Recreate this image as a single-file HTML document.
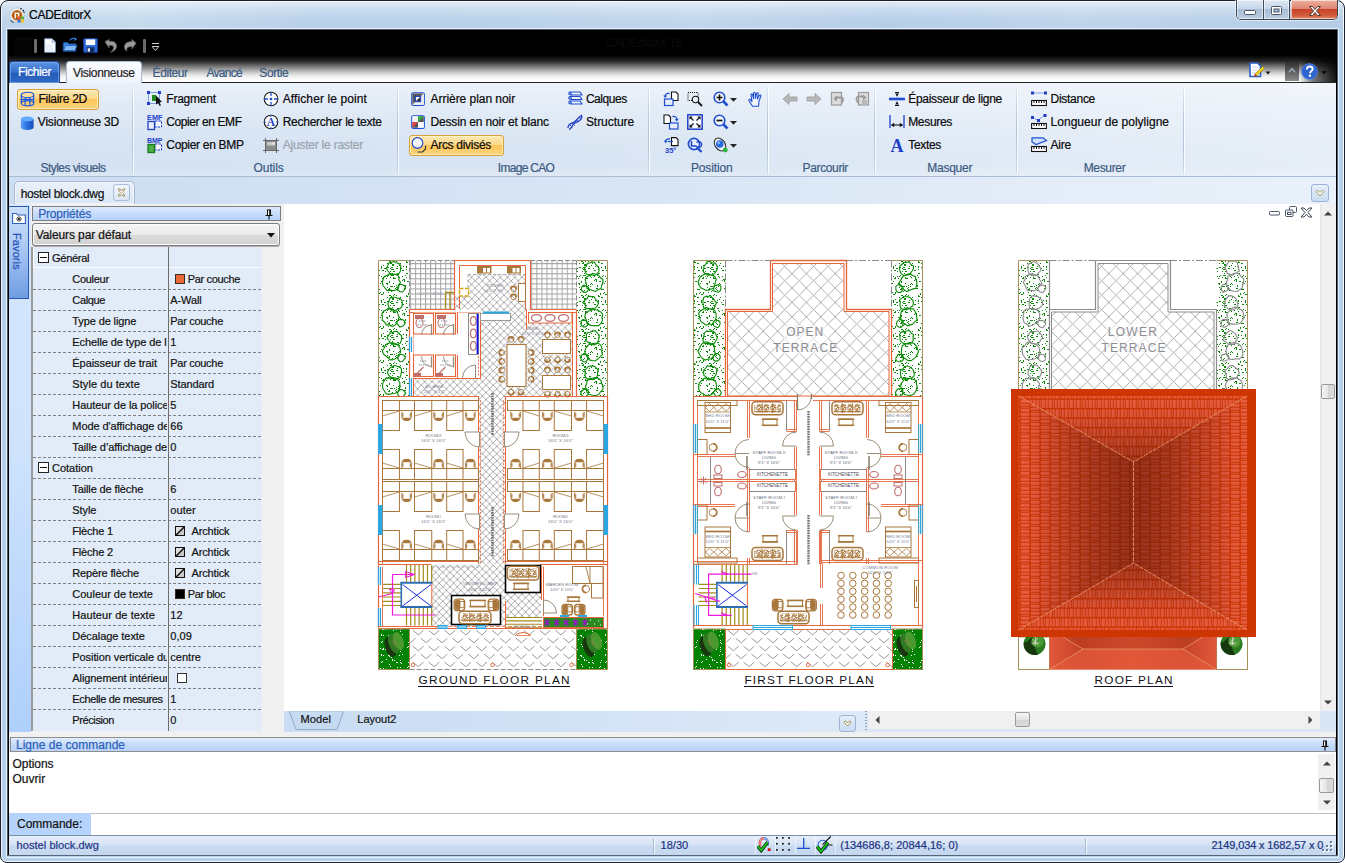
<!DOCTYPE html>
<html><head><meta charset="utf-8"><title>CADEditorX</title><style>
html,body{margin:0;padding:0;background:#fff;}
body{width:1345px;height:863px;overflow:hidden;position:relative;font-family:"Liberation Sans",sans-serif;}
.a{position:absolute;display:block;}
.t{position:absolute;white-space:nowrap;-webkit-text-stroke:.2px currentColor;font-family:"Liberation Sans",sans-serif;}
#frame{left:0;top:0;width:1345px;height:863px;box-sizing:border-box;border:1px solid #1a202c;border-radius:8px 8px 7px 7px;background:#b5d0ec;box-shadow:inset 0 0 0 1px #f4f9fe;}
#titlebg{left:2px;top:2px;width:1341px;height:27px;border-radius:6px 6px 0 0;background:linear-gradient(180deg,rgba(255,255,255,.55) 0,rgba(255,255,255,.22) 9px,rgba(255,255,255,0) 20px),linear-gradient(100deg,#bcd3ea 0%,#c6daee 10%,#b8d0e9 24%,#bad2ea 40%,#c1d6ec 52%,#b6cee8 66%,#bdd4eb 80%,#b5cde7 100%);}
#frame2{left:6px;top:28px;width:1333px;height:830px;box-sizing:border-box;border:1px solid rgba(236,244,252,.95);}
#frame3{left:7px;top:29px;width:1331px;height:827px;box-sizing:border-box;border:1px solid #4a5868;border-bottom-color:#56667a;background:#dbe6f5;box-shadow:inset 1px 0 #000,inset -1px 0 #000,inset 0 1px #000;}
#capbtns{left:1236px;top:0;width:102px;height:20px;border:1px solid #3d4856;border-top:none;border-radius:0 0 5px 5px;box-sizing:border-box;overflow:hidden;box-shadow:0 0 0 1px rgba(255,255,255,.55)}
.cb{position:absolute;top:0;height:19px;box-sizing:border-box;border-right:1px solid #3d4856;background:linear-gradient(#dde8f4,#c6d6e8 48%,#a9bed6 50%,#bccde2);box-shadow:inset 0 0 0 1px rgba(255,255,255,.55)}
.cx{border-right:none;background:linear-gradient(#efb09e,#dd8470 48%,#c9432b 50%,#d0593c 80%,#e08a62);}
#glass{left:9px;top:30px;width:1327px;height:53px;background:linear-gradient(#000 0,#000 25px,#262626 31px,#858585 37.5px,#d6d6d6 43.5px,#f3f3f3 47px,#fff 51px);}
#tabline{left:9px;top:82px;width:1327px;height:1px;background:#20242b;}
#fichier{left:9px;top:61px;width:51px;height:22px;box-sizing:border-box;border:1px solid #1d4a9e;border-bottom:none;border-radius:4px 4px 0 0;background:linear-gradient(#5d93e2,#3a73cf 45%,#245bb8 55%,#2f69c6);box-shadow:inset 0 0 0 1px rgba(140,180,240,.6)}
#vtab{left:66px;top:61px;width:76px;height:23px;box-sizing:border-box;border:1px solid #a9bcd6;border-bottom:none;border-radius:4px 4px 0 0;background:linear-gradient(#fbfcfe,#eef3fa);}
#ribbon{left:9px;top:83px;width:1327px;height:94px;box-sizing:border-box;border-bottom:1px solid #a9bcd6;background:linear-gradient(90deg,rgba(255,255,255,0) 0%,rgba(255,255,255,.12) 40%,rgba(255,255,255,.42) 100%),linear-gradient(#e9f0f9,#e0eaf6 22%,#d6e3f3 60%,#d3e1f2 88%,#dae6f4);}
#docbar{left:9px;top:177px;width:1327px;height:27px;background:linear-gradient(90deg,#cddef2 0%,#d2e1f3 25%,#dbe7f6 55%,#e4edf8 80%,#e9f1fa 100%);}
#doctab{left:14px;top:181px;width:121px;height:23px;box-sizing:border-box;border:1px solid #a3b7d6;border-bottom:none;border-radius:5px 5px 0 0;background:linear-gradient(#e9f0fa,#dbe6f5);box-shadow:inset 0 0 0 1px rgba(255,255,255,.6)}
</style></head><body>
<div class="a" id="frame"></div>
<div class="a" id="titlebg"></div>
<div class="a" id="frame2"></div>
<div class="a" id="frame3"></div>
<svg class="a" style="left:9px;top:7px;" width="16" height="17" viewBox="0 0 16 17">
      <circle cx="8" cy="8" r="7.3" fill="#e9eef5" stroke="#b9c3d0" stroke-width="0.8"/>
      <circle cx="8" cy="8.3" r="5.3" fill="#c8701c"/>
      <circle cx="8" cy="8.3" r="3.6" fill="none" stroke="#8a3e08" stroke-width="1"/>
      <path d="M6.2 11.5V6.2h3.6v5.3" fill="none" stroke="#fff" stroke-width="1.3"/>
      <rect x="8.5" y="9.5" width="3.2" height="3" fill="#e2572a"/><rect x="11.8" y="9.5" width="3.2" height="3" fill="#58b232"/>
      <rect x="8.5" y="12.6" width="3.2" height="3" fill="#3d6fd0"/><rect x="11.8" y="12.6" width="3.2" height="3" fill="#efc52c"/>
      <circle cx="12" cy="1.8" r=".8" fill="#111"/><circle cx="14.2" cy="3.6" r=".8" fill="#111"/><circle cx="15" cy="5.2" r=".7" fill="#111"/>
      <circle cx="2.2" cy="14" r=".7" fill="#111"/><circle cx="4" cy="15.3" r=".7" fill="#111"/></svg>
<span class="t" style="left:29px;top:7.0px;line-height:16px;font-size:12px;color:#000;letter-spacing:-0.269px;">CADEditorX</span>
<div class="a" id="capbtns"><div class="cb" style="width:27px"></div><div class="cb" style="width:26px;left:27px"></div><div class="cb cx" style="left:54px;width:47px"></div></div>
<svg class="a" style="left:1244px;top:10px;" width="12" height="6" viewBox="0 0 12 6"><rect x=".5" y=".5" width="11" height="4" rx="1" fill="#fff" stroke="#4a5568" stroke-width="1"/></svg>
<svg class="a" style="left:1271px;top:6px;" width="12" height="10" viewBox="0 0 12 10"><rect x=".5" y=".5" width="10" height="8" rx="1" fill="#fff" stroke="#4a5568"/><rect x="3" y="3" width="5" height="3" fill="#a9bdd4" stroke="#4a5568"/></svg>
<svg class="a" style="left:1308px;top:5px;" width="14" height="12" viewBox="0 0 14 12"><path d="M1.5 1.5h3l2.5 3 2.5-3h3l-4 4.5 4 4.5h-3l-2.5-3-2.5 3h-3l4-4.5z" fill="#fff" stroke="#54392f" stroke-width="1"/></svg>
<div class="a" id="glass"></div>
<div class="a" style="left:14px;top:37px;width:18px;height:18px;background:#050505"></div>
<div class="a" style="left:34px;top:39px;width:3px;height:14px;background:#6a6a6a;border-radius:1px"></div>
<svg class="a" style="left:44px;top:38px;" width="12" height="15" viewBox="0 0 13 16"><path d="M.7.7h8l3.6 3.6v11H.7z" fill="#fff" stroke="#8aa0c8" stroke-width="1"/><path d="M8.7.7v3.6h3.6" fill="#dfe8f6" stroke="#8aa0c8"/><path d="M2 6h8v8H2z" fill="#eaf0fb"/></svg>
<svg class="a" style="left:62px;top:37px;" width="16" height="15" viewBox="0 0 17 17"><path d="M1 6.5h5l1 1.5h8v8H1z" fill="#3f8ee6" stroke="#1d5cb6"/><path d="M1 15.5l2.5-6h13l-2.5 6z" fill="#7fbaf5" stroke="#1d5cb6"/><path d="M8 4c2-3 5-3 7-1.5" fill="none" stroke="#2f7de0" stroke-width="1.2"/><path d="M13.3.8l2.2 1.9-2.6 1" fill="none" stroke="#2f7de0" stroke-width="1.2"/></svg>
<svg class="a" style="left:83px;top:38px;" width="15" height="15" viewBox="0 0 16 16"><rect x=".6" y=".6" width="14.8" height="14.8" rx="1" fill="#2d67d8" stroke="#1b3f9c"/><rect x="3" y="1.5" width="10" height="6" fill="#fff"/><rect x="4" y="10" width="8" height="5.5" fill="#12295e"/><rect x="5" y="11" width="2.5" height="3.5" fill="#e8eefb"/></svg>
<svg class="a" style="left:103px;top:38px;" width="15" height="15" viewBox="0 0 16 16"><path d="M2 4l4.5-2.5v2.2c5-.8 8 1.5 8 5 0 3-2.5 5.5-6.5 6.5 2.5-2 3.5-3.5 3.2-5.3-.3-1.7-2-2.4-4.700-2v2.600z" fill="#9a9a9a" stroke="#5e5e5e" stroke-width=".8"/></svg>
<svg class="a" style="left:123px;top:38px;" width="15" height="15" viewBox="0 0 16 16"><path d="M14 5.500L9.500 1.500v2.500C4.500 3.500 1.500 6 1.500 9.500c0 2 1 3.500 2.500 4.500-.5-2.500.5-5 5.500-5v2.500z" fill="#9a9a9a" stroke="#5e5e5e" stroke-width=".8"/></svg>
<div class="a" style="left:143px;top:39px;width:3px;height:14px;background:#6a6a6a;border-radius:1px"></div>
<svg class="a" style="left:151px;top:43px;" width="9" height="9" viewBox="0 0 9 9"><path d="M1 .5h7" stroke="#cfcfcf" stroke-width="1"/><path d="M1.200 3.500h6.600L4.500 7.500z" fill="none" stroke="#cfcfcf" stroke-width="1"/></svg>
<span class="t" style="left:606px;top:35.0px;line-height:16px;font-size:12px;color:#0b0b0b;letter-spacing:-0.412px;">CADEditorX 15</span>
<div class="a" style="left:1299px;top:56px;width:37px;height:26px;background:linear-gradient(90deg,rgba(0,0,0,0),rgba(0,0,0,.5) 35%,rgba(0,0,0,.92))"></div>
<div class="a" style="left:1285px;top:61px;width:14px;height:20px;background:linear-gradient(#2a2a2a,#8c8c8c)"></div>
<svg class="a" style="left:1249px;top:62px;" width="22" height="18" viewBox="0 0 22 18"><path d="M1 1h7.500l3 3v10.500H1z" fill="#fff" stroke="#2b5fc4" stroke-width="1.600"/><path d="M3 5h6M3 8h5M3 11h4" stroke="#c9d6ee" stroke-width="1"/><path d="M5 14.500l1.500-3L13.500 4.500l2 2L8 13.500z" fill="#f3d21e" stroke="#7d6a12" stroke-width=".6"/><path d="M5 14.500l1.200-2.600 1.700 1.700z" fill="#c22a2a"/><path d="M16.500 9.500h5l-2.500 3z" fill="#111"/></svg>
<svg class="a" style="left:1287px;top:66px;" width="10" height="8" viewBox="0 0 10 8"><path d="M1 6l4-4.500 4 4.500-1.500 1L5 4 2.500 7z" fill="#b6bcc6" stroke="#5b6472" stroke-width=".8"/></svg>
<svg class="a" style="left:1301px;top:63px;" width="17" height="17" viewBox="0 0 17 17"><circle cx="8.500" cy="8.500" r="8" fill="#3c70d6" stroke="#5d8ae6" stroke-width=".8" stroke-dasharray="1.500 1"/><circle cx="8.500" cy="8.500" r="7" fill="#2f63cf"/><path d="M5.800 6.500c0-2 1.300-3 2.900-3 1.700 0 2.900 1 2.900 2.500 0 2.200-2.600 2.200-2.600 4.300" fill="none" stroke="#fff" stroke-width="1.900"/><circle cx="8.900" cy="12.800" r="1.200" fill="#fff"/></svg>
<svg class="a" style="left:1321px;top:71px;" width="7" height="4" viewBox="0 0 7 4"><path d="M0 0h6L3 3.500z" fill="#111"/></svg>
<div class="a" id="tabline"></div>
<div class="a" id="fichier"></div>
<span class="t" style="left:18px;top:64.0px;line-height:16px;font-size:12px;color:#fff;letter-spacing:-0.431px;">Fichier</span>
<div class="a" id="vtab"></div>
<span class="t" style="left:73px;top:65.0px;line-height:16px;font-size:12px;color:#1e1e1e;letter-spacing:-0.332px;">Visionneuse</span>
<span class="t" style="left:152.6px;top:65.0px;line-height:16px;font-size:12px;color:#3b5a82;letter-spacing:-0.431px;">Éditeur</span>
<span class="t" style="left:206.4px;top:65.0px;line-height:16px;font-size:12px;color:#3b5a82;letter-spacing:-0.716px;">Avancé</span>
<span class="t" style="left:259.3px;top:65.0px;line-height:16px;font-size:12px;color:#3b5a82;letter-spacing:-0.391px;">Sortie</span>
<div class="a" id="ribbon"></div>
<div class="a" style="left:132px;top:86px;width:1px;height:88px;background:linear-gradient(rgba(160,180,205,.15),#b4c5da 40%,#b4c5da 70%,rgba(160,180,205,.3))"></div>
<div class="a" style="left:133px;top:86px;width:1px;height:88px;background:rgba(255,255,255,.85)"></div>
<div class="a" style="left:397px;top:86px;width:1px;height:88px;background:linear-gradient(rgba(160,180,205,.15),#b4c5da 40%,#b4c5da 70%,rgba(160,180,205,.3))"></div>
<div class="a" style="left:398px;top:86px;width:1px;height:88px;background:rgba(255,255,255,.85)"></div>
<div class="a" style="left:648px;top:86px;width:1px;height:88px;background:linear-gradient(rgba(160,180,205,.15),#b4c5da 40%,#b4c5da 70%,rgba(160,180,205,.3))"></div>
<div class="a" style="left:649px;top:86px;width:1px;height:88px;background:rgba(255,255,255,.85)"></div>
<div class="a" style="left:767px;top:86px;width:1px;height:88px;background:linear-gradient(rgba(160,180,205,.15),#b4c5da 40%,#b4c5da 70%,rgba(160,180,205,.3))"></div>
<div class="a" style="left:768px;top:86px;width:1px;height:88px;background:rgba(255,255,255,.85)"></div>
<div class="a" style="left:874px;top:86px;width:1px;height:88px;background:linear-gradient(rgba(160,180,205,.15),#b4c5da 40%,#b4c5da 70%,rgba(160,180,205,.3))"></div>
<div class="a" style="left:875px;top:86px;width:1px;height:88px;background:rgba(255,255,255,.85)"></div>
<div class="a" style="left:1016px;top:86px;width:1px;height:88px;background:linear-gradient(rgba(160,180,205,.15),#b4c5da 40%,#b4c5da 70%,rgba(160,180,205,.3))"></div>
<div class="a" style="left:1017px;top:86px;width:1px;height:88px;background:rgba(255,255,255,.85)"></div>
<div class="a" style="left:1183px;top:86px;width:1px;height:88px;background:linear-gradient(rgba(160,180,205,.15),#b4c5da 40%,#b4c5da 70%,rgba(160,180,205,.3))"></div>
<div class="a" style="left:1184px;top:86px;width:1px;height:88px;background:rgba(255,255,255,.85)"></div>
<span class="t" style="left:40.5px;top:160.0px;line-height:16px;font-size:12px;color:#3b5a82;letter-spacing:-0.549px;">Styles visuels</span>
<span class="t" style="left:253.60000000000002px;top:160.0px;line-height:16px;font-size:12px;color:#3b5a82;letter-spacing:-0.112px;">Outils</span>
<span class="t" style="left:497.85px;top:160.0px;line-height:16px;font-size:12px;color:#3b5a82;letter-spacing:-0.708px;">Image CAO</span>
<span class="t" style="left:690.9499999999999px;top:160.0px;line-height:16px;font-size:12px;color:#3b5a82;letter-spacing:-0.123px;">Position</span>
<span class="t" style="left:802.5999999999999px;top:160.0px;line-height:16px;font-size:12px;color:#3b5a82;letter-spacing:-0.365px;">Parcourir</span>
<span class="t" style="left:927.2px;top:160.0px;line-height:16px;font-size:12px;color:#3b5a82;letter-spacing:-0.241px;">Masquer</span>
<span class="t" style="left:1083.7px;top:160.0px;line-height:16px;font-size:12px;color:#3b5a82;letter-spacing:-0.345px;">Mesurer</span>
<div class="a" style="left:17px;top:89px;width:80px;height:19px;border:1px solid #d9a13a;border-radius:3px;background:linear-gradient(#fde9b4,#fdd98a 45%,#fcc55a 50%,#fdd57e);box-shadow:inset 0 0 0 1px rgba(255,245,210,.7)"></div>
<div class="a" style="left:409px;top:135px;width:93px;height:19px;border:1px solid #d9a13a;border-radius:3px;background:linear-gradient(#fde9b4,#fdd98a 45%,#fcc55a 50%,#fdd57e);box-shadow:inset 0 0 0 1px rgba(255,245,210,.7)"></div>
<svg class="a" style="left:19.5px;top:90.5px;overflow:visible;" width="15" height="16" viewBox="0 0 16 16"><g fill="none" stroke="#1b57e6" stroke-width="1.300"><ellipse cx="8" cy="3.600" rx="6.600" ry="2.800"/><ellipse cx="8" cy="12.500" rx="6.600" ry="2.800"/><path d="M1.400 3.600v8.900M14.600 3.600v8.900M5.500 6.200v8.900M10.500 6.200v8.900M1.400 8.300h13.200"/></g></svg>
<span class="t" style="left:38.5px;top:91.0px;line-height:16px;font-size:12px;color:#0a0a0a;letter-spacing:-0.286px;">Filaire 2D</span>
<svg class="a" style="left:20px;top:114.5px;overflow:visible;" width="14.5" height="16" viewBox="0 0 16 16"><defs><linearGradient id="gc" x1="0" x2="1"><stop offset="0" stop-color="#5aa0f8"/><stop offset=".45" stop-color="#2d74e6"/><stop offset="1" stop-color="#1b4fb8"/></linearGradient></defs><path d="M1 3.500v9.500a7 2.700 0 0 0 14 0V3.500z" fill="url(#gc)"/><ellipse cx="8" cy="3.500" rx="7" ry="2.700" fill="#63a9fb"/></svg>
<span class="t" style="left:37.8px;top:114.0px;line-height:16px;font-size:12px;color:#0a0a0a;letter-spacing:-0.188px;">Visionneuse 3D</span>
<svg class="a" style="left:147px;top:91px;overflow:visible;" width="16" height="16" viewBox="0 0 16 16"><rect x="1.500" y="1.500" width="11" height="11" fill="none" stroke="#1f4fd0" stroke-dasharray="1 1"/><rect x="0" y="0" width="3" height="3" fill="#1f3fc8"/><rect x="11" y="0" width="3" height="3" fill="#1f3fc8"/><rect x="0" y="11" width="3" height="3" fill="#1f3fc8"/><rect x="5" y="4" width="4" height="6" fill="#1d8a22"/><path d="M9 4.500l6 6.500-2.600.2 1.600 3-1.300.7-1.600-3L9 13.500z" fill="#111"/></svg>
<span class="t" style="left:166.3px;top:91.0px;line-height:16px;font-size:12px;color:#0a0a0a;letter-spacing:-0.230px;">Fragment</span>
<svg class="a" style="left:147px;top:114px;overflow:visible;" width="16" height="16" viewBox="0 0 16 16"><text x="0" y="5.500" font-size="6.500" font-weight="bold" fill="#1f3fc8" font-family="Liberation Sans" textLength="15.500" lengthAdjust="spacingAndGlyphs">EMF</text><rect x="8" y="7" width="6.500" height="6" fill="#f4f7fd" stroke="#1f3fc8" stroke-dasharray="2.500 1"/><rect x="1" y="7.500" width="6.500" height="8" fill="#e9eefb" stroke="#1f3fc8" stroke-width="1.300"/></svg>
<span class="t" style="left:166.3px;top:114.0px;line-height:16px;font-size:12px;color:#0a0a0a;letter-spacing:-0.414px;">Copier en EMF</span>
<svg class="a" style="left:147px;top:137px;overflow:visible;" width="16" height="16" viewBox="0 0 16 16"><text x="0" y="5.500" font-size="6.500" font-weight="bold" fill="#1f3fc8" font-family="Liberation Sans" textLength="15.500" lengthAdjust="spacingAndGlyphs">BMP</text><rect x="8" y="7" width="6.500" height="6" fill="#f4f7fd" stroke="#1f3fc8" stroke-dasharray="2.500 1"/><rect x="1" y="7.500" width="6.500" height="8" fill="#4fb04a" stroke="#167a1a" stroke-width="1.300"/></svg>
<span class="t" style="left:166.3px;top:137.0px;line-height:16px;font-size:12px;color:#0a0a0a;letter-spacing:-0.312px;">Copier en BMP</span>
<svg class="a" style="left:263px;top:91px;overflow:visible;" width="16" height="16" viewBox="0 0 16 16"><circle cx="8" cy="8" r="6.800" fill="#fdfdfd" stroke="#1b1b1b" stroke-width="1.100"/><path d="M8 1.500v3.500M8 11v3.500M1.500 8H5M11 8h3.500" stroke="#1f4fd0" stroke-width="1.300"/><rect x="6.800" y="6.800" width="2.400" height="2.400" fill="#1f4fd0"/></svg>
<span class="t" style="left:282.7px;top:91.0px;line-height:16px;font-size:12px;color:#0a0a0a;letter-spacing:0.108px;">Afficher le point</span>
<svg class="a" style="left:263px;top:114px;overflow:visible;" width="16" height="16" viewBox="0 0 16 16"><circle cx="8" cy="8" r="6.800" fill="#fdfdfd" stroke="#1b1b1b" stroke-width="1.100"/><path d="M8 1v1.800M8 13.200V15M1 8h2M13 8h2" stroke="#1f4fd0" stroke-width="1.200"/><text x="8" y="12.300" text-anchor="middle" font-family="Liberation Serif" font-weight="bold" font-size="11.500" fill="#1f3fc8">A</text></svg>
<span class="t" style="left:282.7px;top:114.0px;line-height:16px;font-size:12px;color:#0a0a0a;letter-spacing:-0.265px;">Rechercher le texte</span>
<svg class="a" style="left:263px;top:137px;overflow:visible;" width="16" height="16" viewBox="0 0 16 16"><rect x="3" y="4" width="10" height="9" fill="#8c8c8c"/><rect x="4" y="5" width="8" height="3.500" fill="#c8c8c8"/><rect x="9.500" y="5.500" width="2" height="2" fill="#eee"/><path d="M2.500 1v15M13.500 1v15M0 3.500h16M0 13.500h16" stroke="#5a5a5a" stroke-width=".9" fill="none"/></svg>
<span class="t" style="left:282.7px;top:137.0px;line-height:16px;font-size:12px;color:#9aa3ad;letter-spacing:-0.219px;">Ajuster le raster</span>
<svg class="a" style="left:411px;top:91.5px;overflow:visible;" width="15" height="15" viewBox="0 0 16 16"><rect x=".8" y=".8" width="13.400" height="13.400" rx="1.500" fill="#fff" stroke="#1f4fd0" stroke-width="1.200"/><path d="M1.500 1.500h12L1.500 13.500z" fill="#555"/><path d="M13.500 1.500v12h-12z" fill="#f2f2f2"/><rect x="4.700" y="4.700" width="5.600" height="5.600" fill="#fff" stroke="#1f3fc8" stroke-width="1.200"/><path d="M5.300 9.700l4.400-4.400v4.400z" fill="#333"/></svg>
<span class="t" style="left:430.5px;top:91.0px;line-height:16px;font-size:12px;color:#0a0a0a;letter-spacing:-0.040px;">Arrière plan noir</span>
<svg class="a" style="left:411px;top:114.5px;overflow:visible;" width="15" height="15" viewBox="0 0 16 16"><rect x=".8" y=".8" width="13.400" height="13.400" rx="1.500" fill="#fff" stroke="#1f4fd0" stroke-width="1.200"/><rect x="1.500" y="1.500" width="6" height="6" fill="#f4f4f4"/><rect x="7.500" y="1.500" width="6" height="6" fill="#555"/><path d="M7.500 1.500h6v.1l-6 5.900z" fill="#2db53c"/><rect x="1.500" y="7.500" width="6" height="6" fill="#555"/><path d="M1.500 7.500h6l-6 6z" fill="#e8434a"/><rect x="7.500" y="7.500" width="6" height="6" fill="#fafafa"/></svg>
<span class="t" style="left:430.5px;top:114.0px;line-height:16px;font-size:12px;color:#0a0a0a;letter-spacing:-0.167px;">Dessin en noir et blanc</span>
<svg class="a" style="left:411px;top:137px;overflow:visible;" width="16" height="16" viewBox="0 0 16 16"><circle cx="6.500" cy="6" r="5.300" fill="#f4f7fd" stroke="#1f4fd0" stroke-width="1.200"/><path d="M14.500 8.500v3.500l-3 3H6.500" fill="none" stroke="#333" stroke-width="1.100"/></svg>
<span class="t" style="left:430.5px;top:137.0px;line-height:16px;font-size:12px;color:#0a0a0a;letter-spacing:-0.293px;">Arcs divisés</span>
<svg class="a" style="left:567px;top:91px;overflow:visible;" width="16" height="16" viewBox="0 0 16 16"><path d="M3 1h10l2 3H5z M3 5.500h10l2 3H5z M3 10h10l2 3H5z" fill="#f2f6fd" stroke="#1f4fd0" stroke-width="1.200" stroke-linejoin="round"/><path d="M3 1C1 2 1 4 5 4M3 5.500C1 6.500 1 8.500 5 8.500M3 10c-2 1-2 3 2 3" fill="none" stroke="#1f4fd0" stroke-width="1.200"/></svg>
<span class="t" style="left:585.9px;top:91.0px;line-height:16px;font-size:12px;color:#0a0a0a;letter-spacing:-0.447px;">Calques</span>
<svg class="a" style="left:567px;top:114px;overflow:visible;" width="16" height="16" viewBox="0 0 16 16"><path d="M1 14C1 8 6 10 8 7.500S12 3 15 1" fill="none" stroke="#1f3fc8" stroke-width="1.300"/><path d="M2 15.500C5 15 4 11 8 9s6-2 7-7" fill="none" stroke="#1f3fc8" stroke-width="1.300"/><path d="M2.500 10.500l3 3M5 9l3 2.800M9 5.500l3 2.600M11.500 3l2.600 2.600" stroke="#1f3fc8" stroke-width=".9"/></svg>
<span class="t" style="left:585.9px;top:114.0px;line-height:16px;font-size:12px;color:#0a0a0a;letter-spacing:-0.041px;">Structure</span>
<svg class="a" style="left:663px;top:91px;overflow:visible;" width="16" height="16" viewBox="0 0 16 16"><path d="M8.5 1h4.5l2 2v6.5h-6.5z" fill="#fff" stroke="#111" stroke-width="1.100"/><rect x="1.500" y="8" width="8.500" height="6.500" fill="#e6ecfa" stroke="#1f4fd0" stroke-width="1.200"/><path d="M6.500 2.500C3.500 2 2 3.500 2 6" fill="none" stroke="#1f4fd0" stroke-width="1.300"/><path d="M.3 4.300L2 7l2.200-2.300z" fill="#1f4fd0"/></svg>
<svg class="a" style="left:687px;top:91px;overflow:visible;" width="16" height="16" viewBox="0 0 16 16"><rect x="1" y="1.500" width="10" height="8" fill="none" stroke="#111" stroke-dasharray="1 1"/><circle cx="8.500" cy="8.500" r="3.200" fill="#eaf1fc" stroke="#111" stroke-width="1.100"/><path d="M11 11l4 4" stroke="#111" stroke-width="1.800"/></svg>
<svg class="a" style="left:713px;top:91px;overflow:visible;" width="16" height="16" viewBox="0 0 16 16"><circle cx="6.500" cy="6.500" r="5.300" fill="#f4f8fe" stroke="#1f4fd0" stroke-width="1.600"/><path d="M10.500 10.500l4 4" stroke="#1f4fd0" stroke-width="2.600"/><path d="M3.500 6.500h6M6.500 3.500v6" stroke="#111" stroke-width="1.700"/></svg>
<svg class="a" style="left:730px;top:98px;" width="7" height="4" viewBox="0 0 7 4"><path d="M0 0h7L3.500 3.700z" fill="#222"/></svg>
<svg class="a" style="left:747px;top:90.5px;overflow:visible;" width="16" height="16" viewBox="0 0 16 16"><path d="M5.500 15.200L2 9.700C1.300 8.500 2.700 7.700 3.500 8.700L5 10.600 4 4.200C3.800 3 5.300 2.700 5.600 3.900l.9 3.800V2.200c0-1.300 1.700-1.300 1.700 0l.2 5.300 1.200-5c.3-1.200 1.900-.8 1.600.4l-.9 5.100 2-3.500c.6-1 2-.3 1.500.8L12 10.200l-.5 5z" fill="#f4f8fe" stroke="#1f4fd0" stroke-width="1.100" stroke-linejoin="round"/></svg>
<svg class="a" style="left:663px;top:114px;overflow:visible;" width="16" height="16" viewBox="0 0 16 16"><path d="M1 1h4.5l2 2v6.5h-6.5z" fill="#fff" stroke="#111" stroke-width="1.100"/><rect x="6.500" y="9" width="8.500" height="6" fill="#e6ecfa" stroke="#1f4fd0" stroke-width="1.200"/><path d="M9.500 2.500c3-.5 4.500 1 4.500 3.500" fill="none" stroke="#1f4fd0" stroke-width="1.300"/><path d="M15.700 4.800L14 7.500l-2.200-2.300z" fill="#1f4fd0"/></svg>
<svg class="a" style="left:687px;top:114px;overflow:visible;" width="16" height="16" viewBox="0 0 16 16"><rect x=".8" y=".8" width="14.400" height="14.400" fill="#f6f9fe" stroke="#1f3fc8" stroke-width="1.500"/><path d="M3 3l3.500 3.500M13 3L9.500 6.500M3 13l3.500-3.500M13 13l-3.500-3.500" stroke="#111" stroke-width="1.200"/><path d="M2.500 2.500h3.200L2.500 5.700zM13.500 2.500v3.200L10.300 2.500zM2.500 13.500v-3.200l3.200 3.200zM13.500 13.500h-3.200l3.200-3.200z" fill="#111"/></svg>
<svg class="a" style="left:713px;top:114px;overflow:visible;" width="16" height="16" viewBox="0 0 16 16"><circle cx="6.500" cy="6.500" r="5.300" fill="#f4f8fe" stroke="#1f4fd0" stroke-width="1.600"/><path d="M10.500 10.500l4 4" stroke="#1f4fd0" stroke-width="2.600"/><path d="M3.500 6.500h6" stroke="#111" stroke-width="1.700"/></svg>
<svg class="a" style="left:730px;top:121px;" width="7" height="4" viewBox="0 0 7 4"><path d="M0 0h7L3.500 3.700z" fill="#222"/></svg>
<svg class="a" style="left:663px;top:137px;overflow:visible;" width="16" height="16" viewBox="0 0 16 16"><path d="M8.5 0.6h4.5l2 2v6h-6.5z" fill="#fff" stroke="#111" stroke-width="1.100"/><path d="M7 2C4 1.500 2.500 3 2.500 5" fill="none" stroke="#1f4fd0" stroke-width="1.300"/><path d="M.8 3.600L2.500 6.300l2.200-2.300z" fill="#1f4fd0"/><path d="M5 4.500h5" stroke="#1f4fd0" stroke-width="1.200"/><text x="2" y="15.500" font-family="Liberation Sans" font-weight="bold" font-size="7.500" fill="#1f3fc8">35°</text></svg>
<svg class="a" style="left:687px;top:137px;overflow:visible;" width="16" height="16" viewBox="0 0 16 16"><circle cx="7" cy="7" r="5.600" fill="#e8f0fd" stroke="#1f4fd0" stroke-width="1.700"/><path d="M10.500 11l4 4" stroke="#1f4fd0" stroke-width="2.400"/><path d="M4.500 4v5h5" fill="none" stroke="#1f3fc8" stroke-width="1.500"/><path d="M9.500 5.500a3 3 0 1 1-.5 3.500" fill="none" stroke="#1f3fc8" stroke-width="1.300"/></svg>
<svg class="a" style="left:713px;top:137px;overflow:visible;" width="16" height="16" viewBox="0 0 16 16"><ellipse cx="7" cy="7.500" rx="5" ry="7" transform="rotate(-35 7 7.500)" fill="#eef1f6" stroke="#333" stroke-width="1.100"/><circle cx="6.800" cy="7" r="3.800" fill="#2a6be0"/><circle cx="5.800" cy="5.800" r="1.400" fill="#8ab6f6"/><circle cx="12.300" cy="13" r="2.400" fill="#2bb53a"/></svg>
<svg class="a" style="left:730px;top:144px;" width="7" height="4" viewBox="0 0 7 4"><path d="M0 0h7L3.500 3.700z" fill="#222"/></svg>
<svg class="a" style="left:782px;top:91px;overflow:visible;" width="16" height="16" viewBox="0 0 16 16"><path d="M1 8l6-5.500V6h8v4H7v3.500z" fill="#b8b8b8" stroke="#9a9a9a" stroke-width=".8"/></svg>
<svg class="a" style="left:806px;top:91px;overflow:visible;" width="16" height="16" viewBox="0 0 16 16"><path d="M15 8L9 2.500V6H1v4h8v3.500z" fill="#b8b8b8" stroke="#9a9a9a" stroke-width=".8"/></svg>
<svg class="a" style="left:830px;top:91px;overflow:visible;" width="16" height="16" viewBox="0 0 16 16"><rect x="1.500" y="1.500" width="10" height="12.500" fill="#dcdcdc" stroke="#9a9a9a" stroke-width="1.200"/><path d="M6 9.500V6.500h4.500C13.500 6 14 9.500 11.500 12" fill="none" stroke="#9a9a9a" stroke-width="1.800"/><path d="M3.500 7.500L7 4.500v6z" fill="#9a9a9a"/></svg>
<svg class="a" style="left:854px;top:91px;overflow:visible;" width="16" height="16" viewBox="0 0 16 16"><rect x="4.500" y="1.500" width="10" height="12.500" fill="#dcdcdc" stroke="#9a9a9a" stroke-width="1.200"/><path d="M5 12C1.500 10 1.500 5 6 5.500h4" fill="none" stroke="#9a9a9a" stroke-width="1.800"/><path d="M12.500 6.500L9 3.500v6z" fill="#9a9a9a"/><rect x="8" y="9" width="5" height="4" fill="#b8b8b8"/></svg>
<svg class="a" style="left:889px;top:91px;overflow:visible;" width="16" height="16" viewBox="0 0 16 16"><rect x="0" y="6.700" width="16" height="2.600" fill="#1f4fd0"/><path d="M8 5.800L6.200 2.500h3.600zM8 10.200l-1.800 3.300h3.600z" fill="#111"/><path d="M6 1.500h4M6 14.500h4" stroke="#111" stroke-width="1"/></svg>
<span class="t" style="left:908.2px;top:91.0px;line-height:16px;font-size:12px;color:#0a0a0a;letter-spacing:-0.273px;">Épaisseur de ligne</span>
<svg class="a" style="left:889px;top:114px;overflow:visible;" width="16" height="16" viewBox="0 0 16 16"><path d="M1 1v13M15 1v13" stroke="#1f3fc8" stroke-width="1.300"/><path d="M2.500 11h11" stroke="#111" stroke-width="1.100"/><path d="M2 11l3.200-2.300v4.600zM14 11l-3.200-2.300v4.600z" fill="#111"/></svg>
<span class="t" style="left:908.2px;top:114.0px;line-height:16px;font-size:12px;color:#0a0a0a;letter-spacing:-0.317px;">Mesures</span>
<svg class="a" style="left:889px;top:137px;overflow:visible;" width="16" height="16" viewBox="0 0 16 16"><text x="8" y="15" text-anchor="middle" font-family="Liberation Serif" font-weight="bold" font-size="18" fill="#1f3fc8">A</text></svg>
<span class="t" style="left:908.2px;top:137.0px;line-height:16px;font-size:12px;color:#0a0a0a;letter-spacing:-0.312px;">Textes</span>
<svg class="a" style="left:1031px;top:91px;overflow:visible;" width="16" height="16" viewBox="0 0 16 16"><rect x=".600" y="9.500" width="14.800" height="5" fill="#fff" stroke="#111" stroke-width="1.100"/><path d="M3 9.500v2.500M5.500 9.500v2.500M8 9.500v2.500M10.500 9.500v2.500M13 9.500v2.500" stroke="#111" stroke-width="1"/><rect x="0" y=".5" width="3" height="3" fill="#1f3fc8"/><rect x="13" y=".5" width="3" height="3" fill="#1f3fc8"/><path d="M3.500 2h9" stroke="#1f3fc8" stroke-dasharray="1 1"/></svg>
<span class="t" style="left:1050.6px;top:91.0px;line-height:16px;font-size:12px;color:#0a0a0a;letter-spacing:-0.286px;">Distance</span>
<svg class="a" style="left:1031px;top:114px;overflow:visible;" width="16" height="16" viewBox="0 0 16 16"><rect x=".600" y="9.500" width="14.800" height="5" fill="#fff" stroke="#111" stroke-width="1.100"/><path d="M3 9.500v2.500M5.500 9.500v2.500M8 9.500v2.500M10.500 9.500v2.500M13 9.500v2.500" stroke="#111" stroke-width="1"/><rect x="0" y="2" width="3" height="3" fill="#1f3fc8"/><rect x="6" y="5" width="3" height="3" fill="#1f3fc8"/><rect x="12.500" y="0" width="3" height="3" fill="#1f3fc8"/><path d="M2 3.500l5 3 6-5" stroke="#1f3fc8" stroke-dasharray="1 1" fill="none"/></svg>
<span class="t" style="left:1050.6px;top:114.0px;line-height:16px;font-size:12px;color:#0a0a0a;letter-spacing:0.015px;">Longueur de polyligne</span>
<svg class="a" style="left:1031px;top:137px;overflow:visible;" width="16" height="16" viewBox="0 0 16 16"><rect x=".600" y="9.500" width="14.800" height="5" fill="#fff" stroke="#111" stroke-width="1.100"/><path d="M3 9.500v2.500M5.500 9.500v2.500M8 9.500v2.500M10.500 9.500v2.500M13 9.500v2.500" stroke="#111" stroke-width="1"/><path d="M1 .8h11l3.500 2.700L5 7.500 1 5z" fill="#cfe0fa" stroke="#1f4fd0" stroke-width="1.200"/></svg>
<span class="t" style="left:1050.6px;top:137.0px;line-height:16px;font-size:12px;color:#0a0a0a;letter-spacing:-0.286px;">Aire</span>
<div class="a" id="docbar"></div>
<div class="a" id="doctab"></div>
<span class="t" style="left:20.7px;top:186.0px;line-height:16px;font-size:12px;color:#111;letter-spacing:-0.338px;">hostel block.dwg</span>
<div class="a" style="left:113px;top:184px;width:17px;height:17px;border:1px solid #a9bcd8;border-radius:3px;background:linear-gradient(#f0f5fc,#dbe6f5);box-sizing:border-box"></div>
<svg class="a" style="left:117px;top:188px;" width="9" height="9" viewBox="0 0 9 9"><path d="M1 1h2l1.500 2L6 1h2L5.500 4.500 8 8H6L4.500 6 3 8H1l2.500-3.500z" fill="#fff" stroke="#9a8a4a" stroke-width=".9"/></svg>
<div class="a" style="left:1311px;top:184px;width:18px;height:18px;border:1px solid #9fb4d2;border-radius:3px;background:linear-gradient(#e6eef9,#c9dbf2);box-sizing:border-box"></div>
<svg class="a" style="left:1315px;top:189px;" width="10" height="8" viewBox="0 0 10 8"><path d="M1 2.500l1.500-1.500L5 3.500 7.500 1 9 2.500 5 7z" fill="#fff" stroke="#9a8a4a" stroke-width=".9"/></svg>
<div class="a" style="left:9px;top:204px;width:22px;height:528px;background:linear-gradient(#d6e7fe,#cfe3fd 45%,#afd0fb)"></div>
<div class="a" style="left:9px;top:732px;width:1327px;height:6px;background:#f0f0f0"></div>
<div class="a" style="left:9px;top:206px;width:20px;height:93px;border:1px solid #2a56b4;border-left:none;background:linear-gradient(#cbdffb,#b4cff6 35%,#8fb4ec 70%,#6f9de2);box-sizing:border-box"></div>
<svg class="a" style="left:12px;top:211px;" width="14" height="13" viewBox="0 0 14 13"><path d="M.600 2.500h4l1 1.500h7.800v8.500H.600z" fill="#fff" stroke="#2e62b8" stroke-width="1.100"/><path d="M7 5v6M4 8h6M5 6l4 4M9 6l-4 4" stroke="#222" stroke-width=".8"/></svg>
<span class="t" style="left:8.5px;top:233px;writing-mode:vertical-rl;font-size:11px;color:#2450b4;line-height:15px;letter-spacing:.1px">Favoris</span>
<div class="a" style="left:31px;top:204px;width:253px;height:528px;background:#f0f0f0"></div>
<div class="a" style="left:32px;top:206px;width:249px;height:15px;border:1px solid #7d7d7d;box-sizing:border-box;background:linear-gradient(#deeafd,#c8dcfb 50%,#b5d3fb)"></div>
<span class="t" style="left:38.2px;top:206.0px;line-height:16px;font-size:12px;color:#2b5fb8;letter-spacing:-0.189px;">Propriétés</span>
<svg class="a" style="left:265px;top:209px;" width="8" height="11" viewBox="0 0 8 11"><path d="M2 .5h4v5.500h1.500v1H.5V6H2z" fill="#111"/><rect x="3" y="1.500" width="1.200" height="4.500" fill="#fff"/><path d="M4 7v3.500" stroke="#111" stroke-width="1.200"/></svg>
<div class="a" style="left:32px;top:223px;width:248px;height:23px;border:1px solid #7d7d7d;border-radius:3px;box-sizing:border-box;background:linear-gradient(#f6f6f6,#e9e9e9 50%,#dadada 52%,#d2d2d2);box-shadow:inset 0 0 0 1px #fcfcfc, 0 1px 0 #b0b0b0"></div>
<span class="t" style="left:35.8px;top:227.0px;line-height:16px;font-size:12px;color:#111;letter-spacing:-0.108px;">Valeurs par défaut</span>
<svg class="a" style="left:267px;top:233px;" width="8" height="5" viewBox="0 0 8 5"><path d="M0 0h8L4 4.500z" fill="#111"/></svg>
<div class="a" style="left:262px;top:247px;width:19px;height:484px;background:#f1f1f1"></div>
<div class="a" style="left:31px;top:247px;width:231px;height:484px;background:#e2ecf8;border-left:2px solid #9a9a9a;box-sizing:border-box"></div>
<div class="a" style="left:33px;top:267px;width:229px;height:1px;background:#fbfdff"></div>
<div class="a" style="left:33px;top:247px;width:1px;height:21px;background:#fbfdff"></div>
<div class="a" style="left:38px;top:252px;width:11px;height:11px;border:1px solid #222;background:#fff;box-sizing:border-box"></div>
<div class="a" style="left:40px;top:257px;width:7px;height:1px;background:#111"></div>
<span class="t" style="left:52px;top:250.5px;line-height:15px;font-size:11px;color:#111;letter-spacing:-0.265px;">Général</span>
<span class="t" style="left:72.300px;top:271.5px;width:94.500px;overflow:hidden;font-size:11px;line-height:15px;color:#111;letter-spacing:-0.290px">Couleur</span>
<div class="a" style="left:174.5px;top:274px;width:10px;height:10px;background:#e8683a;border:1px solid #3a2a20;box-sizing:border-box"></div>
<span class="t" style="left:187.7px;top:271.5px;line-height:15px;font-size:11px;color:#111;letter-spacing:-0.319px;">Par couche</span>
<span class="t" style="left:72.300px;top:292.5px;width:94.500px;overflow:hidden;font-size:11px;line-height:15px;color:#111;letter-spacing:-0.362px">Calque</span>
<span class="t" style="left:170.3px;top:292.5px;line-height:15px;font-size:11px;color:#111;letter-spacing:-0.111px;">A-Wall</span>
<div class="a" style="left:33px;top:289px;width:229px;height:1px;background:repeating-linear-gradient(90deg,#808080 0 3px,transparent 3px 5px)"></div>
<span class="t" style="left:72.300px;top:313.5px;width:94.500px;overflow:hidden;font-size:11px;line-height:15px;color:#111;letter-spacing:-0.114px">Type de ligne</span>
<span class="t" style="left:170.3px;top:313.5px;line-height:15px;font-size:11px;color:#111;letter-spacing:-0.299px;">Par couche</span>
<div class="a" style="left:33px;top:310px;width:229px;height:1px;background:repeating-linear-gradient(90deg,#808080 0 3px,transparent 3px 5px)"></div>
<span class="t" style="left:72.300px;top:334.5px;width:94.500px;overflow:hidden;font-size:11px;line-height:15px;color:#111;letter-spacing:-.08px">Echelle de type de ligne</span>
<span class="t" style="left:170.3px;top:334.5px;line-height:15px;font-size:11px;color:#111;">1</span>
<div class="a" style="left:33px;top:331px;width:229px;height:1px;background:repeating-linear-gradient(90deg,#808080 0 3px,transparent 3px 5px)"></div>
<span class="t" style="left:72.300px;top:355.5px;width:94.500px;overflow:hidden;font-size:11px;line-height:15px;color:#111;letter-spacing:-0.053px">Épaisseur de trait</span>
<span class="t" style="left:170.3px;top:355.5px;line-height:15px;font-size:11px;color:#111;letter-spacing:-0.299px;">Par couche</span>
<div class="a" style="left:33px;top:352px;width:229px;height:1px;background:repeating-linear-gradient(90deg,#808080 0 3px,transparent 3px 5px)"></div>
<span class="t" style="left:72.300px;top:376.5px;width:94.500px;overflow:hidden;font-size:11px;line-height:15px;color:#111;letter-spacing:0.070px">Style du texte</span>
<span class="t" style="left:170.3px;top:376.5px;line-height:15px;font-size:11px;color:#111;letter-spacing:-0.123px;">Standard</span>
<div class="a" style="left:33px;top:373px;width:229px;height:1px;background:repeating-linear-gradient(90deg,#808080 0 3px,transparent 3px 5px)"></div>
<span class="t" style="left:72.300px;top:397.5px;width:94.500px;overflow:hidden;font-size:11px;line-height:15px;color:#111;letter-spacing:-.08px">Hauteur de la police</span>
<span class="t" style="left:170.3px;top:397.5px;line-height:15px;font-size:11px;color:#111;">5</span>
<div class="a" style="left:33px;top:394px;width:229px;height:1px;background:repeating-linear-gradient(90deg,#808080 0 3px,transparent 3px 5px)"></div>
<span class="t" style="left:72.300px;top:418.5px;width:94.500px;overflow:hidden;font-size:11px;line-height:15px;color:#111;letter-spacing:-.08px">Mode d'affichage des</span>
<span class="t" style="left:170.3px;top:418.5px;line-height:15px;font-size:11px;color:#111;">66</span>
<div class="a" style="left:33px;top:415px;width:229px;height:1px;background:repeating-linear-gradient(90deg,#808080 0 3px,transparent 3px 5px)"></div>
<span class="t" style="left:72.300px;top:439.5px;width:94.500px;overflow:hidden;font-size:11px;line-height:15px;color:#111;letter-spacing:-.08px">Taille d’affichage des</span>
<span class="t" style="left:170.3px;top:439.5px;line-height:15px;font-size:11px;color:#111;">0</span>
<div class="a" style="left:33px;top:436px;width:229px;height:1px;background:repeating-linear-gradient(90deg,#808080 0 3px,transparent 3px 5px)"></div>
<div class="a" style="left:33px;top:457px;width:229px;height:1px;background:repeating-linear-gradient(90deg,#808080 0 3px,transparent 3px 5px)"></div>
<div class="a" style="left:38px;top:462px;width:11px;height:11px;border:1px solid #222;background:#fff;box-sizing:border-box"></div>
<div class="a" style="left:40px;top:467px;width:7px;height:1px;background:#111"></div>
<span class="t" style="left:52px;top:460.5px;line-height:15px;font-size:11px;color:#111;">Cotation</span>
<span class="t" style="left:72.300px;top:481.5px;width:94.500px;overflow:hidden;font-size:11px;line-height:15px;color:#111;letter-spacing:-0.120px">Taille de flèche</span>
<span class="t" style="left:170.3px;top:481.5px;line-height:15px;font-size:11px;color:#111;">6</span>
<div class="a" style="left:33px;top:478px;width:229px;height:1px;background:repeating-linear-gradient(90deg,#808080 0 3px,transparent 3px 5px)"></div>
<span class="t" style="left:72.300px;top:502.5px;width:94.500px;overflow:hidden;font-size:11px;line-height:15px;color:#111;letter-spacing:-0.094px">Style</span>
<span class="t" style="left:170.3px;top:502.5px;line-height:15px;font-size:11px;color:#111;letter-spacing:0.061px;">outer</span>
<div class="a" style="left:33px;top:499px;width:229px;height:1px;background:repeating-linear-gradient(90deg,#808080 0 3px,transparent 3px 5px)"></div>
<span class="t" style="left:72.300px;top:523.5px;width:94.500px;overflow:hidden;font-size:11px;line-height:15px;color:#111;letter-spacing:-0.190px">Flèche 1</span>
<svg class="a" style="left:174.5px;top:526px;" width="10" height="10" viewBox="0 0 10 10"><rect x=".5" y=".5" width="9" height="9" fill="#c9c9c9" stroke="#111"/><path d="M.5 9.500l9-9" stroke="#111" stroke-width="1.300"/><path d="M.5 9.500V.5h9z" fill="#dedede"/><path d="M.5 9.500l9-9" stroke="#111" stroke-width="1.300"/><rect x=".5" y=".5" width="9" height="9" fill="none" stroke="#111"/></svg>
<span class="t" style="left:191.5px;top:523.5px;line-height:15px;font-size:11px;color:#111;letter-spacing:-0.153px;">Archtick</span>
<div class="a" style="left:33px;top:520px;width:229px;height:1px;background:repeating-linear-gradient(90deg,#808080 0 3px,transparent 3px 5px)"></div>
<span class="t" style="left:72.300px;top:544.5px;width:94.500px;overflow:hidden;font-size:11px;line-height:15px;color:#111;letter-spacing:-0.190px">Flèche 2</span>
<svg class="a" style="left:174.5px;top:547px;" width="10" height="10" viewBox="0 0 10 10"><rect x=".5" y=".5" width="9" height="9" fill="#c9c9c9" stroke="#111"/><path d="M.5 9.500l9-9" stroke="#111" stroke-width="1.300"/><path d="M.5 9.500V.5h9z" fill="#dedede"/><path d="M.5 9.500l9-9" stroke="#111" stroke-width="1.300"/><rect x=".5" y=".5" width="9" height="9" fill="none" stroke="#111"/></svg>
<span class="t" style="left:191.5px;top:544.5px;line-height:15px;font-size:11px;color:#111;letter-spacing:-0.153px;">Archtick</span>
<div class="a" style="left:33px;top:541px;width:229px;height:1px;background:repeating-linear-gradient(90deg,#808080 0 3px,transparent 3px 5px)"></div>
<span class="t" style="left:72.300px;top:565.5px;width:94.500px;overflow:hidden;font-size:11px;line-height:15px;color:#111;letter-spacing:-0.141px">Repère flèche</span>
<svg class="a" style="left:174.5px;top:568px;" width="10" height="10" viewBox="0 0 10 10"><rect x=".5" y=".5" width="9" height="9" fill="#c9c9c9" stroke="#111"/><path d="M.5 9.500l9-9" stroke="#111" stroke-width="1.300"/><path d="M.5 9.500V.5h9z" fill="#dedede"/><path d="M.5 9.500l9-9" stroke="#111" stroke-width="1.300"/><rect x=".5" y=".5" width="9" height="9" fill="none" stroke="#111"/></svg>
<span class="t" style="left:191.5px;top:565.5px;line-height:15px;font-size:11px;color:#111;letter-spacing:-0.153px;">Archtick</span>
<div class="a" style="left:33px;top:562px;width:229px;height:1px;background:repeating-linear-gradient(90deg,#808080 0 3px,transparent 3px 5px)"></div>
<span class="t" style="left:72.300px;top:586.5px;width:94.500px;overflow:hidden;font-size:11px;line-height:15px;color:#111;letter-spacing:-0.005px">Couleur de texte</span>
<div class="a" style="left:174.5px;top:589px;width:10px;height:10px;background:#000;border:1px solid #3a2a20;box-sizing:border-box"></div>
<span class="t" style="left:187.7px;top:586.5px;line-height:15px;font-size:11px;color:#111;letter-spacing:-0.359px;">Par bloc</span>
<div class="a" style="left:33px;top:583px;width:229px;height:1px;background:repeating-linear-gradient(90deg,#808080 0 3px,transparent 3px 5px)"></div>
<span class="t" style="left:72.300px;top:607.5px;width:94.500px;overflow:hidden;font-size:11px;line-height:15px;color:#111;letter-spacing:0.081px">Hauteur de texte</span>
<span class="t" style="left:170.3px;top:607.5px;line-height:15px;font-size:11px;color:#111;">12</span>
<div class="a" style="left:33px;top:604px;width:229px;height:1px;background:repeating-linear-gradient(90deg,#808080 0 3px,transparent 3px 5px)"></div>
<span class="t" style="left:72.300px;top:628.5px;width:94.500px;overflow:hidden;font-size:11px;line-height:15px;color:#111;letter-spacing:-0.053px">Décalage texte</span>
<span class="t" style="left:170.3px;top:628.5px;line-height:15px;font-size:11px;color:#111;letter-spacing:0.066px;">0,09</span>
<div class="a" style="left:33px;top:625px;width:229px;height:1px;background:repeating-linear-gradient(90deg,#808080 0 3px,transparent 3px 5px)"></div>
<span class="t" style="left:72.300px;top:649.5px;width:94.500px;overflow:hidden;font-size:11px;line-height:15px;color:#111;letter-spacing:-.08px">Position verticale du texte</span>
<span class="t" style="left:170.3px;top:649.5px;line-height:15px;font-size:11px;color:#111;letter-spacing:0.018px;">centre</span>
<div class="a" style="left:33px;top:646px;width:229px;height:1px;background:repeating-linear-gradient(90deg,#808080 0 3px,transparent 3px 5px)"></div>
<span class="t" style="left:72.300px;top:670.5px;width:94.500px;overflow:hidden;font-size:11px;line-height:15px;color:#111;letter-spacing:-.08px">Alignement intérieur</span>
<div class="a" style="left:176.5px;top:673px;width:10px;height:10px;background:#fff;border:1px solid #333;box-sizing:border-box"></div>
<div class="a" style="left:33px;top:667px;width:229px;height:1px;background:repeating-linear-gradient(90deg,#808080 0 3px,transparent 3px 5px)"></div>
<span class="t" style="left:72.300px;top:691.5px;width:94.500px;overflow:hidden;font-size:11px;line-height:15px;color:#111;letter-spacing:-0.348px">Echelle de mesures</span>
<span class="t" style="left:170.3px;top:691.5px;line-height:15px;font-size:11px;color:#111;">1</span>
<div class="a" style="left:33px;top:688px;width:229px;height:1px;background:repeating-linear-gradient(90deg,#808080 0 3px,transparent 3px 5px)"></div>
<span class="t" style="left:72.300px;top:712.5px;width:94.500px;overflow:hidden;font-size:11px;line-height:15px;color:#111;letter-spacing:-0.394px">Précision</span>
<span class="t" style="left:170.3px;top:712.5px;line-height:15px;font-size:11px;color:#111;">0</span>
<div class="a" style="left:33px;top:709px;width:229px;height:1px;background:repeating-linear-gradient(90deg,#808080 0 3px,transparent 3px 5px)"></div>
<div class="a" style="left:168px;top:247px;width:1px;height:484px;background:#6e6e6e"></div>
<div class="a" style="left:284px;top:204px;width:1036px;height:507px;background:#fff"></div>
<svg class="a" style="left:1269px;top:211px;" width="12" height="5" viewBox="0 0 12 5"><rect x=".5" y=".5" width="10" height="3.500" rx="1" fill="#fff" stroke="#4a5568" stroke-width="1"/></svg>
<svg class="a" style="left:1285px;top:206px;" width="13" height="12" viewBox="0 0 13 12"><rect x="4.500" y=".5" width="7" height="6" rx="1" fill="#fff" stroke="#4a5568"/><rect x=".5" y="4" width="7.500" height="6.500" rx="1" fill="#fff" stroke="#4a5568"/><rect x="2.500" y="6.300" width="3.500" height="2.200" fill="#fff" stroke="#4a5568"/></svg>
<svg class="a" style="left:1300px;top:207px;" width="13" height="11" viewBox="0 0 13 11"><path d="M1 1h3l2.500 2.700L9 1h3L8 5.500 12 10H9L6.500 7.200 4 10H1l4-4.500z" fill="#fff" stroke="#3c4656" stroke-width="1"/></svg>
<div class="a" style="left:1320px;top:204px;width:16px;height:507px;background:linear-gradient(90deg,#e4e4e4,#f0f0f0 2px)"></div>
<svg class="a" style="left:1324px;top:211px;" width="8" height="5" viewBox="0 0 8 5"><path d="M0 4.500L4 .5l4 4z" fill="#444"/></svg>
<svg class="a" style="left:1324px;top:700px;" width="8" height="5" viewBox="0 0 8 5"><path d="M0 .5L4 4.500 8 .5z" fill="#444"/></svg>
<div class="a" style="left:1321px;top:384px;width:14px;height:15px;border:1px solid #9a9a9a;border-radius:2px;box-sizing:border-box;background:linear-gradient(90deg,#f6f6f6,#e4e4e4 50%,#d4d4d4 52%,#dcdcdc)"></div>
<div class="a" style="left:284px;top:711px;width:581px;height:21px;background:linear-gradient(90deg,#c9dcf3,#d2e2f5 50%,#dfeaf8)"></div>
<svg class="a" style="left:288px;top:711px;" width="58" height="20" viewBox="0 0 58 20"><path d="M1.300 0L8 18.500H49L55.600 0z" fill="#c6daf1" stroke="#92a8c6" stroke-width="1"/><path d="M1 0h55" stroke="#cbddf3" stroke-width="1.200"/></svg>
<span class="t" style="left:300.5px;top:712.0px;line-height:15px;font-size:11px;color:#111;letter-spacing:0.106px;">Model</span>
<span class="t" style="left:357.3px;top:712.0px;line-height:15px;font-size:11px;color:#111;letter-spacing:-0.012px;">Layout2</span>
<div class="a" style="left:839px;top:715px;width:17px;height:17px;border:1px solid #9fb4d2;border-radius:3px;background:linear-gradient(#e6eef9,#c9dbf2);box-sizing:border-box"></div>
<svg class="a" style="left:843px;top:720px;" width="9" height="7" viewBox="0 0 9 7"><path d="M1 2l1.300-1.200L4.500 3 6.700.8 8 2 4.500 6z" fill="#fff" stroke="#9a8a4a" stroke-width=".9"/></svg>
<div class="a" style="left:865px;top:711px;width:2px;height:20px;background:repeating-linear-gradient(#8ea3c0 0 1px,transparent 1px 3px)"></div>
<div class="a" style="left:868px;top:711px;width:452px;height:18px;background:#f0f0f0"></div>
<svg class="a" style="left:875px;top:716px;" width="5" height="8" viewBox="0 0 5 8"><path d="M4.500 0L.5 4l4 4z" fill="#444"/></svg>
<svg class="a" style="left:1308px;top:716px;" width="5" height="8" viewBox="0 0 5 8"><path d="M.5 0l4 4-4 4z" fill="#444"/></svg>
<div class="a" style="left:1015px;top:712px;width:15px;height:15px;border:1px solid #9a9a9a;border-radius:2px;box-sizing:border-box;background:linear-gradient(#f6f6f6,#e4e4e4 50%,#d4d4d4 52%,#dcdcdc)"></div>
<div class="a" style="left:868px;top:729px;width:468px;height:3px;background:#dbe6f5"></div>
<div class="a" style="left:10px;top:737px;width:1326px;height:15px;border:1px solid #8e8e8e;box-sizing:border-box;background:linear-gradient(#e2edfd,#c6dbf9 50%,#b6d1f8)"></div>
<span class="t" style="left:16px;top:737.0px;line-height:16px;font-size:12px;color:#2b5fb8;letter-spacing:0.017px;">Ligne de commande</span>
<svg class="a" style="left:1321px;top:740px;" width="8" height="11" viewBox="0 0 8 11"><path d="M2 .5h4v5.500h1.500v1H.5V6H2z" fill="#111"/><rect x="3" y="1.500" width="1.200" height="4.500" fill="#fff"/><path d="M4 7v3.500" stroke="#111" stroke-width="1.200"/></svg>
<div class="a" style="left:9px;top:752px;width:1327px;height:61px;background:#fff"></div>
<span class="t" style="left:12.5px;top:756.0px;line-height:16px;font-size:12px;color:#111;letter-spacing:-0.049px;">Options</span>
<span class="t" style="left:12.5px;top:771.0px;line-height:16px;font-size:12px;color:#111;letter-spacing:0.021px;">Ouvrir</span>
<div class="a" style="left:1318px;top:754px;width:17px;height:56px;background:#f0f0f0"></div>
<svg class="a" style="left:1323px;top:761px;" width="8" height="5" viewBox="0 0 8 5"><path d="M0 4.500L4 .5l4 4z" fill="#444"/></svg>
<svg class="a" style="left:1323px;top:800px;" width="8" height="5" viewBox="0 0 8 5"><path d="M0 .5L4 4.500 8 .5z" fill="#444"/></svg>
<div class="a" style="left:1319px;top:778px;width:15px;height:15px;border:1px solid #9a9a9a;border-radius:2px;box-sizing:border-box;background:linear-gradient(90deg,#f6f6f6,#e4e4e4 50%,#d4d4d4 52%,#dcdcdc)"></div>
<div class="a" style="left:9px;top:813px;width:82px;height:22px;background:#b5d3fb"></div>
<div class="a" style="left:91px;top:813px;width:1245px;height:22px;background:#fff;border-top:1px solid #b9c0c8;box-sizing:border-box"></div>
<span class="t" style="left:17px;top:816.0px;line-height:16px;font-size:12px;color:#111;letter-spacing:-0.018px;">Commande:</span>
<div class="a" style="left:9px;top:835px;width:1327px;height:20px;background:linear-gradient(#e6eef9,#d6e3f5 45%,#c9daf0 55%,#c6d8ef);border-top:1px solid #7a8ea8;box-sizing:border-box"></div>
<div class="a" style="left:653px;top:838px;width:1px;height:16px;background:#a9bbd4"></div>
<div class="a" style="left:654px;top:838px;width:1px;height:16px;background:#f6f9fd"></div>
<div class="a" style="left:1085px;top:838px;width:1px;height:16px;background:#a9bbd4"></div>
<div class="a" style="left:1086px;top:838px;width:1px;height:16px;background:#f6f9fd"></div>
<span class="t" style="left:16.5px;top:837.5px;line-height:15px;font-size:11px;color:#1c3484;letter-spacing:0.070px;">hostel block.dwg</span>
<span class="t" style="left:660.6px;top:837.5px;line-height:15px;font-size:11px;color:#1c3484;letter-spacing:0.008px;">18/30</span>
<span class="t" style="left:840.2px;top:837.5px;line-height:15px;font-size:11px;color:#1c3484;letter-spacing:0.028px;">(134686,8; 20844,16; 0)</span>
<span class="t" style="left:1211.4px;top:837.5px;line-height:15px;font-size:11px;color:#1c3484;letter-spacing:-0.142px;">2149,034 x 1682,57 x 0</span>
<div class="a" style="left:755px;top:837px;width:1px;height:17px;background:rgba(255,255,255,.55)"></div>
<div class="a" style="left:775px;top:837px;width:1px;height:17px;background:rgba(255,255,255,.55)"></div>
<div class="a" style="left:795px;top:837px;width:1px;height:17px;background:rgba(255,255,255,.55)"></div>
<div class="a" style="left:815px;top:837px;width:1px;height:17px;background:rgba(255,255,255,.55)"></div>
<div class="a" style="left:835px;top:837px;width:1px;height:17px;background:rgba(255,255,255,.55)"></div>
<svg class="a" style="left:756.5px;top:836px;" width="15" height="17" viewBox="0 0 15 17"><path d="M3 10.500V6a3.800 3.800 0 0 1 3.800-3.800" fill="none" stroke="#d84848" stroke-width="2.500"/><path d="M6.800 2.200a3.800 3.800 0 0 1 3.800 3.800v3.500" fill="none" stroke="#3f7be2" stroke-width="2.500"/><path d="M3 10V6a3.800 3.800 0 0 1 7.600 0v3" fill="none" stroke="#f3d6d6" stroke-width=".7"/><rect x="10.800" y="12.300" width="2.700" height="2.700" fill="#d40000"/><path d="M.8 10.300l3.400 4.200 6.400-8.300" fill="none" stroke="#0b2a0b" stroke-width="3.300"/><path d="M.8 10.300l3.400 4.200 6.400-8.300" fill="none" stroke="#14d214" stroke-width="1.700"/></svg>
<svg class="a" style="left:776.3px;top:837.3px;" width="15" height="15" viewBox="0 0 15 15"><rect x="0" y="0" width="1.700" height="1.700" fill="#111"/><rect x="0" y="5.9" width="1.700" height="1.700" fill="#111"/><rect x="0" y="12" width="1.700" height="1.700" fill="#111"/><rect x="6" y="0" width="1.700" height="1.700" fill="#111"/><rect x="6" y="5.9" width="1.700" height="1.700" fill="#111"/><rect x="6" y="12" width="1.700" height="1.700" fill="#111"/><rect x="12.2" y="0" width="1.700" height="1.700" fill="#111"/><rect x="12.2" y="5.9" width="1.700" height="1.700" fill="#111"/><rect x="12.2" y="12" width="1.700" height="1.700" fill="#111"/></svg>
<svg class="a" style="left:796px;top:837px;" width="16" height="14" viewBox="0 0 16 14"><path d="M7.700 1v10.500M1 11.400h13" stroke="#1f4fd0" stroke-width="1.300" fill="none"/></svg>
<svg class="a" style="left:815.5px;top:835.5px;" width="18" height="18" viewBox="0 0 18 18"><circle cx="6.800" cy="9.100" r="4.800" fill="none" stroke="#2a62e0" stroke-width="1.100"/><path d="M6.500 8.700l8.300-8.200M11.500 9h5" stroke="#111" stroke-width="1.100"/><path d="M1 10.500l4 5 7-9" fill="none" stroke="#0b2a0b" stroke-width="3.300"/><path d="M1 10.500l4 5 7-9" fill="none" stroke="#14d214" stroke-width="1.700"/></svg>
<svg class="a" style="left:1322px;top:841px;" width="12" height="12" viewBox="0 0 12 12"><rect x="9" y="1" width="2" height="2" fill="#fff"/><rect x="8" y="0" width="2" height="2" fill="#6a7d96"/><rect x="5" y="5" width="2" height="2" fill="#fff"/><rect x="4" y="4" width="2" height="2" fill="#6a7d96"/><rect x="9" y="5" width="2" height="2" fill="#fff"/><rect x="8" y="4" width="2" height="2" fill="#6a7d96"/><rect x="1" y="9" width="2" height="2" fill="#fff"/><rect x="0" y="8" width="2" height="2" fill="#6a7d96"/><rect x="5" y="9" width="2" height="2" fill="#fff"/><rect x="4" y="8" width="2" height="2" fill="#6a7d96"/><rect x="9" y="9" width="2" height="2" fill="#fff"/><rect x="8" y="8" width="2" height="2" fill="#6a7d96"/></svg>
<svg class="a" style="left:283px;top:206px" width="1037" height="505" viewBox="283 206 1037 505"><defs><pattern id="stip" width="32" height="34" patternUnits="userSpaceOnUse"><path d="M20 9h1M3 4h1M6 23h1M13 2h1M26 4h1M27 3h1M7 14h1M3 25h1M14 2h1M8 18h1M7 19h1M11 6h1M12 23h1M4 3h1M31 27h1M29 29h1M15 11h1M15 5h1M31 21h1M18 4h1M26 10h1M9 31h1M4 20h1M22 31h1M29 4h1M17 30h1M4 3h1M19 28h1M24 22h1M29 22h1M7 31h1M18 8h1M25 25h2M31 5h1M25 17h2M27 17h1M22 24h2M9 5h1M14 14h1M11 16h1M9 26h1M20 8h1M3 29h2M25 25h1M6 30h1M3 12h1M13 28h1M21 3h1M9 6h2M1 4h1M24 9h1M22 23h1M7 31h2M29 30h1M5 9h1M21 16h1M10 33h1M23 9h1M1 33h1M5 16h1M10 22h1M21 14h1M12 15h1M14 12h1M22 1h2M17 30h1M22 28h1M22 23h1M6 14h1M21 13h1M0 30h2M22 5h1M7 24h1M12 30h2M27 21h1M25 29h1M5 10h1M8 1h1M29 9h1M30 22h1M8 1h1M6 33h1M8 27h2M12 13h1M13 18h1M20 16h1M8 3h2M22 29h1M26 32h1M9 33h1M28 11h1M9 11h1M7 3h1M30 6h2M3 15h1M2 6h1M1 4h1M12 17h1M30 32h2M16 12h1M8 26h1M28 20h1M15 27h1M19 7h2M9 23h1M8 29h1M6 25h2M10 14h1M27 32h1M26 12h1M5 23h1M29 28h1M24 21h1M18 32h2M7 14h2M6 5h1M2 11h1M8 27h1M16 25h1M31 20h1M3 11h1M4 17h2M5 16h1M14 4h1M7 29h1" transform="translate(0 .5)" stroke="#0a8a06" stroke-width="1" fill="none" shape-rendering="crispEdges"/></pattern><pattern id="stip2" width="32" height="34" patternUnits="userSpaceOnUse"><path d="M26 17h1M8 2h1M15 7h1M10 16h1M3 11h1M12 19h1M19 33h1M13 18h1M28 32h1M11 17h1M22 1h1M16 2h1M0 1h1M12 32h1M30 15h1M28 6h1M27 31h1M25 32h1M19 13h1M14 21h1M12 8h1M25 22h1M3 8h1M0 4h1M16 27h1M10 3h1M5 24h1M18 15h1M18 2h1M29 11h1M10 17h1M28 0h1M16 23h1M21 20h1M15 2h1M19 13h1M22 11h1M0 21h1M24 5h1M30 17h1M12 15h1M0 5h1M16 5h1M9 25h1M2 25h1M1 19h1M19 14h1M5 33h1M9 24h1M20 31h1M9 18h1M9 2h1M27 32h1M8 33h1M1 14h1M5 1h1M2 8h1M23 6h1M24 28h1M3 1h1" stroke="#0a8a06" stroke-width="1" fill="none" shape-rendering="crispEdges"/></pattern><pattern id="yard" width="32" height="20" patternUnits="userSpaceOnUse"><rect width="32" height="20" fill="#048204"/><path d="M15 15h1M16 0h1M29 2h1M5 16h1M4 15h1M16 2h1M16 7h1M13 7h1M29 15h1M24 2h1M30 9h1M2 19h1M12 2h1M9 10h1M16 9h1M8 0h1M30 1h1M31 8h1M6 6h1M31 9h1M18 14h1M29 14h1M7 17h1M12 9h1M5 15h1M1 9h1M29 2h1M28 8h1M24 6h1M13 2h1M5 4h1M16 11h1M8 19h1M17 3h1M23 7h1M31 15h1M25 0h1M10 0h1" stroke="#fff" stroke-width="1" fill="none" shape-rendering="crispEdges"/></pattern><pattern id="tile" width="5.060" height="5.060" patternUnits="userSpaceOnUse"><path d="M.5 0V5.060M0 .5H5.060" stroke="#a4a4a4" stroke-width="1" fill="none"/></pattern><pattern id="hs" width="7.200" height="7.200" patternUnits="userSpaceOnUse"><path d="M0 0L7.200 7.200M7.200 0L0 7.200" stroke="#9c9c9c" stroke-width=".8" fill="none"/></pattern><pattern id="hl" width="14.400" height="14.400" patternUnits="userSpaceOnUse"><path d="M0 0L14.400 14.400M14.400 0L0 14.400" stroke="#a6a6a6" stroke-width=".9" fill="none"/></pattern><pattern id="chev" width="10.800" height="15.800" patternUnits="userSpaceOnUse"><path d="M.3 1.500l4 4.600 5.200-4.600M5.700 9.400l4 4.600 5.200-4.600M-5.100 9.400l4 4.600 5.200-4.600" stroke="#a2a2a2" stroke-width=".9" fill="none"/></pattern><pattern id="sofa" width="7" height="6" patternUnits="userSpaceOnUse"><rect width="7" height="6" fill="#fff"/><path d="M0 1h2l1 1h2M1 3.500l1.500-1 1.500 2 2-1.500M0 5h1.500l1-1M4 5.500h2.500M5 .5l1.500 1M3.500 0v1" stroke="#a9773c" stroke-width="1.150" fill="none"/></pattern><pattern id="rt" width="20" height="26" patternUnits="userSpaceOnUse"><rect width="20" height="26" fill="#cc3605"/><rect x="0.8" y="0.7" width="8.600" height="2.1" rx=".6" fill="#e85d40"/><rect x="0.8" y="3.7" width="8.600" height="3.1" rx=".6" fill="#e85d40"/><rect x="0.8" y="7.7" width="8.600" height="1.1" rx=".6" fill="#e85d40"/><rect x="0.8" y="9.7" width="8.600" height="3.1" rx=".6" fill="#e85d40"/><rect x="0.8" y="13.7" width="8.600" height="2.1" rx=".6" fill="#e85d40"/><rect x="0.8" y="16.7" width="8.600" height="1.1" rx=".6" fill="#e85d40"/><rect x="0.8" y="18.7" width="8.600" height="3.1" rx=".6" fill="#e85d40"/><rect x="0.8" y="22.7" width="8.600" height="3.1" rx=".6" fill="#e85d40"/><rect x="10.8" y="0.7" width="8.600" height="3.1" rx=".6" fill="#e85d40"/><rect x="10.8" y="4.7" width="8.600" height="1.1" rx=".6" fill="#e85d40"/><rect x="10.8" y="6.7" width="8.600" height="3.1" rx=".6" fill="#e85d40"/><rect x="10.8" y="10.7" width="8.600" height="2.1" rx=".6" fill="#e85d40"/><rect x="10.8" y="13.7" width="8.600" height="3.1" rx=".6" fill="#e85d40"/><rect x="10.8" y="17.7" width="8.600" height="2.1" rx=".6" fill="#e85d40"/><rect x="10.8" y="20.7" width="8.600" height="1.1" rx=".6" fill="#e85d40"/><rect x="10.8" y="22.7" width="8.600" height="3.1" rx=".6" fill="#e85d40"/></pattern><pattern id="rtv" width="28" height="19" patternUnits="userSpaceOnUse"><rect width="28" height="19" fill="#cc3605"/><rect x="0.7" y="0.8" width="2.1" height="8.100" rx=".6" fill="#e85d40"/><rect x="3.7" y="0.8" width="1.1" height="8.100" rx=".6" fill="#e85d40"/><rect x="5.7" y="0.8" width="3.1" height="8.100" rx=".6" fill="#e85d40"/><rect x="9.7" y="0.8" width="2.1" height="8.100" rx=".6" fill="#e85d40"/><rect x="12.7" y="0.8" width="3.1" height="8.100" rx=".6" fill="#e85d40"/><rect x="16.7" y="0.8" width="1.1" height="8.100" rx=".6" fill="#e85d40"/><rect x="18.7" y="0.8" width="2.1" height="8.100" rx=".6" fill="#e85d40"/><rect x="21.7" y="0.8" width="2.1" height="8.100" rx=".6" fill="#e85d40"/><rect x="24.7" y="0.8" width="3.1" height="8.100" rx=".6" fill="#e85d40"/><rect x="0.7" y="10.3" width="3.1" height="8.100" rx=".6" fill="#e85d40"/><rect x="4.7" y="10.3" width="2.1" height="8.100" rx=".6" fill="#e85d40"/><rect x="7.7" y="10.3" width="1.1" height="8.100" rx=".6" fill="#e85d40"/><rect x="9.7" y="10.3" width="3.1" height="8.100" rx=".6" fill="#e85d40"/><rect x="13.7" y="10.3" width="2.1" height="8.100" rx=".6" fill="#e85d40"/><rect x="16.7" y="10.3" width="2.1" height="8.100" rx=".6" fill="#e85d40"/><rect x="19.7" y="10.3" width="3.1" height="8.100" rx=".6" fill="#e85d40"/><rect x="23.7" y="10.3" width="1.1" height="8.100" rx=".6" fill="#e85d40"/><rect x="25.7" y="10.3" width="2.1" height="8.100" rx=".6" fill="#e85d40"/></pattern><linearGradient id="rsh" x1="0" x2="1"><stop offset="0" stop-color="#000" stop-opacity="0"/><stop offset=".2" stop-color="#4a0c00" stop-opacity=".06"/><stop offset=".5" stop-color="#4a0c00" stop-opacity=".38"/><stop offset=".8" stop-color="#4a0c00" stop-opacity=".06"/><stop offset="1" stop-color="#000" stop-opacity="0"/></linearGradient><linearGradient id="rsv" x1="0" x2="0" y1="0" y2="1"><stop offset="0" stop-color="#4a0c00" stop-opacity="0"/><stop offset="1" stop-color="#4a0c00" stop-opacity=".36"/></linearGradient><linearGradient id="rsv2" x1="0" x2="0" y1="1" y2="0"><stop offset="0" stop-color="#4a0c00" stop-opacity="0"/><stop offset="1" stop-color="#4a0c00" stop-opacity=".36"/></linearGradient><linearGradient id="lr" x1="0" x2="1"><stop offset="0" stop-color="#e2583a"/><stop offset=".18" stop-color="#c8442a"/><stop offset=".5" stop-color="#e05636"/><stop offset=".82" stop-color="#c8442a"/><stop offset="1" stop-color="#e2583a"/></linearGradient></defs><rect x="378.50" y="260.50" width="31.00" height="136.00" stroke="none" stroke-width="0" fill="#fff" /><rect x="378.50" y="260.50" width="31.00" height="136.00" stroke="none" stroke-width="0" fill="url(#stip)" /><clipPath id="c3"><rect x="378.5" y="260.5" width="31" height="136"/></clipPath><g clip-path="url(#c3)"><path d="M400.5 268.5 L400.4 271.2 L398.9 273.5 L396.3 274.1 L394 274.5 L391.1 275.4 L389.5 273 L388.1 271 L386.3 268.5 L387.7 266 L388.7 263.3 L391.4 262.3 L394 261.5 L396.3 262.8 L399 263.6 L400.9 265.7ZM400.5 282.5 L398.9 285.1 L398.5 288.3 L395.9 290.1 L393 290.6 L390.2 290.1 L386.9 290.5 L385 288 L383.1 285.5 L382.3 282.5 L383.1 279.4 L384.4 276.4 L387.3 275.2 L390 273.5 L393 274.1 L396.2 274.3 L398.7 276.5 L398.9 279.8ZM405.5 288.2 L404.1 290.4 L402.4 292 L400 291.6 L398.1 290.5 L397.5 288.2 L398.2 286.1 L399.9 284.5 L402.3 284.5 L404.6 285.7ZM402.3 303.6 L402 306.6 L399.9 308.7 L397.2 309.4 L394.9 311.1 L391.9 310.7 L389.5 309 L388.5 306.3 L387.7 303.6 L389.1 301.2 L389.6 298.4 L392.2 297.2 L394.9 297.2 L397.2 298.1 L400.1 298.4 L402 300.7ZM399.1 317.2 L398.2 320 L397 322.5 L395.2 325.1 L392.3 326.4 L389.3 324.9 L386.3 324.9 L384.7 322.2 L382.2 320.3 L382.4 317.2 L382 314.1 L383.4 311.2 L386.4 309.8 L389 307.9 L392.1 309.1 L394.6 310.5 L397.4 311.6 L398 314.6ZM405.1 323.1 L403.9 325.1 L402.2 326.2 L399.9 327.1 L398.3 325.2 L396.8 323.1 L397.7 320.6 L400.1 319.6 L402.4 319.5 L404.3 320.9ZM401.7 338 L401.3 340.7 L400.2 343.4 L397.4 344.3 L394.8 344.7 L392 344.6 L390.3 342.5 L388.8 340.5 L387.1 338 L388.5 335.4 L389.9 333.1 L392.5 332.5 L394.8 331.3 L397.4 331.6 L399 333.8 L401.3 335.3ZM400.6 351 L399.8 353.9 L398.6 356.7 L395.9 358.2 L393.3 359.8 L390.2 359.9 L387.9 357.7 L385.8 356 L383.4 354 L382.3 351 L384.1 348.2 L385.2 345.5 L387.4 343.4 L390.3 342.8 L393.2 342.7 L395.9 343.8 L398.2 345.6 L400 348ZM405.4 357.8 L403.9 359.7 L402.5 361.5 L400 361.7 L398.4 359.9 L397.8 357.8 L397.9 355.3 L400.2 354.5 L402.4 354.5 L404.3 355.6ZM401.4 372.2 L400.9 374.7 L400.1 377.4 L397.5 378.4 L394.9 379.6 L392.5 377.9 L390.3 376.8 L388.4 374.9 L387.4 372.2 L388.7 369.6 L390.4 367.7 L392.6 366.5 L394.9 365.3 L397.3 366.4 L400.1 367 L401.7 369.4ZM400 386 L399.2 389 L397.9 391.8 L395 393.2 L392.2 393.8 L389.4 394.1 L386.3 393.9 L384.6 391.2 L383 388.8 L382.4 386 L382.9 383.1 L384.4 380.5 L386.2 377.9 L389.5 378.1 L392.2 378.4 L395.6 377.8 L398 380 L399.8 382.7ZM405.7 393.1 L404.2 395.1 L402.7 396.9 L400.1 397 L398.2 395.4 L397.6 393.1 L398.6 391 L400.3 389.6 L402.5 389.7 L404.1 391.1Z" stroke="#0a8a06" stroke-width="1.1" fill="none" /></g><rect x="576.50" y="260.50" width="31.00" height="136.00" stroke="none" stroke-width="0" fill="#fff" /><rect x="576.50" y="260.50" width="31.00" height="136.00" stroke="none" stroke-width="0" fill="url(#stip)" /><clipPath id="c5"><rect x="576.5" y="260.5" width="31" height="136"/></clipPath><g clip-path="url(#c5)"><path d="M599.1 268.7 L598.8 271.6 L596.9 273.9 L594.6 275.7 L591.7 274.7 L589.2 275 L586.4 274.1 L585.2 271.4 L584.2 268.7 L586.1 266.4 L587 264 L589.3 262.9 L591.7 261.9 L594.4 262.3 L595.9 264.6 L597.6 266.3ZM603.1 282.7 L601.6 285.4 L601.1 288.6 L598 289.6 L595.6 291.4 L592.7 290.5 L590.2 289.4 L587 288.6 L586.5 285.5 L586 282.7 L585.2 279.5 L587 276.7 L589.9 275.6 L592.4 273.4 L595.6 274.2 L598.5 275 L600.2 277.5 L602.9 279.5ZM589 289 L587.6 291.1 L585.8 292.4 L583.6 292.2 L582 291 L581.4 289 L581.8 286.9 L583.5 285.2 L585.7 285.9 L587.9 286.6ZM598.5 303 L597.4 305.6 L595.7 307.6 L593.8 309.3 L591.2 310.2 L588.9 308.6 L585.8 308.4 L585.7 305.3 L583.9 303 L584.3 300.2 L587 298.8 L588.4 296.2 L591.2 296.5 L593.8 296.6 L595.4 298.8 L596.7 300.7ZM601.9 317.4 L602.4 320.5 L601 323.5 L598.6 325.6 L595.3 325.6 L592.4 325.7 L589.5 324.9 L586.9 323.3 L586.4 320.1 L584.8 317.4 L585.3 314.3 L586.8 311.5 L590 310.7 L592.2 308.2 L595.2 309.7 L598 310.2 L600.6 311.8 L602.7 314.2ZM588.2 323.6 L587.2 325.7 L585.4 327 L583.3 326.9 L581.7 325.6 L581 323.6 L581.1 321.3 L583 319.4 L585.4 320.4 L587 321.7ZM599.1 337.9 L598.3 340.4 L597.4 342.9 L595.3 344.8 L592.5 344.7 L589.9 344.1 L588.2 342.2 L585.5 340.8 L586.5 337.9 L586.2 335.3 L587.2 332.7 L590.1 332.3 L592.5 330.7 L595.4 330.9 L597.4 333 L599.2 335.1ZM601.7 351.5 L602.4 354.6 L600 356.8 L598 358.8 L595.4 360.8 L592.1 360.6 L589 359.7 L587.2 356.9 L585.7 354.4 L584.7 351.5 L585.7 348.5 L587.4 346.2 L589.5 344.2 L592.3 343.6 L595.2 343.2 L598.5 343.3 L600.9 345.4 L602 348.4ZM587.8 357.7 L587.4 359.8 L585.8 361.7 L583.2 361.8 L581.6 359.9 L580.4 357.7 L581.2 355.3 L583.3 353.9 L585.7 353.9 L587.8 355.3ZM597.6 372.8 L597.5 375.4 L596.4 378 L594 379.4 L591.2 379.2 L588.3 379.8 L586.2 377.8 L584.8 375.5 L585.3 372.8 L584.9 370.2 L586.7 368.3 L588.5 366.2 L591.2 366.1 L594 366 L596.2 367.8 L598 370ZM603.2 386.4 L602.8 389.6 L600.6 391.8 L598.8 394.4 L595.8 395.6 L592.6 395.2 L589.5 394.6 L587 392.5 L586.1 389.4 L585.5 386.4 L586.7 383.7 L587.1 380.5 L589.5 378.3 L592.7 378 L595.7 377.6 L598.7 378.6 L601.1 380.6 L601.7 383.7ZM588.8 392.7 L587.8 394.9 L586 396.4 L583.5 396.6 L581.6 395 L580.7 392.7 L582.2 390.8 L583.7 389.5 L585.9 389.1 L588 390.3Z" stroke="#0a8a06" stroke-width="1.1" fill="none" /></g><rect x="409.50" y="260.50" width="45.00" height="49.00" stroke="none" stroke-width="0" fill="url(#tile)" /><rect x="530.50" y="260.50" width="46.00" height="49.00" stroke="none" stroke-width="0" fill="url(#tile)" /><path d="M409.5 260.5h45M530 260.5h46" stroke="#8a8a8a" stroke-width="1" fill="none" stroke-dasharray="5 2"/><path d="M409.5 260.5v49M576.5 260.5v49" stroke="#8a8a8a" stroke-width="1" fill="none" stroke-dasharray="5 2"/><path d="M468 274L526 274L526 323L572 323L572 396.5L505 396.5L505 564.5L479 564.5L479 396.5L413.5 396.5L413.5 378.5L480.5 378.5L480.5 309.5L455 309.5L455 297L468 297z" fill="url(#hs)"/><path d="M468 274.5h58M468 274.5v22.500h-13M526.5 323v7" stroke="#9c9c9c" stroke-width="0.8" fill="none" stroke-dasharray="3 2"/><path d="M409.5 260.5H378.5V396.5M576.5 260.5H607.5V396.5" stroke="#a8905a" stroke-width="1" fill="none" /><path d="M409.5 309.5H454.5V260.5H530.5V309.5H576" stroke="#e4683c" stroke-width="1.2" fill="none" /><path d="M459.5 309V265.5H525.5V309" stroke="#e4683c" stroke-width="1" fill="none" /><path d="M526.5 309V330" stroke="#e4683c" stroke-width="1" fill="none" /><rect x="477.50" y="266.50" width="13.50" height="6.50" stroke="#a9773c" stroke-width="1" fill="#a9773c" /><rect x="483.00" y="268.00" width="3.00" height="4.50" stroke="none" stroke-width="0" fill="#fff" /><rect x="487.00" y="268.00" width="3.00" height="4.50" stroke="none" stroke-width="0" fill="#fff" /><rect x="507.50" y="266.50" width="13.00" height="6.50" stroke="#a9773c" stroke-width="1" fill="#a9773c" /><rect x="512.50" y="268.00" width="3.00" height="4.50" stroke="none" stroke-width="0" fill="#fff" /><rect x="516.50" y="268.00" width="3.00" height="4.50" stroke="none" stroke-width="0" fill="#fff" /><rect x="518.50" y="283.50" width="7.00" height="18.00" stroke="#a9773c" stroke-width="1" fill="#fff" /><circle cx="513.5" cy="289.0" r="2.6" stroke="#a9773c" stroke-width=".9" fill="none"/><path d="M510.9 289.0a2.6 2.6 0 0 1 5.2 0" stroke="#a9773c" stroke-width="1.700" fill="none" transform="rotate(0 513.5 289.0)"/><circle cx="513.5" cy="297.0" r="2.6" stroke="#a9773c" stroke-width=".9" fill="none"/><path d="M510.9 297.0a2.6 2.6 0 0 1 5.2 0" stroke="#a9773c" stroke-width="1.700" fill="none" transform="rotate(0 513.5 297.0)"/><rect x="459.50" y="288.50" width="9.00" height="7.50" stroke="#d9a514" stroke-width="1.4" fill="#fff" stroke-dasharray="4 1.500"/><path d="M445.5 309V292.5h9M450 309V292.5" stroke="#a58a1c" stroke-width="1.3" fill="none" /><text x="417.0" y="294.5" font-family="Liberation Sans" font-size="4.4" textLength="26.0" lengthAdjust="spacing" fill="#9aa0b0" opacity="0.85">UTILITY AREA</text><text x="486.5" y="286.5" font-family="Liberation Sans" font-size="4.4" textLength="17.0" lengthAdjust="spacing" fill="#7d8494" opacity="0.85">KITCHEN</text><text x="483.5" y="291.5" font-family="Liberation Sans" font-size="4.4" textLength="21.0" lengthAdjust="spacing" fill="#7d8494" opacity="0.85">14'0" X 9'0"</text><path d="M409.5 309.5V396.5M576.5 309.5V396" stroke="#e4683c" stroke-width="1.2" fill="none" /><path d="M413.5 312.5V396M572.5 312.5V396" stroke="#e4683c" stroke-width="1" fill="none" /><path d="M409.5 312.5H480M530.5 312.5H576" stroke="#e4683c" stroke-width="1" fill="none" /><rect x="413.50" y="312.50" width="67.00" height="66.00" stroke="none" stroke-width="0" fill="#fff" /><path d="M413.5 378.5H480.5V312.5" stroke="#e4683c" stroke-width="1.1" fill="none" /><path d="M478.5 314V377" stroke="#e4683c" stroke-width="0.9" fill="none" stroke-dasharray="2 1.500"/><rect x="413.50" y="313.50" width="20.00" height="20.50" stroke="#e4683c" stroke-width="1.1" fill="none" /><rect x="413.50" y="355.00" width="20.00" height="21.50" stroke="#e4683c" stroke-width="1.1" fill="none" /><rect x="415.50" y="315.50" width="8.00" height="3.00" stroke="#bf6f6f" stroke-width="1" fill="#bf6f6f" /><ellipse cx="419.5" cy="323" rx="3.500" ry="4.500" stroke="#bf6f6f" fill="none"/><path d="M421.5 335a10 10 0 0 1 10-10" stroke="#998b7b" stroke-width="1" fill="none" /><path d="M431.5 324v11" stroke="#998b7b" stroke-width="1.3" fill="none" /><path d="M419.0 321h7.0" stroke="#9aa0aa" stroke-width="1.600" stroke-dasharray="1.400 .8" opacity=".8"/><path d="M417.5 325h10.0" stroke="#9aa0aa" stroke-width="1.600" stroke-dasharray="1.400 .8" opacity=".8"/><path d="M414.5 376l9-9" stroke="#bf6f6f" stroke-width="1.2" fill="none" /><rect x="414.50" y="373.50" width="6.00" height="2.50" stroke="#bf6f6f" stroke-width="1" fill="#bf6f6f" /><path d="M421.5 356.5a10 10 0 0 0 10 10" stroke="#998b7b" stroke-width="1" fill="none" /><path d="M431.5 356.5v11" stroke="#998b7b" stroke-width="1.3" fill="none" /><path d="M420.0 361h7.0" stroke="#9aa0aa" stroke-width="1.600" stroke-dasharray="1.400 .8" opacity=".8"/><path d="M418.5 365h10.0" stroke="#9aa0aa" stroke-width="1.600" stroke-dasharray="1.400 .8" opacity=".8"/><rect x="435.50" y="313.50" width="20.00" height="20.50" stroke="#e4683c" stroke-width="1.1" fill="none" /><rect x="435.50" y="355.00" width="20.00" height="21.50" stroke="#e4683c" stroke-width="1.1" fill="none" /><rect x="437.50" y="315.50" width="8.00" height="3.00" stroke="#bf6f6f" stroke-width="1" fill="#bf6f6f" /><ellipse cx="441.5" cy="323" rx="3.500" ry="4.500" stroke="#bf6f6f" fill="none"/><path d="M443.5 335a10 10 0 0 1 10-10" stroke="#998b7b" stroke-width="1" fill="none" /><path d="M453.5 324v11" stroke="#998b7b" stroke-width="1.3" fill="none" /><path d="M441.0 321h7.0" stroke="#9aa0aa" stroke-width="1.600" stroke-dasharray="1.400 .8" opacity=".8"/><path d="M439.5 325h10.0" stroke="#9aa0aa" stroke-width="1.600" stroke-dasharray="1.400 .8" opacity=".8"/><path d="M436.5 376l9-9" stroke="#bf6f6f" stroke-width="1.2" fill="none" /><rect x="436.50" y="373.50" width="6.00" height="2.50" stroke="#bf6f6f" stroke-width="1" fill="#bf6f6f" /><path d="M443.5 356.5a10 10 0 0 0 10 10" stroke="#998b7b" stroke-width="1" fill="none" /><path d="M453.5 356.5v11" stroke="#998b7b" stroke-width="1.3" fill="none" /><path d="M442.0 361h7.0" stroke="#9aa0aa" stroke-width="1.600" stroke-dasharray="1.400 .8" opacity=".8"/><path d="M440.5 365h10.0" stroke="#9aa0aa" stroke-width="1.600" stroke-dasharray="1.400 .8" opacity=".8"/><path d="M457.5 313V334M457.5 355V378" stroke="#e4683c" stroke-width="1.1" fill="none" /><rect x="468.50" y="313.50" width="10.00" height="41.00" stroke="#8a8a8a" stroke-width="1" fill="#fff" /><ellipse cx="473.3" cy="321.0" rx="2.800" ry="4.300" stroke="#bf6f6f" stroke-width="1.200" fill="none"/><ellipse cx="473.3" cy="333.5" rx="2.800" ry="4.300" stroke="#bf6f6f" stroke-width="1.200" fill="none"/><ellipse cx="473.3" cy="346.0" rx="2.800" ry="4.300" stroke="#bf6f6f" stroke-width="1.200" fill="none"/><path d="M477.5 314v40" stroke="#1010f0" stroke-width="1.8" fill="none" /><path d="M462.5 378a13 13 0 0 1 13-13v13" stroke="#998b7b" stroke-width="1" fill="none" /><text x="425.0" y="388.0" font-family="Liberation Sans" font-size="4.4" textLength="18.0" lengthAdjust="spacing" fill="#7d8494" opacity="0.85">A.C. AREA</text><text x="423.0" y="393.0" font-family="Liberation Sans" font-size="4.4" textLength="22.0" lengthAdjust="spacing" fill="#7d8494" opacity="0.85">18'0" X 4'0"</text><path d="M409.5 337v15M411.5 337v15M409.5 378v18M411.5 378v18" stroke="#2aa7e2" stroke-width="1.2" fill="none" /><rect x="480.50" y="313.50" width="30.00" height="7.00" stroke="#999" stroke-width="1" fill="#fff" /><path d="M483 312.5h26" stroke="#2aa7e2" stroke-width="2" fill="none" /><rect x="528.50" y="312.50" width="43.50" height="10.50" stroke="#e4683c" stroke-width="1" fill="#fff" /><ellipse cx="536.5" cy="318" rx="5" ry="3.300" stroke="#bf6f6f" stroke-width="1.300" fill="none"/><ellipse cx="550.0" cy="318" rx="5" ry="3.300" stroke="#bf6f6f" stroke-width="1.300" fill="none"/><ellipse cx="563.5" cy="318" rx="5" ry="3.300" stroke="#bf6f6f" stroke-width="1.300" fill="none"/><text x="526.5" y="329.5" font-family="Liberation Sans" font-size="4.4" textLength="13.0" lengthAdjust="spacing" fill="#7d8494" opacity="0.85">DINING</text><text x="521.5" y="334.5" font-family="Liberation Sans" font-size="4.4" textLength="23.0" lengthAdjust="spacing" fill="#7d8494" opacity="0.85">16'0" X 16'0"</text><rect x="507.00" y="344.50" width="19.00" height="42.00" stroke="#a9773c" stroke-width="1.1" fill="#fff" /><circle cx="502.0" cy="352.5" r="2.7" stroke="#a9773c" stroke-width=".9" fill="none"/><path d="M499.3 352.5a2.7 2.7 0 0 1 5.4 0" stroke="#a9773c" stroke-width="1.700" fill="none" transform="rotate(-90 502.0 352.5)"/><circle cx="531.0" cy="352.5" r="2.7" stroke="#a9773c" stroke-width=".9" fill="none"/><path d="M528.3 352.5a2.7 2.7 0 0 1 5.4 0" stroke="#a9773c" stroke-width="1.700" fill="none" transform="rotate(90 531.0 352.5)"/><circle cx="502.0" cy="361.4" r="2.7" stroke="#a9773c" stroke-width=".9" fill="none"/><path d="M499.3 361.4a2.7 2.7 0 0 1 5.4 0" stroke="#a9773c" stroke-width="1.700" fill="none" transform="rotate(-90 502.0 361.4)"/><circle cx="531.0" cy="361.4" r="2.7" stroke="#a9773c" stroke-width=".9" fill="none"/><path d="M528.3 361.4a2.7 2.7 0 0 1 5.4 0" stroke="#a9773c" stroke-width="1.700" fill="none" transform="rotate(90 531.0 361.4)"/><circle cx="502.0" cy="370.3" r="2.7" stroke="#a9773c" stroke-width=".9" fill="none"/><path d="M499.3 370.3a2.7 2.7 0 0 1 5.4 0" stroke="#a9773c" stroke-width="1.700" fill="none" transform="rotate(-90 502.0 370.3)"/><circle cx="531.0" cy="370.3" r="2.7" stroke="#a9773c" stroke-width=".9" fill="none"/><path d="M528.3 370.3a2.7 2.7 0 0 1 5.4 0" stroke="#a9773c" stroke-width="1.700" fill="none" transform="rotate(90 531.0 370.3)"/><circle cx="502.0" cy="379.2" r="2.7" stroke="#a9773c" stroke-width=".9" fill="none"/><path d="M499.3 379.2a2.7 2.7 0 0 1 5.4 0" stroke="#a9773c" stroke-width="1.700" fill="none" transform="rotate(-90 502.0 379.2)"/><circle cx="531.0" cy="379.2" r="2.7" stroke="#a9773c" stroke-width=".9" fill="none"/><path d="M528.3 379.2a2.7 2.7 0 0 1 5.4 0" stroke="#a9773c" stroke-width="1.700" fill="none" transform="rotate(90 531.0 379.2)"/><circle cx="511.0" cy="339.5" r="2.7" stroke="#a9773c" stroke-width=".9" fill="none"/><path d="M508.3 339.5a2.7 2.7 0 0 1 5.4 0" stroke="#a9773c" stroke-width="1.700" fill="none" transform="rotate(0 511.0 339.5)"/><circle cx="521.0" cy="339.5" r="2.7" stroke="#a9773c" stroke-width=".9" fill="none"/><path d="M518.3 339.5a2.7 2.7 0 0 1 5.4 0" stroke="#a9773c" stroke-width="1.700" fill="none" transform="rotate(0 521.0 339.5)"/><circle cx="511.0" cy="392.0" r="2.7" stroke="#a9773c" stroke-width=".9" fill="none"/><path d="M508.3 392.0a2.7 2.7 0 0 1 5.4 0" stroke="#a9773c" stroke-width="1.700" fill="none" transform="rotate(180 511.0 392.0)"/><circle cx="521.0" cy="392.0" r="2.7" stroke="#a9773c" stroke-width=".9" fill="none"/><path d="M518.3 392.0a2.7 2.7 0 0 1 5.4 0" stroke="#a9773c" stroke-width="1.700" fill="none" transform="rotate(180 521.0 392.0)"/><rect x="542.50" y="339.50" width="28.00" height="14.00" stroke="#a9773c" stroke-width="1" fill="#fff" /><rect x="542.50" y="375.50" width="28.00" height="14.00" stroke="#a9773c" stroke-width="1" fill="#fff" /><circle cx="547.5" cy="335.0" r="2.6" stroke="#a9773c" stroke-width=".9" fill="none"/><path d="M544.9 335.0a2.6 2.6 0 0 1 5.2 0" stroke="#a9773c" stroke-width="1.700" fill="none" transform="rotate(0 547.5 335.0)"/><circle cx="547.5" cy="359.5" r="2.6" stroke="#a9773c" stroke-width=".9" fill="none"/><path d="M544.9 359.5a2.6 2.6 0 0 1 5.2 0" stroke="#a9773c" stroke-width="1.700" fill="none" transform="rotate(180 547.5 359.5)"/><circle cx="547.5" cy="370.0" r="2.6" stroke="#a9773c" stroke-width=".9" fill="none"/><path d="M544.9 370.0a2.6 2.6 0 0 1 5.2 0" stroke="#a9773c" stroke-width="1.700" fill="none" transform="rotate(0 547.5 370.0)"/><circle cx="547.5" cy="394.0" r="2.6" stroke="#a9773c" stroke-width=".9" fill="none"/><path d="M544.9 394.0a2.6 2.6 0 0 1 5.2 0" stroke="#a9773c" stroke-width="1.700" fill="none" transform="rotate(180 547.5 394.0)"/><circle cx="557.5" cy="335.0" r="2.6" stroke="#a9773c" stroke-width=".9" fill="none"/><path d="M554.9 335.0a2.6 2.6 0 0 1 5.2 0" stroke="#a9773c" stroke-width="1.700" fill="none" transform="rotate(0 557.5 335.0)"/><circle cx="557.5" cy="359.5" r="2.6" stroke="#a9773c" stroke-width=".9" fill="none"/><path d="M554.9 359.5a2.6 2.6 0 0 1 5.2 0" stroke="#a9773c" stroke-width="1.700" fill="none" transform="rotate(180 557.5 359.5)"/><circle cx="557.5" cy="370.0" r="2.6" stroke="#a9773c" stroke-width=".9" fill="none"/><path d="M554.9 370.0a2.6 2.6 0 0 1 5.2 0" stroke="#a9773c" stroke-width="1.700" fill="none" transform="rotate(0 557.5 370.0)"/><circle cx="557.5" cy="394.0" r="2.6" stroke="#a9773c" stroke-width=".9" fill="none"/><path d="M554.9 394.0a2.6 2.6 0 0 1 5.2 0" stroke="#a9773c" stroke-width="1.700" fill="none" transform="rotate(180 557.5 394.0)"/><circle cx="567.5" cy="335.0" r="2.6" stroke="#a9773c" stroke-width=".9" fill="none"/><path d="M564.9 335.0a2.6 2.6 0 0 1 5.2 0" stroke="#a9773c" stroke-width="1.700" fill="none" transform="rotate(0 567.5 335.0)"/><circle cx="567.5" cy="359.5" r="2.6" stroke="#a9773c" stroke-width=".9" fill="none"/><path d="M564.9 359.5a2.6 2.6 0 0 1 5.2 0" stroke="#a9773c" stroke-width="1.700" fill="none" transform="rotate(180 567.5 359.5)"/><circle cx="567.5" cy="370.0" r="2.6" stroke="#a9773c" stroke-width=".9" fill="none"/><path d="M564.9 370.0a2.6 2.6 0 0 1 5.2 0" stroke="#a9773c" stroke-width="1.700" fill="none" transform="rotate(0 567.5 370.0)"/><circle cx="567.5" cy="394.0" r="2.6" stroke="#a9773c" stroke-width=".9" fill="none"/><path d="M564.9 394.0a2.6 2.6 0 0 1 5.2 0" stroke="#a9773c" stroke-width="1.700" fill="none" transform="rotate(180 567.5 394.0)"/><path d="M378.5 396.5V628.5M607.5 396.5V628.5" stroke="#e4683c" stroke-width="1.2" fill="none" /><path d="M378.5 396.5H479M505 396.5H607.5" stroke="#e4683c" stroke-width="1.2" fill="none" /><path d="M382.5 400V564M603.5 400V564" stroke="#e4683c" stroke-width="0.9" fill="none" /><path d="M478.5 396.5V564M505.5 396.5V564" stroke="#e4683c" stroke-width="1.1" fill="none" /><path d="M480.5 400V564M503.5 400V564" stroke="#e4683c" stroke-width="0.8" fill="none" stroke-dasharray="2 1.500"/><rect x="382.50" y="400.50" width="96.00" height="10.00" stroke="#a9773c" stroke-width="1" fill="none" /><rect x="382.50" y="400.50" width="16.95" height="30.00" stroke="#a9773c" stroke-width="1" fill="none" /><path d="M382.5 416.0L399.4 411.0" stroke="#a9773c" stroke-width="0.8" fill="none" /><rect x="414.50" y="400.50" width="17.25" height="30.00" stroke="#a9773c" stroke-width="1" fill="none" /><path d="M414.5 416.0L431.7 411.0" stroke="#a9773c" stroke-width="0.8" fill="none" /><rect x="446.70" y="400.50" width="16.35" height="30.00" stroke="#a9773c" stroke-width="1" fill="none" /><path d="M446.7 416.0L463.0 411.0" stroke="#a9773c" stroke-width="0.8" fill="none" /><g transform="translate(406.6 416.2)"><path d="M-4.7 -4.5v4.500q.2 4.300 4.700 4.300q4.500 0 4.700-4.300v-4.500" stroke="#a9773c" stroke-width="1.100" fill="none"/><path d="M-3.600 1.500h7.200l-.8 2.600h-5.600z" fill="#a9773c"/><path d="M-3.700 -3v3.500M3.700 -3v3.500" stroke="#a9773c" stroke-width="1.100"/></g><g transform="translate(438.6 416.2)"><path d="M-4.7 -4.5v4.500q.2 4.300 4.700 4.300q4.500 0 4.700-4.300v-4.500" stroke="#a9773c" stroke-width="1.100" fill="none"/><path d="M-3.600 1.500h7.200l-.8 2.600h-5.600z" fill="#a9773c"/><path d="M-3.700 -3v3.500M3.700 -3v3.500" stroke="#a9773c" stroke-width="1.100"/></g><g transform="translate(470.4 416.2)"><path d="M-4.7 -4.5v4.500q.2 4.300 4.700 4.300q4.500 0 4.700-4.300v-4.500" stroke="#a9773c" stroke-width="1.100" fill="none"/><path d="M-3.600 1.500h7.200l-.8 2.600h-5.600z" fill="#a9773c"/><path d="M-3.700 -3v3.500M3.700 -3v3.500" stroke="#a9773c" stroke-width="1.100"/></g><rect x="382.50" y="468.50" width="96.00" height="11.00" stroke="#a9773c" stroke-width="1" fill="none" /><rect x="382.50" y="449.50" width="16.95" height="30.00" stroke="#a9773c" stroke-width="1" fill="none" /><path d="M382.5 463.0L399.4 468.0" stroke="#a9773c" stroke-width="0.8" fill="none" /><rect x="414.50" y="449.50" width="17.25" height="30.00" stroke="#a9773c" stroke-width="1" fill="none" /><path d="M414.5 463.0L431.7 468.0" stroke="#a9773c" stroke-width="0.8" fill="none" /><rect x="446.70" y="449.50" width="16.35" height="30.00" stroke="#a9773c" stroke-width="1" fill="none" /><path d="M446.7 463.0L463.0 468.0" stroke="#a9773c" stroke-width="0.8" fill="none" /><g transform="translate(406.6 463.7) scale(1 -1)"><path d="M-4.7 -4.5v4.500q.2 4.300 4.700 4.300q4.500 0 4.700-4.300v-4.500" stroke="#a9773c" stroke-width="1.100" fill="none"/><path d="M-3.600 1.500h7.200l-.8 2.600h-5.600z" fill="#a9773c"/><path d="M-3.700 -3v3.500M3.700 -3v3.500" stroke="#a9773c" stroke-width="1.100"/></g><g transform="translate(438.6 463.7) scale(1 -1)"><path d="M-4.7 -4.5v4.500q.2 4.300 4.700 4.300q4.500 0 4.700-4.300v-4.500" stroke="#a9773c" stroke-width="1.100" fill="none"/><path d="M-3.600 1.500h7.200l-.8 2.600h-5.600z" fill="#a9773c"/><path d="M-3.700 -3v3.500M3.700 -3v3.500" stroke="#a9773c" stroke-width="1.100"/></g><g transform="translate(470.4 463.7) scale(1 -1)"><path d="M-4.7 -4.5v4.500q.2 4.300 4.700 4.300q4.500 0 4.700-4.300v-4.500" stroke="#a9773c" stroke-width="1.100" fill="none"/><path d="M-3.600 1.500h7.200l-.8 2.600h-5.600z" fill="#a9773c"/><path d="M-3.700 -3v3.500M3.700 -3v3.500" stroke="#a9773c" stroke-width="1.100"/></g><text x="425.5" y="437.0" font-family="Liberation Sans" font-size="4.4" textLength="16.0" lengthAdjust="spacing" fill="#5d6474" opacity="0.85">ROOM-II</text><text x="421.0" y="442.0" font-family="Liberation Sans" font-size="4.4" textLength="25.0" lengthAdjust="spacing" fill="#5d6474" opacity="0.85">16'0" X 16'0"</text><rect x="382.50" y="481.50" width="96.00" height="10.00" stroke="#a9773c" stroke-width="1" fill="none" /><rect x="382.50" y="481.50" width="16.95" height="30.00" stroke="#a9773c" stroke-width="1" fill="none" /><path d="M382.5 497.0L399.4 492.0" stroke="#a9773c" stroke-width="0.8" fill="none" /><rect x="414.50" y="481.50" width="17.25" height="30.00" stroke="#a9773c" stroke-width="1" fill="none" /><path d="M414.5 497.0L431.7 492.0" stroke="#a9773c" stroke-width="0.8" fill="none" /><rect x="446.70" y="481.50" width="16.35" height="30.00" stroke="#a9773c" stroke-width="1" fill="none" /><path d="M446.7 497.0L463.0 492.0" stroke="#a9773c" stroke-width="0.8" fill="none" /><g transform="translate(406.6 497.2)"><path d="M-4.7 -4.5v4.500q.2 4.300 4.700 4.300q4.500 0 4.700-4.300v-4.500" stroke="#a9773c" stroke-width="1.100" fill="none"/><path d="M-3.600 1.500h7.200l-.8 2.600h-5.600z" fill="#a9773c"/><path d="M-3.700 -3v3.500M3.700 -3v3.500" stroke="#a9773c" stroke-width="1.100"/></g><g transform="translate(438.6 497.2)"><path d="M-4.7 -4.5v4.500q.2 4.300 4.700 4.300q4.500 0 4.700-4.300v-4.500" stroke="#a9773c" stroke-width="1.100" fill="none"/><path d="M-3.600 1.500h7.200l-.8 2.600h-5.600z" fill="#a9773c"/><path d="M-3.700 -3v3.500M3.700 -3v3.500" stroke="#a9773c" stroke-width="1.100"/></g><g transform="translate(470.4 497.2)"><path d="M-4.7 -4.5v4.500q.2 4.300 4.700 4.300q4.500 0 4.700-4.300v-4.500" stroke="#a9773c" stroke-width="1.100" fill="none"/><path d="M-3.600 1.500h7.200l-.8 2.600h-5.600z" fill="#a9773c"/><path d="M-3.700 -3v3.500M3.700 -3v3.500" stroke="#a9773c" stroke-width="1.100"/></g><rect x="382.50" y="549.50" width="96.00" height="11.00" stroke="#a9773c" stroke-width="1" fill="none" /><rect x="382.50" y="530.50" width="16.95" height="30.00" stroke="#a9773c" stroke-width="1" fill="none" /><path d="M382.5 544.0L399.4 549.0" stroke="#a9773c" stroke-width="0.8" fill="none" /><rect x="414.50" y="530.50" width="17.25" height="30.00" stroke="#a9773c" stroke-width="1" fill="none" /><path d="M414.5 544.0L431.7 549.0" stroke="#a9773c" stroke-width="0.8" fill="none" /><rect x="446.70" y="530.50" width="16.35" height="30.00" stroke="#a9773c" stroke-width="1" fill="none" /><path d="M446.7 544.0L463.0 549.0" stroke="#a9773c" stroke-width="0.8" fill="none" /><g transform="translate(406.6 544.7) scale(1 -1)"><path d="M-4.7 -4.5v4.500q.2 4.300 4.700 4.300q4.500 0 4.700-4.300v-4.500" stroke="#a9773c" stroke-width="1.100" fill="none"/><path d="M-3.600 1.500h7.200l-.8 2.600h-5.600z" fill="#a9773c"/><path d="M-3.700 -3v3.500M3.700 -3v3.500" stroke="#a9773c" stroke-width="1.100"/></g><g transform="translate(438.6 544.7) scale(1 -1)"><path d="M-4.7 -4.5v4.500q.2 4.300 4.700 4.300q4.500 0 4.700-4.300v-4.500" stroke="#a9773c" stroke-width="1.100" fill="none"/><path d="M-3.600 1.500h7.200l-.8 2.600h-5.600z" fill="#a9773c"/><path d="M-3.700 -3v3.500M3.700 -3v3.500" stroke="#a9773c" stroke-width="1.100"/></g><g transform="translate(470.4 544.7) scale(1 -1)"><path d="M-4.7 -4.5v4.500q.2 4.300 4.700 4.300q4.500 0 4.700-4.300v-4.500" stroke="#a9773c" stroke-width="1.100" fill="none"/><path d="M-3.600 1.500h7.200l-.8 2.600h-5.600z" fill="#a9773c"/><path d="M-3.700 -3v3.500M3.700 -3v3.500" stroke="#a9773c" stroke-width="1.100"/></g><text x="426.0" y="518.0" font-family="Liberation Sans" font-size="4.4" textLength="15.0" lengthAdjust="spacing" fill="#5d6474" opacity="0.85">ROOM-I</text><text x="421.0" y="523.0" font-family="Liberation Sans" font-size="4.4" textLength="25.0" lengthAdjust="spacing" fill="#5d6474" opacity="0.85">16'0" X 16'0"</text><rect x="507.50" y="400.50" width="96.00" height="10.00" stroke="#a9773c" stroke-width="1" fill="none" /><rect x="586.55" y="400.50" width="16.95" height="30.00" stroke="#a9773c" stroke-width="1" fill="none" /><path d="M586.6 411.0L603.5 416.0" stroke="#a9773c" stroke-width="0.8" fill="none" /><rect x="554.25" y="400.50" width="17.25" height="30.00" stroke="#a9773c" stroke-width="1" fill="none" /><path d="M554.3 411.0L571.5 416.0" stroke="#a9773c" stroke-width="0.8" fill="none" /><rect x="522.95" y="400.50" width="16.35" height="30.00" stroke="#a9773c" stroke-width="1" fill="none" /><path d="M523.0 411.0L539.3 416.0" stroke="#a9773c" stroke-width="0.8" fill="none" /><g transform="translate(579.4 416.2)"><path d="M-4.7 -4.5v4.500q.2 4.300 4.700 4.300q4.500 0 4.700-4.300v-4.500" stroke="#a9773c" stroke-width="1.100" fill="none"/><path d="M-3.600 1.500h7.200l-.8 2.600h-5.600z" fill="#a9773c"/><path d="M-3.700 -3v3.500M3.700 -3v3.500" stroke="#a9773c" stroke-width="1.100"/></g><g transform="translate(547.4 416.2)"><path d="M-4.7 -4.5v4.500q.2 4.300 4.700 4.300q4.500 0 4.700-4.300v-4.500" stroke="#a9773c" stroke-width="1.100" fill="none"/><path d="M-3.600 1.500h7.200l-.8 2.600h-5.600z" fill="#a9773c"/><path d="M-3.700 -3v3.500M3.700 -3v3.500" stroke="#a9773c" stroke-width="1.100"/></g><g transform="translate(515.6 416.2)"><path d="M-4.7 -4.5v4.500q.2 4.300 4.700 4.300q4.500 0 4.700-4.300v-4.500" stroke="#a9773c" stroke-width="1.100" fill="none"/><path d="M-3.600 1.500h7.200l-.8 2.600h-5.600z" fill="#a9773c"/><path d="M-3.700 -3v3.500M3.700 -3v3.500" stroke="#a9773c" stroke-width="1.100"/></g><rect x="507.50" y="468.50" width="96.00" height="11.00" stroke="#a9773c" stroke-width="1" fill="none" /><rect x="586.55" y="449.50" width="16.95" height="30.00" stroke="#a9773c" stroke-width="1" fill="none" /><path d="M586.6 468.0L603.5 463.0" stroke="#a9773c" stroke-width="0.8" fill="none" /><rect x="554.25" y="449.50" width="17.25" height="30.00" stroke="#a9773c" stroke-width="1" fill="none" /><path d="M554.3 468.0L571.5 463.0" stroke="#a9773c" stroke-width="0.8" fill="none" /><rect x="522.95" y="449.50" width="16.35" height="30.00" stroke="#a9773c" stroke-width="1" fill="none" /><path d="M523.0 468.0L539.3 463.0" stroke="#a9773c" stroke-width="0.8" fill="none" /><g transform="translate(579.4 463.7) scale(1 -1)"><path d="M-4.7 -4.5v4.500q.2 4.300 4.700 4.300q4.500 0 4.700-4.300v-4.500" stroke="#a9773c" stroke-width="1.100" fill="none"/><path d="M-3.600 1.500h7.200l-.8 2.600h-5.600z" fill="#a9773c"/><path d="M-3.700 -3v3.500M3.700 -3v3.500" stroke="#a9773c" stroke-width="1.100"/></g><g transform="translate(547.4 463.7) scale(1 -1)"><path d="M-4.7 -4.5v4.500q.2 4.300 4.700 4.300q4.500 0 4.700-4.300v-4.500" stroke="#a9773c" stroke-width="1.100" fill="none"/><path d="M-3.600 1.500h7.200l-.8 2.600h-5.600z" fill="#a9773c"/><path d="M-3.700 -3v3.500M3.700 -3v3.500" stroke="#a9773c" stroke-width="1.100"/></g><g transform="translate(515.6 463.7) scale(1 -1)"><path d="M-4.7 -4.5v4.500q.2 4.300 4.700 4.300q4.500 0 4.700-4.300v-4.500" stroke="#a9773c" stroke-width="1.100" fill="none"/><path d="M-3.600 1.500h7.200l-.8 2.600h-5.600z" fill="#a9773c"/><path d="M-3.700 -3v3.500M3.700 -3v3.500" stroke="#a9773c" stroke-width="1.100"/></g><text x="552.5" y="437.0" font-family="Liberation Sans" font-size="4.4" textLength="16.0" lengthAdjust="spacing" fill="#5d6474" opacity="0.85">ROOM-II</text><text x="548.0" y="442.0" font-family="Liberation Sans" font-size="4.4" textLength="25.0" lengthAdjust="spacing" fill="#5d6474" opacity="0.85">16'0" X 16'0"</text><rect x="507.50" y="481.50" width="96.00" height="10.00" stroke="#a9773c" stroke-width="1" fill="none" /><rect x="586.55" y="481.50" width="16.95" height="30.00" stroke="#a9773c" stroke-width="1" fill="none" /><path d="M586.6 492.0L603.5 497.0" stroke="#a9773c" stroke-width="0.8" fill="none" /><rect x="554.25" y="481.50" width="17.25" height="30.00" stroke="#a9773c" stroke-width="1" fill="none" /><path d="M554.3 492.0L571.5 497.0" stroke="#a9773c" stroke-width="0.8" fill="none" /><rect x="522.95" y="481.50" width="16.35" height="30.00" stroke="#a9773c" stroke-width="1" fill="none" /><path d="M523.0 492.0L539.3 497.0" stroke="#a9773c" stroke-width="0.8" fill="none" /><g transform="translate(579.4 497.2)"><path d="M-4.7 -4.5v4.500q.2 4.300 4.700 4.300q4.500 0 4.700-4.300v-4.500" stroke="#a9773c" stroke-width="1.100" fill="none"/><path d="M-3.600 1.500h7.200l-.8 2.600h-5.600z" fill="#a9773c"/><path d="M-3.700 -3v3.500M3.700 -3v3.500" stroke="#a9773c" stroke-width="1.100"/></g><g transform="translate(547.4 497.2)"><path d="M-4.7 -4.5v4.500q.2 4.300 4.700 4.300q4.500 0 4.700-4.300v-4.500" stroke="#a9773c" stroke-width="1.100" fill="none"/><path d="M-3.600 1.500h7.200l-.8 2.600h-5.600z" fill="#a9773c"/><path d="M-3.700 -3v3.500M3.700 -3v3.500" stroke="#a9773c" stroke-width="1.100"/></g><g transform="translate(515.6 497.2)"><path d="M-4.7 -4.5v4.500q.2 4.300 4.700 4.300q4.500 0 4.700-4.300v-4.500" stroke="#a9773c" stroke-width="1.100" fill="none"/><path d="M-3.600 1.500h7.200l-.8 2.600h-5.600z" fill="#a9773c"/><path d="M-3.700 -3v3.500M3.700 -3v3.500" stroke="#a9773c" stroke-width="1.100"/></g><rect x="507.50" y="549.50" width="96.00" height="11.00" stroke="#a9773c" stroke-width="1" fill="none" /><rect x="586.55" y="530.50" width="16.95" height="30.00" stroke="#a9773c" stroke-width="1" fill="none" /><path d="M586.6 549.0L603.5 544.0" stroke="#a9773c" stroke-width="0.8" fill="none" /><rect x="554.25" y="530.50" width="17.25" height="30.00" stroke="#a9773c" stroke-width="1" fill="none" /><path d="M554.3 549.0L571.5 544.0" stroke="#a9773c" stroke-width="0.8" fill="none" /><rect x="522.95" y="530.50" width="16.35" height="30.00" stroke="#a9773c" stroke-width="1" fill="none" /><path d="M523.0 549.0L539.3 544.0" stroke="#a9773c" stroke-width="0.8" fill="none" /><g transform="translate(579.4 544.7) scale(1 -1)"><path d="M-4.7 -4.5v4.500q.2 4.300 4.700 4.300q4.500 0 4.700-4.300v-4.500" stroke="#a9773c" stroke-width="1.100" fill="none"/><path d="M-3.600 1.500h7.200l-.8 2.600h-5.600z" fill="#a9773c"/><path d="M-3.700 -3v3.500M3.700 -3v3.500" stroke="#a9773c" stroke-width="1.100"/></g><g transform="translate(547.4 544.7) scale(1 -1)"><path d="M-4.7 -4.5v4.500q.2 4.300 4.700 4.300q4.500 0 4.700-4.300v-4.500" stroke="#a9773c" stroke-width="1.100" fill="none"/><path d="M-3.600 1.500h7.200l-.8 2.600h-5.600z" fill="#a9773c"/><path d="M-3.700 -3v3.500M3.700 -3v3.500" stroke="#a9773c" stroke-width="1.100"/></g><g transform="translate(515.6 544.7) scale(1 -1)"><path d="M-4.7 -4.5v4.500q.2 4.300 4.700 4.300q4.500 0 4.700-4.300v-4.500" stroke="#a9773c" stroke-width="1.100" fill="none"/><path d="M-3.600 1.500h7.200l-.8 2.600h-5.600z" fill="#a9773c"/><path d="M-3.700 -3v3.500M3.700 -3v3.500" stroke="#a9773c" stroke-width="1.100"/></g><text x="553.0" y="518.0" font-family="Liberation Sans" font-size="4.4" textLength="15.0" lengthAdjust="spacing" fill="#5d6474" opacity="0.85">ROOM-I</text><text x="548.0" y="523.0" font-family="Liberation Sans" font-size="4.4" textLength="25.0" lengthAdjust="spacing" fill="#5d6474" opacity="0.85">16'0" X 16'0"</text><path d="M465 432a14.500 15 0 0 0 14.500 15v-15zM519 432a14.500 15 0 0 1 -14.500 15v-15z" fill="#fff" stroke="#9a8d78" stroke-width="1"/><path d="M465 514a14.500 15 0 0 0 14.500 15v-15zM519 514a14.500 15 0 0 1 -14.500 15v-15z" fill="#fff" stroke="#9a8d78" stroke-width="1"/><path d="M492.5 393v42M492.5 507v50" stroke="#505050" stroke-width="2.4" fill="none" stroke-dasharray="1.800 .7" opacity=".8"/><rect x="378.50" y="424.50" width="3.50" height="29.00" stroke="#2aa7e2" stroke-width="1" fill="#2aa7e2" /><rect x="604.00" y="424.50" width="3.50" height="29.00" stroke="#2aa7e2" stroke-width="1" fill="#2aa7e2" /><rect x="378.50" y="505.50" width="3.50" height="29.00" stroke="#2aa7e2" stroke-width="1" fill="#2aa7e2" /><rect x="604.00" y="505.50" width="3.50" height="29.00" stroke="#2aa7e2" stroke-width="1" fill="#2aa7e2" /><path d="M378.5 561.5H479M505 561.5H607.5" stroke="#e4683c" stroke-width="1" fill="none" /><path d="M378.5 564.5H431M540 564.5H607.5" stroke="#e4683c" stroke-width="1" fill="none" /><path d="M431.5 565H505v28h36v24h-36v9H431.5z" fill="url(#hs)"/><path d="M431.5 567H479M431.5 567V626" stroke="#9c9c9c" stroke-width="0.8" fill="none" stroke-dasharray="3 2"/><path d="M406.5 565v18M406.5 607v18.500M410.7 565v18M410.7 607v18.500M414.9 565v18M414.9 607v18.500M419.1 565v18M419.1 607v18.500M423.3 565v18M423.3 607v18.500M427.5 565v18M427.5 607v18.500M431.7 565v18M431.7 607v18.500" stroke="#a58a1c" stroke-width="1.2" fill="none" /><path d="M383 584.3h18M383 588.5h18M383 592.8h18M383 597.0h18M383 601.3h18M383 605.5h18" stroke="#a58a1c" stroke-width="1.2" fill="none" /><rect x="401.50" y="583.00" width="30.50" height="24.00" stroke="none" stroke-width="0" fill="#fff" /><path d="M431.8 582.5v25" stroke="#e4683c" stroke-width="1" fill="none" /><path d="M400.5 582.8h31.800M400.5 607h31.800" stroke="#2d6db5" stroke-width="2" fill="none" /><path d="M401.3 582v26" stroke="#2d6db5" stroke-width="1.6" fill="none" /><path d="M402.5 584.5l28.500 21.500M431 584.5l-28.500 21.500" stroke="#1f2fe0" stroke-width="1" fill="none" /><path d="M392.5 574.5h22M392.5 574.5v40.500h42M378.5 597l14-3.500" stroke="#f019e0" stroke-width="1.2" fill="none" /><path d="M414.5 574.5l-9-3v6zM392.5 594l-3-5 5 1z" stroke="#f019e0" stroke-width="1" fill="none" /><path d="M434.5 615h5.0" stroke="#c9a0c9" stroke-width="1.600" stroke-dasharray="1.400 .8" opacity=".8"/><path d="M378.5 567v18M380.5 567v18M378.5 608v18M380.5 608v18" stroke="#2aa7e2" stroke-width="1.2" fill="none" /><path d="M382.5 567V626" stroke="#e4683c" stroke-width="0.9" fill="none" /><rect x="451.50" y="595.50" width="49.00" height="29.00" stroke="#000" stroke-width="1.6" fill="#fff" /><rect x="454.2" y="599.2" width="10.5" height="11.5" rx="3" stroke="#a9773c" stroke-width="1.300" fill="#fff"/><path d="M460.0 599.8H457.2a2.500 2.500 0 0 0 -2.400 2.500v5.3a2.500 2.500 0 0 0 2.400 2.500H460.0z" fill="#a9773c"/><rect x="460.0" y="601.5" width="4.0" height="6.2" fill="#fff" stroke="#a9773c" stroke-width=".9"/><rect x="488.2" y="599.2" width="10.5" height="11.5" rx="3" stroke="#a9773c" stroke-width="1.300" fill="#fff"/><path d="M492.9 599.8H495.7a2.500 2.500 0 0 1 2.400 2.500v5.3a2.500 2.500 0 0 1 -2.400 2.500H492.9z" fill="#a9773c"/><rect x="488.9" y="601.5" width="4.0" height="6.2" fill="#fff" stroke="#a9773c" stroke-width=".9"/><rect x="470.50" y="600.30" width="14.50" height="6.50" stroke="#a9773c" stroke-width="1" fill="#fff" /><path d="M469.3 600.6h16.9M469.3 606.5h16.9" stroke="#a9773c" stroke-width="1.5" fill="none" /><rect x="459.0" y="611.2" width="32" height="12.5" rx="3.500" stroke="#a9773c" stroke-width="1.500" fill="#fff"/><rect x="461.2" y="613.4" width="27.6" height="8.1" rx="1.500" stroke="none" fill="url(#sofa)"/><path d="M469.7 612.7v9.5M480.3 612.7v9.5" stroke="#a9773c" stroke-width="0.9" fill="none" /><path d="M460.5 620.5h29" stroke="#a9773c" stroke-width="0.9" fill="none" /><rect x="505.50" y="565.50" width="35.00" height="27.00" stroke="#000" stroke-width="1.6" fill="#fff" /><rect x="507.3" y="566.2" width="31.6" height="13.8" rx="3.500" stroke="#a9773c" stroke-width="1.500" fill="#fff"/><rect x="509.5" y="568.4" width="27.2" height="9.4" rx="1.500" stroke="none" fill="url(#sofa)"/><path d="M517.8 567.7v10.8M528.4 567.7v10.8" stroke="#a9773c" stroke-width="0.9" fill="none" /><path d="M508.8 576.8h28.6" stroke="#a9773c" stroke-width="0.9" fill="none" /><rect x="514.20" y="583.20" width="13.80" height="6.30" stroke="#a9773c" stroke-width="1" fill="#fff" /><path d="M513.0 583.5h16.2M513.0 589.2h16.2" stroke="#a9773c" stroke-width="1.5" fill="none" /><text x="463.0" y="585.0" font-family="Liberation Sans" font-size="4.4" textLength="34.0" lengthAdjust="spacing" fill="#6a7284" opacity="0.95">VISITOR'S LOBBY</text><text x="468.0" y="590.5" font-family="Liberation Sans" font-size="4.4" textLength="24.0" lengthAdjust="spacing" fill="#6a7284" opacity="0.95">16'0" X 12'0"</text><path d="M543.5 566.5V616M541.5 566.5V600" stroke="#e4683c" stroke-width="1" fill="none" /><path d="M603.5 566.5V616" stroke="#e4683c" stroke-width="0.9" fill="none" /><rect x="572.50" y="566.50" width="30.50" height="17.00" stroke="#a9773c" stroke-width="1" fill="none" /><rect x="591.50" y="583.50" width="11.50" height="14.50" stroke="#a9773c" stroke-width="1" fill="none" /><path d="M586 567l4 16v-16" stroke="#a9773c" stroke-width="0.9" fill="none" /><circle cx="586.0" cy="589.0" r="3.6" stroke="#a9773c" stroke-width=".9" fill="none"/><path d="M582.4 589.0a3.6 3.6 0 0 1 7.2 0" stroke="#a9773c" stroke-width="1.700" fill="none" transform="rotate(-90 586.0 589.0)"/><rect x="568.00" y="597.00" width="11.00" height="4.50" stroke="#a9773c" stroke-width="1" fill="#fff" /><path d="M566.8 597.3h13.4M566.8 601.2h13.4" stroke="#a9773c" stroke-width="1.5" fill="none" /><rect x="562.0" y="604.5" width="10.5" height="10.5" rx="3" stroke="#a9773c" stroke-width="1.300" fill="#fff"/><path d="M567.8 605.1H565.0a2.500 2.500 0 0 0 -2.400 2.500v4.3a2.500 2.500 0 0 0 2.400 2.500H567.8z" fill="#a9773c"/><rect x="567.8" y="606.8" width="4.0" height="5.2" fill="#fff" stroke="#a9773c" stroke-width=".9"/><rect x="574.5" y="604.5" width="10.5" height="10.5" rx="3" stroke="#a9773c" stroke-width="1.300" fill="#fff"/><path d="M579.2 605.1H582.0a2.500 2.500 0 0 1 2.400 2.500v4.3a2.500 2.500 0 0 1 -2.400 2.500H579.2z" fill="#a9773c"/><rect x="575.2" y="606.8" width="4.0" height="5.2" fill="#fff" stroke="#a9773c" stroke-width=".9"/><text x="545.5" y="585.5" font-family="Liberation Sans" font-size="4.4" textLength="33.0" lengthAdjust="spacing" fill="#5d6474" opacity="0.85">WARDEN ROOM</text><text x="550.0" y="591.0" font-family="Liberation Sans" font-size="4.4" textLength="24.0" lengthAdjust="spacing" fill="#5d6474" opacity="0.85">10'0" X 10'0"</text><path d="M543.5 600a13 13 0 0 1 13 13h-13z" fill="#fff" stroke="#9a8d78"/><path d="M505.5 617.5h36.500M505.5 620.9h36.500M505.5 624.3h36.500M505.5 627.7h36.500" stroke="#a58a1c" stroke-width="1.1" fill="none" /><path d="M505.5 601V628" stroke="#e4683c" stroke-width="1" fill="none" /><rect x="543.50" y="617.50" width="60.00" height="10.00" stroke="#e4683c" stroke-width="1" fill="#2d8a22" /><path d="M547.0 619v7m-2.500-5.500l5 4m0-4l-5 4M556.5 619v7m-2.500-5.500l5 4m0-4l-5 4M566.0 619v7m-2.500-5.500l5 4m0-4l-5 4M575.5 619v7m-2.500-5.500l5 4m0-4l-5 4M585.0 619v7m-2.500-5.500l5 4m0-4l-5 4" stroke="#9a12c8" stroke-width="1.3" fill="none" /><path d="M590 620h1M594 624h1M598 621h1M600 625h1M587 624h1" stroke="#fff" stroke-width="1" fill="none" /><path d="M560 616h9M578 616h9" stroke="#2aa7e2" stroke-width="2" fill="none" /><path d="M378.5 626.5H436M378.5 628.5H607.5M436 626.5v2" stroke="#e4683c" stroke-width="1" fill="none" /><path d="M436 626.5H543" stroke="#e4683c" stroke-width="0.8" fill="none" stroke-dasharray="4 2"/><rect x="438.00" y="625.50" width="9.00" height="3.00" stroke="#2aa7e2" stroke-width="1" fill="#d9f0fb" /><path d="M438 627h9" stroke="#2aa7e2" stroke-width="1" fill="none" /><rect x="457.50" y="625.50" width="9.00" height="3.00" stroke="#2aa7e2" stroke-width="1" fill="#d9f0fb" /><path d="M457.5 627h9" stroke="#2aa7e2" stroke-width="1" fill="none" /><rect x="476.50" y="625.50" width="9.00" height="3.00" stroke="#2aa7e2" stroke-width="1" fill="#d9f0fb" /><path d="M476.5 627h9" stroke="#2aa7e2" stroke-width="1" fill="none" /><text x="513.0" y="628.0" font-family="Liberation Sans" font-size="4.4" textLength="22.0" lengthAdjust="spacing" fill="#8d94a4" opacity="0.85">ENTRANCE</text><clipPath id="cv378"><rect x="409.5" y="629.5" width="167.0" height="39.5"/></clipPath><path d="M381.1 630.3l5.600 4.600 5.200-4.600M396.9 630.3l5.600 4.600 5.200-4.600M412.8 630.3l5.600 4.600 5.200-4.600M428.6 630.3l5.600 4.600 5.200-4.600M444.5 630.3l5.600 4.600 5.200-4.600M460.3 630.3l5.600 4.600 5.200-4.600M476.2 630.3l5.600 4.600 5.200-4.600M492.0 630.3l5.600 4.600 5.200-4.600M507.9 630.3l5.600 4.600 5.200-4.600M523.7 630.3l5.600 4.600 5.200-4.600M539.6 630.3l5.600 4.600 5.200-4.600M555.4 630.3l5.600 4.600 5.200-4.600M571.3 630.3l5.600 4.600 5.200-4.600M373.2 638.2l5.600 4.600 5.200-4.600M389.0 638.2l5.600 4.600 5.200-4.600M404.9 638.2l5.600 4.600 5.200-4.600M420.7 638.2l5.600 4.600 5.200-4.600M436.6 638.2l5.600 4.600 5.200-4.600M452.4 638.2l5.600 4.600 5.200-4.600M468.3 638.2l5.600 4.600 5.200-4.600M484.1 638.2l5.600 4.600 5.200-4.600M500.0 638.2l5.600 4.600 5.200-4.600M515.8 638.2l5.600 4.600 5.200-4.600M531.7 638.2l5.600 4.600 5.200-4.600M547.5 638.2l5.600 4.600 5.200-4.600M563.4 638.2l5.600 4.600 5.200-4.600M381.1 646.2l5.600 4.600 5.200-4.600M396.9 646.2l5.600 4.600 5.200-4.600M412.8 646.2l5.600 4.600 5.200-4.600M428.6 646.2l5.600 4.600 5.200-4.600M444.5 646.2l5.600 4.600 5.200-4.600M460.3 646.2l5.600 4.600 5.200-4.600M476.2 646.2l5.600 4.600 5.200-4.600M492.0 646.2l5.600 4.600 5.200-4.600M507.9 646.2l5.600 4.600 5.200-4.600M523.7 646.2l5.600 4.600 5.200-4.600M539.6 646.2l5.600 4.600 5.200-4.600M555.4 646.2l5.600 4.600 5.200-4.600M571.3 646.2l5.600 4.600 5.200-4.600M373.2 654.1l5.600 4.600 5.200-4.600M389.0 654.1l5.600 4.600 5.200-4.600M404.9 654.1l5.600 4.600 5.200-4.600M420.7 654.1l5.600 4.600 5.200-4.600M436.6 654.1l5.600 4.600 5.200-4.600M452.4 654.1l5.600 4.600 5.200-4.600M468.3 654.1l5.600 4.600 5.200-4.600M484.1 654.1l5.600 4.600 5.200-4.600M500.0 654.1l5.600 4.600 5.200-4.600M515.8 654.1l5.600 4.600 5.200-4.600M531.7 654.1l5.600 4.600 5.200-4.600M547.5 654.1l5.600 4.600 5.200-4.600M563.4 654.1l5.600 4.600 5.200-4.600M381.1 662.1l5.600 4.600 5.200-4.600M396.9 662.1l5.600 4.600 5.200-4.600M412.8 662.1l5.600 4.600 5.200-4.600M428.6 662.1l5.600 4.600 5.200-4.600M444.5 662.1l5.600 4.600 5.200-4.600M460.3 662.1l5.600 4.600 5.200-4.600M476.2 662.1l5.600 4.600 5.200-4.600M492.0 662.1l5.600 4.600 5.200-4.600M507.9 662.1l5.600 4.600 5.200-4.600M523.7 662.1l5.600 4.600 5.200-4.600M539.6 662.1l5.600 4.600 5.200-4.600M555.4 662.1l5.600 4.600 5.200-4.600M571.3 662.1l5.600 4.600 5.200-4.600" stroke="#7d7d7d" stroke-width=".8" fill="none" clip-path="url(#cv378)"/><rect x="378.50" y="629.00" width="31.00" height="40.50" stroke="#a8905a" stroke-width="1" fill="url(#yard)" /><rect x="576.50" y="629.00" width="31.00" height="40.50" stroke="#a8905a" stroke-width="1" fill="url(#yard)" /><g transform="translate(394.3 643.7) rotate(-20)"><ellipse cx="-4.800" cy="1.800" rx="5.300" ry="10.300" fill="#19360f"/><ellipse cx="-.3" cy="-.5" rx="5" ry="10.300" fill="#2f7a22"/><ellipse cx="4.800" cy="-1.200" rx="5" ry="9.300" fill="#4a9a30"/><path d="M-1.500 -3h1M0 -1h1M1 -4.500h1M-.5 1.500h1M1.500 .5h1M.5 -2.500h1M2 3h1M-1 -.5h1" stroke="#a8785a" stroke-width="1"/></g><g transform="translate(592.5 643.7) rotate(-20)"><ellipse cx="-4.800" cy="1.800" rx="5.300" ry="10.300" fill="#19360f"/><ellipse cx="-.3" cy="-.5" rx="5" ry="10.300" fill="#2f7a22"/><ellipse cx="4.800" cy="-1.200" rx="5" ry="9.300" fill="#4a9a30"/><path d="M-1.500 -3h1M0 -1h1M1 -4.500h1M-.5 1.500h1M1.500 .5h1M.5 -2.500h1M2 3h1M-1 -.5h1" stroke="#a8785a" stroke-width="1"/></g><path d="M409.5 669.5h167" stroke="#8a8a8a" stroke-width="1" fill="none" stroke-dasharray="5 2"/><path d="M515 635.5q8-6 16 0" stroke="#e4683c" stroke-width="1" fill="none" /><path d="M517 635.5h13" stroke="#e4683c" stroke-width="0.8" fill="none" /><circle cx="413" cy="665" r="1.800" stroke="#e4683c" fill="#fff" stroke-width=".9"/><circle cx="492.5" cy="665" r="1.800" stroke="#e4683c" fill="#fff" stroke-width=".9"/><circle cx="571.5" cy="665" r="1.800" stroke="#e4683c" fill="#fff" stroke-width=".9"/><text x="418.5" y="683.8" font-family="Liberation Sans" font-size="11.800" letter-spacing="1.29" fill="#101020">GROUND FLOOR PLAN</text><path d="M418.0 686.5h152.0" stroke="#101020" stroke-width="1"/><rect x="693.50" y="260.50" width="32.00" height="136.00" stroke="none" stroke-width="0" fill="#fff" /><rect x="693.50" y="260.50" width="32.00" height="136.00" stroke="none" stroke-width="0" fill="url(#stip)" /><clipPath id="c11"><rect x="693.5" y="260.5" width="32" height="136"/></clipPath><g clip-path="url(#c11)"><path d="M717.5 268.6 L716.1 271.1 L714.7 273.4 L712.6 275 L709.9 274.8 L707.3 274.9 L704.9 273.5 L703.1 271.4 L703.8 268.6 L703.9 266.1 L705.6 264.3 L707.1 261.8 L709.9 261.4 L712.2 263 L715.3 263.1 L717 265.6ZM715.3 282.3 L714.6 284.9 L713.9 287.9 L711.2 289.1 L708.7 290.2 L705.9 290.3 L703.4 289 L700.8 287.8 L699.3 285.2 L698.1 282.3 L699.2 279.3 L700.5 276.6 L703 274.9 L705.8 273.5 L708.8 273.9 L711.4 275.2 L714.6 276.2 L716.2 279.1ZM720.9 288.7 L720.2 290.8 L718.4 292.1 L716.3 291.8 L714 291.1 L713.7 288.7 L713.9 286.2 L716.2 285.2 L718.7 284.6 L720.8 286.2ZM716.5 302.9 L715.2 305.5 L714.4 308.3 L711.5 309 L709 308.9 L706.3 309.4 L703.8 308.1 L703.1 305.4 L702.9 302.9 L703 300.4 L703.6 297.5 L706.2 296.2 L709 296.8 L711.4 297 L713.3 298.6 L714.6 300.6ZM716.3 316.4 L715.6 319.3 L713.8 321.6 L712.1 324.2 L709 324.2 L706.1 325.2 L703.6 323.3 L701.1 321.9 L700 319.2 L699.4 316.4 L698.7 313.2 L700.6 310.6 L703.5 309.3 L706 307.3 L709 308.5 L711.8 309.1 L714.7 310.5 L715.9 313.4ZM720.1 323.7 L719.4 325.8 L717.9 327.6 L715.5 327.1 L713.7 325.8 L713.3 323.7 L713.9 321.7 L715.4 320 L717.7 320.4 L719.8 321.4ZM717.4 337.9 L716 340.4 L714.6 342.8 L712.6 344.7 L709.7 344.1 L707.4 343.6 L704.4 343.2 L702.9 340.7 L703.4 337.9 L704 335.5 L704.6 332.7 L706.8 330.8 L709.7 331.6 L712.7 330.8 L715 332.6 L716.2 335.2ZM714.6 351 L715.7 354.3 L713.1 356.3 L711.3 358.8 L708.3 359.1 L705.2 360.1 L702.5 358.6 L700.5 356.3 L699.3 353.8 L697.8 351 L699.5 348.4 L700.6 345.8 L702.5 343.5 L705.2 341.9 L708.4 342.4 L710.9 343.9 L714 345 L714.4 348.3ZM720.3 357.7 L719.2 359.6 L717.6 360.9 L715.4 361.1 L713.4 360 L713.2 357.7 L713.6 355.5 L715.2 353.6 L717.9 353.5 L719.7 355.3ZM716.5 372.7 L715.9 375 L714.6 376.9 L713.3 379.6 L710.4 379.8 L707.5 379.7 L706.2 376.9 L703.9 375.4 L703.6 372.7 L703.7 369.9 L705.8 368.1 L707.4 365.6 L710.4 366.6 L713 366.3 L715.5 367.6 L717.3 369.8ZM716.6 386.5 L716.3 389.7 L713.9 391.9 L711.9 394.3 L709.1 395.7 L705.9 395.6 L703.2 393.8 L700.5 392.4 L698.8 389.7 L698.7 386.5 L699.2 383.5 L701 381.1 L703.1 378.9 L705.9 377.9 L708.8 378.8 L711.9 378.8 L714.7 380.4 L716.2 383.3ZM721.3 392.5 L720.4 394.8 L718.4 396 L715.9 396.5 L714.6 394.4 L713.1 392.5 L714.6 390.6 L716 388.8 L718.4 388.9 L720 390.4Z" stroke="#0a8a06" stroke-width="1.1" fill="none" /></g><rect x="891.50" y="260.50" width="31.00" height="136.00" stroke="none" stroke-width="0" fill="#fff" /><rect x="891.50" y="260.50" width="31.00" height="136.00" stroke="none" stroke-width="0" fill="url(#stip)" /><clipPath id="c12"><rect x="891.5" y="260.5" width="31" height="136"/></clipPath><g clip-path="url(#c12)"><path d="M913.5 268.7 L912.1 271 L910.6 272.8 L909 274.7 L906.4 275.1 L903.6 275.5 L901.4 273.7 L900 271.3 L899.5 268.7 L899.9 265.9 L902.1 264.3 L903.9 262.5 L906.4 262.5 L909.3 261.7 L910.7 264.4 L913.3 265.8ZM917 282.4 L916.6 285.3 L915.7 288.3 L912.5 289.1 L910 290.1 L907 291.6 L904.3 289.9 L902.6 287.4 L899.7 285.6 L899.2 282.4 L901.2 279.7 L902.2 277 L904.7 275.5 L907.2 274.3 L910.2 273.7 L912.6 275.5 L915.5 276.6 L916 279.7ZM902.9 288.8 L902.2 291 L900.4 292.5 L898 292.4 L896.2 291 L895.9 288.8 L895.9 286.4 L897.8 284.7 L900.5 284.7 L902.4 286.5ZM913.4 303.1 L912.8 305.8 L910.5 307.4 L908.6 308.9 L906.2 309.6 L903.6 309.4 L901 308.3 L899.9 305.7 L900.3 303.1 L899.4 300.2 L901.5 298.3 L903.6 296.7 L906.2 296.8 L908.8 296.9 L910.9 298.4 L912.9 300.3ZM916.7 316.9 L917.1 320 L914.7 321.9 L912.8 324 L910.1 325.1 L907.2 325.6 L904.8 323.7 L902.2 322.4 L901.1 319.7 L900.5 316.9 L900.7 314 L901.5 310.9 L904.4 309.5 L907.1 307.6 L910.1 309 L913.4 308.8 L915.1 311.5 L916.3 314.2ZM903 323.6 L902.6 325.7 L901 327.5 L898.6 327 L896.9 325.7 L896.5 323.6 L897.1 321.7 L898.5 319.9 L901.1 319.4 L903.3 321ZM913 337.4 L913.3 340.2 L911.7 342.7 L909.2 343.9 L906.5 343.7 L903.9 343.8 L901.7 342.2 L900 340.1 L900.1 337.4 L899.5 334.5 L901.2 332.1 L904.1 331.7 L906.5 331 L909.4 330.5 L911 332.9 L913.5 334.5ZM918.5 351.8 L917.1 354.6 L915.8 357.1 L913.6 358.9 L911.1 360.6 L908 360.6 L905.6 358.7 L902.4 357.8 L901.6 354.7 L901.4 351.8 L901.6 348.9 L902.3 345.7 L905.2 344.3 L908 343.1 L911.2 342.6 L914.2 343.6 L916.5 346 L917.5 348.9ZM903.7 358.3 L902.7 360.6 L900.7 361.7 L898.5 361.8 L896.3 360.7 L895.7 358.3 L897 356.4 L898.3 354.4 L900.9 354.2 L903 355.9ZM914.2 373 L914.1 375.8 L911.9 377.7 L909.6 378.6 L907.3 379.5 L904.8 379 L901.9 378.4 L900.7 375.7 L900.4 373 L900.8 370.3 L903 368.7 L904.7 366.7 L907.3 365.8 L909.8 366.9 L911.8 368.5 L913.4 370.5ZM917.1 386.5 L916.5 389.2 L915.5 391.8 L913.6 394.2 L910.7 395.4 L907.6 395.2 L904.5 394.6 L902.7 391.9 L901.9 389.1 L900.6 386.5 L901.2 383.6 L903 381.3 L904.7 378.8 L907.7 378.3 L910.6 378.5 L913.3 379.3 L916.3 380.4 L916.4 383.9ZM902.8 392.4 L902.4 394.6 L900.4 395.7 L898 396.5 L896.3 394.6 L895.3 392.4 L896.6 390.4 L898.2 388.8 L900.6 388.6 L902.8 389.9Z" stroke="#0a8a06" stroke-width="1.1" fill="none" /></g><path d="M725.5 260.5H693.5V396.5M891.5 260.5H922.5V396.5" stroke="#a8905a" stroke-width="1" fill="none" /><path d="M725.5 260.5h45M846 260.5h46" stroke="#8a8a8a" stroke-width="1" fill="none" stroke-dasharray="7 2 2 2"/><path d="M725.5 260.5v49M891.5 260.5v49" stroke="#8a8a8a" stroke-width="1" fill="none" stroke-dasharray="7 2 2 2"/><path d="M772.5 263.5H844V311.5H889V396H727.5V311.5H772.5z" fill="url(#hl)"/><path d="M770.5 260.5H846.5V309.5H891.5V396M725.5 396V309.5H770.5V260.5" stroke="#e4683c" stroke-width="1.3" fill="none" /><path d="M772.5 263.5H844V311.5H889V396H727.5V311.5H772.5z" stroke="#e4683c" stroke-width="1" fill="none" /><rect x="784" y="325" width="44" height="29" fill="#fff" opacity=".55"/><text x="805.3" y="336.3" text-anchor="middle" font-family="Liberation Sans" font-size="12" letter-spacing="1" fill="#8d8d93">OPEN</text><text x="805.8" y="351.6" text-anchor="middle" font-family="Liberation Sans" font-size="12" letter-spacing="1.100" fill="#8d8d93">TERRACE</text><path d="M693.5 396.5V628.5M922.5 396.5V628.5" stroke="#e4683c" stroke-width="1.2" fill="none" /><path d="M693.5 396.5H797M813 396.5H922.5" stroke="#e4683c" stroke-width="1.2" fill="none" /><path d="M697.5 400.5V564M918.5 400.5V564M697.5 400.5H797M813 400.5H918.5" stroke="#e4683c" stroke-width="0.9" fill="none" /><path d="M797.5 396v14a14 14 0 0 0 14-14" fill="none" stroke="#9a8d78"/><path d="M797.5 394v16M811.5 394v5" stroke="#8a7d68" stroke-width="1.3" fill="none" /><path d="M747.5 400.5V438M749.5 400.5V438M747.5 468V532M749.5 468V532M747.5 558V564M749.5 558V564" stroke="#e4683c" stroke-width="0.9" fill="none" /><path d="M794.5 447V515M796.5 447V515" stroke="#e4683c" stroke-width="0.9" fill="none" /><path d="M786.5 400.5V431M786.5 530V564" stroke="#8a8a8a" stroke-width="1" fill="none" /><path d="M786.5 429.5H796.5M786.5 431.5H796.5M794.5 400.5V431M796.5 400.5V431" stroke="#e4683c" stroke-width="0.9" fill="none" /><path d="M786.5 530.5H796.5M786.5 532.5H796.5M794.5 531V564M796.5 531V564" stroke="#e4683c" stroke-width="0.9" fill="none" /><rect x="697.50" y="400.50" width="39.50" height="5.00" stroke="#a9773c" stroke-width="1" fill="none" /><rect x="705.00" y="402.50" width="25.50" height="30.00" stroke="#a9773c" stroke-width="1" fill="none" /><path d="M705 412.0h25.5" stroke="#a9773c" stroke-width="0.8" fill="none" /><path d="M705 428.0h25.5" stroke="#a9773c" stroke-width="1.7" fill="none" /><path d="M705.5 407.5l4-3.800 4 3.800-4 3.800zM713.8 407.5l4-3.800 4 3.800-4 3.800zM722.0 407.5l4-3.800 4 3.800-4 3.800z" stroke="#a9773c" stroke-width="0.8" fill="none" /><text x="705.5" y="416.5" font-family="Liberation Sans" font-size="4.4" textLength="24.0" lengthAdjust="spacing" fill="#5d6a8a" opacity="0.85">BED ROOM</text><text x="705.5" y="422.5" font-family="Liberation Sans" font-size="4.4" textLength="24.0" lengthAdjust="spacing" fill="#5d6a8a" opacity="0.85">10'0" X 11'0"</text><rect x="697.50" y="439.50" width="9.50" height="15.00" stroke="#a9773c" stroke-width="1" fill="none" /><circle cx="713.0" cy="447.5" r="3.8" stroke="#a9773c" stroke-width=".9" fill="none"/><path d="M709.2 447.5a3.8 3.8 0 0 1 7.6 0" stroke="#a9773c" stroke-width="1.700" fill="none" transform="rotate(90 713.0 447.5)"/><rect x="697.50" y="558.00" width="39.50" height="5.00" stroke="#a9773c" stroke-width="1" fill="none" /><rect x="705.00" y="527.00" width="25.50" height="30.00" stroke="#a9773c" stroke-width="1" fill="none" /><path d="M705 547.5h25.5" stroke="#a9773c" stroke-width="0.8" fill="none" /><path d="M705 531.5h25.5" stroke="#a9773c" stroke-width="1.7" fill="none" /><path d="M705.5 552l4-3.800 4 3.800-4 3.800zM713.8 552l4-3.800 4 3.800-4 3.800zM722.0 552l4-3.800 4 3.800-4 3.800z" stroke="#a9773c" stroke-width="0.8" fill="none" /><text x="705.5" y="537.5" font-family="Liberation Sans" font-size="4.4" textLength="24.0" lengthAdjust="spacing" fill="#5d6a8a" opacity="0.85">BED ROOM</text><text x="705.5" y="543.0" font-family="Liberation Sans" font-size="4.4" textLength="24.0" lengthAdjust="spacing" fill="#5d6a8a" opacity="0.85">10'0" X 11'0"</text><rect x="697.50" y="505.00" width="9.50" height="15.00" stroke="#a9773c" stroke-width="1" fill="none" /><circle cx="713.0" cy="512.5" r="3.8" stroke="#a9773c" stroke-width=".9" fill="none"/><path d="M709.2 512.5a3.8 3.8 0 0 1 7.6 0" stroke="#a9773c" stroke-width="1.700" fill="none" transform="rotate(90 713.0 512.5)"/><path d="M693.5 454.5H735M697.5 456.5H735M693.5 504.5H735M697.5 506.5H735" stroke="#e4683c" stroke-width="0.9" fill="none" /><path d="M697.5 479.5H749M697.5 481.5H749" stroke="#e4683c" stroke-width="0.9" fill="none" /><path d="M710.5 457V504" stroke="#8a8a8a" stroke-width="1" fill="none" /><ellipse cx="718" cy="469.5" rx="3.300" ry="4.300" stroke="#bf6f6f" stroke-width="1.100" fill="none"/><rect x="714.00" y="475.00" width="8.00" height="3.50" stroke="#bf6f6f" stroke-width="1" fill="none" /><ellipse cx="718" cy="491.5" rx="3.300" ry="4.300" stroke="#bf6f6f" stroke-width="1.100" fill="none"/><rect x="714.00" y="482.50" width="8.00" height="3.50" stroke="#bf6f6f" stroke-width="1" fill="none" /><ellipse cx="742" cy="474.5" rx="4.300" ry="3" stroke="#bf6f6f" stroke-width="1.200" fill="none"/><ellipse cx="742" cy="486" rx="4.300" ry="3" stroke="#bf6f6f" stroke-width="1.200" fill="none"/><path d="M703.5 476.5v8m-3-6.500l6 5m0-5l-6 5" stroke="#bf6f6f" stroke-width="1" fill="none" /><path d="M749 454.5a14 14 0 0 0 14 14M749 482a14 14 0 0 1 14-14" fill="none" stroke="#9a8d78" transform="translate(-28 0) scale(1)" opacity="0"/><path d="M749 439.5a14 14 0 0 0 -14 14M749 467.5a14 14 0 0 1 -14 -14M735 453.5H749" stroke="#9a8d78" stroke-width="1" fill="none" /><path d="M749 504a14 14 0 0 0 -14 14M749 532a14 14 0 0 1 -14 -14M735 518H749" stroke="#9a8d78" stroke-width="1" fill="none" /><path d="M747 456v14M747 502v14" stroke="#8a7d68" stroke-width="1.5" fill="none" /><rect x="752.0" y="401.8" width="31" height="13" rx="3.500" stroke="#a9773c" stroke-width="1.500" fill="#fff"/><rect x="754.2" y="404.0" width="26.6" height="8.6" rx="1.500" stroke="none" fill="url(#sofa)"/><path d="M762.3 403.3v10M772.7 403.3v10" stroke="#a9773c" stroke-width="0.9" fill="none" /><path d="M753.5 411.6h28" stroke="#a9773c" stroke-width="0.9" fill="none" /><rect x="763.00" y="419.00" width="14.00" height="6.60" stroke="#a9773c" stroke-width="1" fill="#fff" /><path d="M761.8 419.3h16.4M761.8 425.3h16.4" stroke="#a9773c" stroke-width="1.5" fill="none" /><rect x="752.0" y="547.5" width="31" height="13" rx="3.500" stroke="#a9773c" stroke-width="1.500" fill="#fff"/><rect x="754.2" y="549.7" width="26.6" height="8.6" rx="1.500" stroke="none" fill="url(#sofa)"/><path d="M762.3 549.0v10M772.7 549.0v10" stroke="#a9773c" stroke-width="0.9" fill="none" /><path d="M753.5 557.3h28" stroke="#a9773c" stroke-width="0.9" fill="none" /><rect x="763.00" y="535.50" width="14.00" height="6.60" stroke="#a9773c" stroke-width="1" fill="#fff" /><path d="M761.8 535.8h16.4M761.8 541.8h16.4" stroke="#a9773c" stroke-width="1.5" fill="none" /><path d="M773.0 452h0.0" stroke="#9aa0aa" stroke-width="1.600" stroke-dasharray="1.400 .8" opacity=".8"/><path d="M773.0 477h0.0" stroke="#9aa0aa" stroke-width="1.600" stroke-dasharray="1.400 .8" opacity=".8"/><text x="752.5" y="454.0" font-family="Liberation Sans" font-size="4.4" textLength="33.0" lengthAdjust="spacing" fill="#4d5468" opacity="0.85">STAFF ROOM-II</text><text x="762.0" y="459.0" font-family="Liberation Sans" font-size="4.4" textLength="14.0" lengthAdjust="spacing" fill="#4d5468" opacity="0.85">LIVING</text><text x="758.0" y="464.0" font-family="Liberation Sans" font-size="4.4" textLength="22.0" lengthAdjust="spacing" fill="#4d5468" opacity="0.85">9'1" X 10'0"</text><text x="753.0" y="499.0" font-family="Liberation Sans" font-size="4.4" textLength="32.0" lengthAdjust="spacing" fill="#4d5468" opacity="0.85">STAFF ROOM-I</text><text x="762.0" y="504.0" font-family="Liberation Sans" font-size="4.4" textLength="14.0" lengthAdjust="spacing" fill="#4d5468" opacity="0.85">LIVING</text><text x="758.0" y="509.0" font-family="Liberation Sans" font-size="4.4" textLength="22.0" lengthAdjust="spacing" fill="#4d5468" opacity="0.85">9'1" X 10'0"</text><rect x="749.50" y="469.50" width="46.00" height="10.00" stroke="#e4683c" stroke-width="0.9" fill="#fff" /><rect x="749.50" y="481.50" width="46.00" height="10.00" stroke="#e4683c" stroke-width="0.9" fill="#fff" /><path d="M749.5 469.5H794.5M749.5 491.5H794.5" stroke="#8a8a8a" stroke-width="1" fill="none" /><text x="757.0" y="476.0" font-family="Liberation Sans" font-size="4.6" textLength="31.0" lengthAdjust="spacing" fill="#3d4454" opacity="0.95">KITCHENETTE</text><text x="757.0" y="487.0" font-family="Liberation Sans" font-size="4.6" textLength="31.0" lengthAdjust="spacing" fill="#3d4454" opacity="0.95">KITCHENETTE</text><path d="M796.5 432a14 14 0 0 0 -14 14h14M796.5 530a14 14 0 0 1 -14 -14h14" stroke="#9a8d78" stroke-width="1" fill="none" /><path d="M693.7 424v29M695.5 424v29M697.3 424v29" stroke="#2aa7e2" stroke-width="1" fill="none" /><path d="M693.7 505v29M695.5 505v29M697.3 505v29" stroke="#2aa7e2" stroke-width="1" fill="none" /><path d="M868.5 400.5V438M866.5 400.5V438M868.5 468V532M866.5 468V532M868.5 558V564M866.5 558V564" stroke="#e4683c" stroke-width="0.9" fill="none" /><path d="M821.5 447V515M819.5 447V515" stroke="#e4683c" stroke-width="0.9" fill="none" /><path d="M829.5 400.5V431M829.5 530V564" stroke="#8a8a8a" stroke-width="1" fill="none" /><path d="M829.5 429.5H819.5M829.5 431.5H819.5M821.5 400.5V431M819.5 400.5V431" stroke="#e4683c" stroke-width="0.9" fill="none" /><path d="M829.5 530.5H819.5M829.5 532.5H819.5M821.5 531V564M819.5 531V564" stroke="#e4683c" stroke-width="0.9" fill="none" /><rect x="879.00" y="400.50" width="39.50" height="5.00" stroke="#a9773c" stroke-width="1" fill="none" /><rect x="885.50" y="402.50" width="25.50" height="30.00" stroke="#a9773c" stroke-width="1" fill="none" /><path d="M885.5 412.0h25.5" stroke="#a9773c" stroke-width="0.8" fill="none" /><path d="M885.5 428.0h25.5" stroke="#a9773c" stroke-width="1.7" fill="none" /><path d="M886.0 407.5l4-3.800 4 3.800-4 3.800zM894.2 407.5l4-3.800 4 3.800-4 3.800zM902.5 407.5l4-3.800 4 3.800-4 3.800z" stroke="#a9773c" stroke-width="0.8" fill="none" /><text x="886.0" y="416.5" font-family="Liberation Sans" font-size="4.4" textLength="24.0" lengthAdjust="spacing" fill="#5d6a8a" opacity="0.85">BED ROOM</text><text x="886.0" y="422.5" font-family="Liberation Sans" font-size="4.4" textLength="24.0" lengthAdjust="spacing" fill="#5d6a8a" opacity="0.85">10'0" X 11'0"</text><rect x="909.00" y="439.50" width="9.50" height="15.00" stroke="#a9773c" stroke-width="1" fill="none" /><circle cx="903.0" cy="447.5" r="3.8" stroke="#a9773c" stroke-width=".9" fill="none"/><path d="M899.2 447.5a3.8 3.8 0 0 1 7.6 0" stroke="#a9773c" stroke-width="1.700" fill="none" transform="rotate(-90 903.0 447.5)"/><rect x="879.00" y="558.00" width="39.50" height="5.00" stroke="#a9773c" stroke-width="1" fill="none" /><rect x="885.50" y="527.00" width="25.50" height="30.00" stroke="#a9773c" stroke-width="1" fill="none" /><path d="M885.5 547.5h25.5" stroke="#a9773c" stroke-width="0.8" fill="none" /><path d="M885.5 531.5h25.5" stroke="#a9773c" stroke-width="1.7" fill="none" /><path d="M886.0 552l4-3.800 4 3.800-4 3.800zM894.2 552l4-3.800 4 3.800-4 3.800zM902.5 552l4-3.800 4 3.800-4 3.800z" stroke="#a9773c" stroke-width="0.8" fill="none" /><text x="886.0" y="537.5" font-family="Liberation Sans" font-size="4.4" textLength="24.0" lengthAdjust="spacing" fill="#5d6a8a" opacity="0.85">BED ROOM</text><text x="886.0" y="543.0" font-family="Liberation Sans" font-size="4.4" textLength="24.0" lengthAdjust="spacing" fill="#5d6a8a" opacity="0.85">10'0" X 11'0"</text><rect x="909.00" y="505.00" width="9.50" height="15.00" stroke="#a9773c" stroke-width="1" fill="none" /><circle cx="903.0" cy="512.5" r="3.8" stroke="#a9773c" stroke-width=".9" fill="none"/><path d="M899.2 512.5a3.8 3.8 0 0 1 7.6 0" stroke="#a9773c" stroke-width="1.700" fill="none" transform="rotate(-90 903.0 512.5)"/><path d="M922.5 454.5H881M918.5 456.5H881M922.5 504.5H881M918.5 506.5H881" stroke="#e4683c" stroke-width="0.9" fill="none" /><path d="M918.5 479.5H867M918.5 481.5H867" stroke="#e4683c" stroke-width="0.9" fill="none" /><path d="M905.5 457V504" stroke="#8a8a8a" stroke-width="1" fill="none" /><ellipse cx="898" cy="469.5" rx="3.300" ry="4.300" stroke="#bf6f6f" stroke-width="1.100" fill="none"/><rect x="894.00" y="475.00" width="8.00" height="3.50" stroke="#bf6f6f" stroke-width="1" fill="none" /><ellipse cx="898" cy="491.5" rx="3.300" ry="4.300" stroke="#bf6f6f" stroke-width="1.100" fill="none"/><rect x="894.00" y="482.50" width="8.00" height="3.50" stroke="#bf6f6f" stroke-width="1" fill="none" /><ellipse cx="874" cy="474.5" rx="4.300" ry="3" stroke="#bf6f6f" stroke-width="1.200" fill="none"/><ellipse cx="874" cy="486" rx="4.300" ry="3" stroke="#bf6f6f" stroke-width="1.200" fill="none"/><path d="M867 454.5a14 14 0 0 0 14 14M867 482a14 14 0 0 1 14-14" fill="none" stroke="#9a8d78" transform="translate(28 0) scale(1)" opacity="0"/><path d="M867 439.5a14 14 0 0 1 14 14M867 467.5a14 14 0 0 0 14 -14M881 453.5H867" stroke="#9a8d78" stroke-width="1" fill="none" /><path d="M867 504a14 14 0 0 1 14 14M867 532a14 14 0 0 0 14 -14M881 518H867" stroke="#9a8d78" stroke-width="1" fill="none" /><path d="M869 456v14M869 502v14" stroke="#8a7d68" stroke-width="1.5" fill="none" /><rect x="832.0" y="401.8" width="31" height="13" rx="3.500" stroke="#a9773c" stroke-width="1.500" fill="#fff"/><rect x="834.2" y="404.0" width="26.6" height="8.6" rx="1.500" stroke="none" fill="url(#sofa)"/><path d="M842.3 403.3v10M852.7 403.3v10" stroke="#a9773c" stroke-width="0.9" fill="none" /><path d="M833.5 411.6h28" stroke="#a9773c" stroke-width="0.9" fill="none" /><rect x="839.00" y="419.00" width="14.00" height="6.60" stroke="#a9773c" stroke-width="1" fill="#fff" /><path d="M837.8 419.3h16.4M837.8 425.3h16.4" stroke="#a9773c" stroke-width="1.5" fill="none" /><rect x="832.0" y="547.5" width="31" height="13" rx="3.500" stroke="#a9773c" stroke-width="1.500" fill="#fff"/><rect x="834.2" y="549.7" width="26.6" height="8.6" rx="1.500" stroke="none" fill="url(#sofa)"/><path d="M842.3 549.0v10M852.7 549.0v10" stroke="#a9773c" stroke-width="0.9" fill="none" /><path d="M833.5 557.3h28" stroke="#a9773c" stroke-width="0.9" fill="none" /><rect x="839.00" y="535.50" width="14.00" height="6.60" stroke="#a9773c" stroke-width="1" fill="#fff" /><path d="M837.8 535.8h16.4M837.8 541.8h16.4" stroke="#a9773c" stroke-width="1.5" fill="none" /><path d="M845.0 452h0.0" stroke="#9aa0aa" stroke-width="1.600" stroke-dasharray="1.400 .8" opacity=".8"/><path d="M845.0 477h0.0" stroke="#9aa0aa" stroke-width="1.600" stroke-dasharray="1.400 .8" opacity=".8"/><text x="824.5" y="454.0" font-family="Liberation Sans" font-size="4.4" textLength="33.0" lengthAdjust="spacing" fill="#4d5468" opacity="0.85">STAFF ROOM-II</text><text x="834.0" y="459.0" font-family="Liberation Sans" font-size="4.4" textLength="14.0" lengthAdjust="spacing" fill="#4d5468" opacity="0.85">LIVING</text><text x="830.0" y="464.0" font-family="Liberation Sans" font-size="4.4" textLength="22.0" lengthAdjust="spacing" fill="#4d5468" opacity="0.85">9'1" X 10'0"</text><text x="825.0" y="499.0" font-family="Liberation Sans" font-size="4.4" textLength="32.0" lengthAdjust="spacing" fill="#4d5468" opacity="0.85">STAFF ROOM-I</text><text x="834.0" y="504.0" font-family="Liberation Sans" font-size="4.4" textLength="14.0" lengthAdjust="spacing" fill="#4d5468" opacity="0.85">LIVING</text><text x="830.0" y="509.0" font-family="Liberation Sans" font-size="4.4" textLength="22.0" lengthAdjust="spacing" fill="#4d5468" opacity="0.85">9'1" X 10'0"</text><rect x="820.50" y="469.50" width="46.00" height="10.00" stroke="#e4683c" stroke-width="0.9" fill="#fff" /><rect x="820.50" y="481.50" width="46.00" height="10.00" stroke="#e4683c" stroke-width="0.9" fill="#fff" /><path d="M866.5 469.5H821.5M866.5 491.5H821.5" stroke="#8a8a8a" stroke-width="1" fill="none" /><text x="828.0" y="476.0" font-family="Liberation Sans" font-size="4.6" textLength="31.0" lengthAdjust="spacing" fill="#3d4454" opacity="0.95">KITCHENETTE</text><text x="828.0" y="487.0" font-family="Liberation Sans" font-size="4.6" textLength="31.0" lengthAdjust="spacing" fill="#3d4454" opacity="0.95">KITCHENETTE</text><path d="M819.5 432a14 14 0 0 1 14 14h-14M819.5 530a14 14 0 0 0 14 -14h-14" stroke="#9a8d78" stroke-width="1" fill="none" /><path d="M922.3 424v29M920.5 424v29M918.7 424v29" stroke="#2aa7e2" stroke-width="1" fill="none" /><path d="M922.3 505v29M920.5 505v29M918.7 505v29" stroke="#2aa7e2" stroke-width="1" fill="none" /><path d="M808.5 411v45M808.5 515v50" stroke="#505050" stroke-width="2.4" fill="none" stroke-dasharray="1.800 .7" opacity=".8"/><path d="M693.5 561.5H795.5M693.5 564.5H797.5V530M820.5 530V588M822.5 562.5V588M820.5 560.5H922.5M822.5 562.5H918.5" stroke="#e4683c" stroke-width="0.9" fill="none" /><path d="M820.5 604V626M822.5 604V626M918.5 562.5V626" stroke="#e4683c" stroke-width="0.9" fill="none" /><path d="M722.1 565v18M722.1 607v18.500M726.3 565v18M726.3 607v18.500M730.5 565v18M730.5 607v18.500M734.7 565v18M734.7 607v18.500M738.9 565v18M738.9 607v18.500M743.1 565v18M743.1 607v18.500M747.3 565v18M747.3 607v18.500" stroke="#a58a1c" stroke-width="1.2" fill="none" /><path d="M698.6 584.3h18M698.6 588.5h18M698.6 592.8h18M698.6 597.0h18M698.6 601.3h18M698.6 605.5h18" stroke="#a58a1c" stroke-width="1.2" fill="none" /><rect x="717.10" y="583.00" width="30.50" height="24.00" stroke="none" stroke-width="0" fill="#fff" /><path d="M747.4 582.5v25" stroke="#e4683c" stroke-width="1" fill="none" /><path d="M716.1 582.8h31.800M716.1 607h31.800" stroke="#2d6db5" stroke-width="2" fill="none" /><path d="M716.9 582v26" stroke="#2d6db5" stroke-width="1.6" fill="none" /><path d="M718.1 584.5l28.500 21.500M746.6 584.5l-28.500 21.500" stroke="#1f2fe0" stroke-width="1" fill="none" /><path d="M694 564.5v20M696.5 564.5v20M698.5 564.5v20M694 605v20.500M696.5 605v20.500M698.5 605v20.500" stroke="#2aa7e2" stroke-width="1.1" fill="none" /><path d="M751.5 574.2h-42.900v41.200h23.100M695.2 593.5l24.500 7.900" stroke="#f019e0" stroke-width="1.2" fill="none" /><path d="M721 571.5l7 2.700h-6M721 612.7l7 2.700h-6M705 597l1.500 5.500M711 598h4" stroke="#f019e0" stroke-width="1.1" fill="none" /><text x="751.8" y="574.7" font-family="Liberation Sans" font-size="4.4" textLength="5.5" lengthAdjust="spacing" fill="#8a7a9a" opacity="0.85">DN</text><rect x="772.4" y="599.3" width="10.5" height="11.5" rx="3" stroke="#a9773c" stroke-width="1.300" fill="#fff"/><path d="M778.2 599.9H775.4a2.500 2.500 0 0 0 -2.400 2.500v5.3a2.500 2.500 0 0 0 2.400 2.500H778.2z" fill="#a9773c"/><rect x="778.2" y="601.6" width="4.0" height="6.2" fill="#fff" stroke="#a9773c" stroke-width=".9"/><rect x="805.8" y="599.3" width="10.5" height="11.5" rx="3" stroke="#a9773c" stroke-width="1.300" fill="#fff"/><path d="M810.5 599.9H813.3a2.500 2.500 0 0 1 2.400 2.500v5.3a2.500 2.500 0 0 1 -2.400 2.500H810.5z" fill="#a9773c"/><rect x="806.5" y="601.6" width="4.0" height="6.2" fill="#fff" stroke="#a9773c" stroke-width=".9"/><rect x="788.00" y="600.30" width="14.50" height="6.30" stroke="#a9773c" stroke-width="1" fill="#fff" /><path d="M786.8 600.6h16.9M786.8 606.3h16.9" stroke="#a9773c" stroke-width="1.5" fill="none" /><rect x="778.0" y="611.3" width="31" height="12.5" rx="3.500" stroke="#a9773c" stroke-width="1.500" fill="#fff"/><rect x="780.2" y="613.5" width="26.6" height="8.1" rx="1.500" stroke="none" fill="url(#sofa)"/><path d="M788.3 612.8v9.5M798.7 612.8v9.5" stroke="#a9773c" stroke-width="0.9" fill="none" /><path d="M779.5 620.6h28" stroke="#a9773c" stroke-width="0.9" fill="none" /><circle cx="841.0" cy="575.5" r="3.300" stroke="#a9773c" stroke-width="1" fill="none"/><circle cx="841.0" cy="583.4" r="3.300" stroke="#a9773c" stroke-width="1" fill="none"/><circle cx="841.0" cy="591.3" r="3.300" stroke="#a9773c" stroke-width="1" fill="none"/><circle cx="841.0" cy="599.2" r="3.300" stroke="#a9773c" stroke-width="1" fill="none"/><circle cx="841.0" cy="607.1" r="3.300" stroke="#a9773c" stroke-width="1" fill="none"/><circle cx="841.0" cy="615.0" r="3.300" stroke="#a9773c" stroke-width="1" fill="none"/><circle cx="852.8" cy="575.5" r="3.300" stroke="#a9773c" stroke-width="1" fill="none"/><circle cx="852.8" cy="583.4" r="3.300" stroke="#a9773c" stroke-width="1" fill="none"/><circle cx="852.8" cy="591.3" r="3.300" stroke="#a9773c" stroke-width="1" fill="none"/><circle cx="852.8" cy="599.2" r="3.300" stroke="#a9773c" stroke-width="1" fill="none"/><circle cx="852.8" cy="607.1" r="3.300" stroke="#a9773c" stroke-width="1" fill="none"/><circle cx="852.8" cy="615.0" r="3.300" stroke="#a9773c" stroke-width="1" fill="none"/><circle cx="864.6" cy="575.5" r="3.300" stroke="#a9773c" stroke-width="1" fill="none"/><circle cx="864.6" cy="583.4" r="3.300" stroke="#a9773c" stroke-width="1" fill="none"/><circle cx="864.6" cy="591.3" r="3.300" stroke="#a9773c" stroke-width="1" fill="none"/><circle cx="864.6" cy="599.2" r="3.300" stroke="#a9773c" stroke-width="1" fill="none"/><circle cx="864.6" cy="607.1" r="3.300" stroke="#a9773c" stroke-width="1" fill="none"/><circle cx="864.6" cy="615.0" r="3.300" stroke="#a9773c" stroke-width="1" fill="none"/><circle cx="876.4" cy="575.5" r="3.300" stroke="#a9773c" stroke-width="1" fill="none"/><circle cx="876.4" cy="583.4" r="3.300" stroke="#a9773c" stroke-width="1" fill="none"/><circle cx="876.4" cy="591.3" r="3.300" stroke="#a9773c" stroke-width="1" fill="none"/><circle cx="876.4" cy="599.2" r="3.300" stroke="#a9773c" stroke-width="1" fill="none"/><circle cx="876.4" cy="607.1" r="3.300" stroke="#a9773c" stroke-width="1" fill="none"/><circle cx="876.4" cy="615.0" r="3.300" stroke="#a9773c" stroke-width="1" fill="none"/><circle cx="888.2" cy="575.5" r="3.300" stroke="#a9773c" stroke-width="1" fill="none"/><circle cx="888.2" cy="583.4" r="3.300" stroke="#a9773c" stroke-width="1" fill="none"/><circle cx="888.2" cy="591.3" r="3.300" stroke="#a9773c" stroke-width="1" fill="none"/><circle cx="888.2" cy="599.2" r="3.300" stroke="#a9773c" stroke-width="1" fill="none"/><circle cx="888.2" cy="607.1" r="3.300" stroke="#a9773c" stroke-width="1" fill="none"/><circle cx="888.2" cy="615.0" r="3.300" stroke="#a9773c" stroke-width="1" fill="none"/><text x="862.0" y="569.0" font-family="Liberation Sans" font-size="4.4" textLength="36.0" lengthAdjust="spacing" fill="#5d6a8a" opacity="0.85">COMMON ROOM</text><text x="867.5" y="574.0" font-family="Liberation Sans" font-size="4.4" textLength="25.0" lengthAdjust="spacing" fill="#5d6a8a" opacity="0.85">16'0" X 12'0"</text><rect x="914.50" y="580.50" width="4.00" height="27.00" stroke="#a9773c" stroke-width="1" fill="none" /><path d="M916.5 586v16" stroke="#a9773c" stroke-width="1" fill="none" /><path d="M693.5 625.5H922.5M693.5 629.5H922.5" stroke="#e4683c" stroke-width="1" fill="none" /><rect x="753.00" y="625.50" width="39.50" height="4.00" stroke="#2aa7e2" stroke-width="1" fill="#fff" /><path d="M753 627.5h39.500" stroke="#2aa7e2" stroke-width="1" fill="none" /><rect x="851.00" y="625.50" width="39.50" height="4.00" stroke="#2aa7e2" stroke-width="1" fill="#fff" /><path d="M851 627.5h39.500" stroke="#2aa7e2" stroke-width="1" fill="none" /><clipPath id="cv693"><rect x="725.5" y="629.5" width="167.0" height="39.5"/></clipPath><path d="M696.1 630.3l5.600 4.600 5.200-4.600M711.9 630.3l5.600 4.600 5.200-4.600M727.8 630.3l5.600 4.600 5.200-4.600M743.6 630.3l5.600 4.600 5.200-4.600M759.5 630.3l5.600 4.600 5.200-4.600M775.4 630.3l5.600 4.600 5.200-4.600M791.2 630.3l5.600 4.600 5.200-4.600M807.0 630.3l5.600 4.600 5.200-4.600M822.9 630.3l5.600 4.600 5.200-4.600M838.7 630.3l5.600 4.600 5.200-4.600M854.6 630.3l5.600 4.600 5.200-4.600M870.4 630.3l5.600 4.600 5.200-4.600M886.3 630.3l5.600 4.600 5.200-4.600M704.0 638.2l5.600 4.600 5.200-4.600M719.9 638.2l5.600 4.600 5.200-4.600M735.7 638.2l5.600 4.600 5.200-4.600M751.6 638.2l5.600 4.600 5.200-4.600M767.4 638.2l5.600 4.600 5.200-4.600M783.3 638.2l5.600 4.600 5.200-4.600M799.1 638.2l5.600 4.600 5.200-4.600M815.0 638.2l5.600 4.600 5.200-4.600M830.8 638.2l5.600 4.600 5.200-4.600M846.7 638.2l5.600 4.600 5.200-4.600M862.5 638.2l5.600 4.600 5.200-4.600M878.4 638.2l5.600 4.600 5.200-4.600M696.1 646.2l5.600 4.600 5.200-4.600M711.9 646.2l5.600 4.600 5.200-4.600M727.8 646.2l5.600 4.600 5.200-4.600M743.6 646.2l5.600 4.600 5.200-4.600M759.5 646.2l5.600 4.600 5.200-4.600M775.4 646.2l5.600 4.600 5.200-4.600M791.2 646.2l5.600 4.600 5.200-4.600M807.0 646.2l5.600 4.600 5.200-4.600M822.9 646.2l5.600 4.600 5.200-4.600M838.7 646.2l5.600 4.600 5.200-4.600M854.6 646.2l5.600 4.600 5.200-4.600M870.4 646.2l5.600 4.600 5.200-4.600M886.3 646.2l5.600 4.600 5.200-4.600M704.0 654.1l5.600 4.600 5.200-4.600M719.9 654.1l5.600 4.600 5.200-4.600M735.7 654.1l5.600 4.600 5.200-4.600M751.6 654.1l5.600 4.600 5.200-4.600M767.4 654.1l5.600 4.600 5.200-4.600M783.3 654.1l5.600 4.600 5.200-4.600M799.1 654.1l5.600 4.600 5.200-4.600M815.0 654.1l5.600 4.600 5.200-4.600M830.8 654.1l5.600 4.600 5.200-4.600M846.7 654.1l5.600 4.600 5.200-4.600M862.5 654.1l5.600 4.600 5.200-4.600M878.4 654.1l5.600 4.600 5.200-4.600M696.1 662.1l5.600 4.600 5.200-4.600M711.9 662.1l5.600 4.600 5.200-4.600M727.8 662.1l5.600 4.600 5.200-4.600M743.6 662.1l5.600 4.600 5.200-4.600M759.5 662.1l5.600 4.600 5.200-4.600M775.4 662.1l5.600 4.600 5.200-4.600M791.2 662.1l5.600 4.600 5.200-4.600M807.0 662.1l5.600 4.600 5.200-4.600M822.9 662.1l5.600 4.600 5.200-4.600M838.7 662.1l5.600 4.600 5.200-4.600M854.6 662.1l5.600 4.600 5.200-4.600M870.4 662.1l5.600 4.600 5.200-4.600M886.3 662.1l5.600 4.600 5.200-4.600" stroke="#7d7d7d" stroke-width=".8" fill="none" clip-path="url(#cv693)"/><rect x="693.50" y="629.00" width="32.00" height="40.50" stroke="#a8905a" stroke-width="1" fill="url(#yard)" /><rect x="892.50" y="629.00" width="30.00" height="40.50" stroke="#a8905a" stroke-width="1" fill="url(#yard)" /><g transform="translate(709.3 643.2) rotate(-20)"><ellipse cx="-4.800" cy="1.800" rx="5.300" ry="10.300" fill="#19360f"/><ellipse cx="-.3" cy="-.5" rx="5" ry="10.300" fill="#2f7a22"/><ellipse cx="4.800" cy="-1.200" rx="5" ry="9.300" fill="#4a9a30"/><path d="M-1.500 -3h1M0 -1h1M1 -4.500h1M-.5 1.500h1M1.500 .5h1M.5 -2.500h1M2 3h1M-1 -.5h1" stroke="#a8785a" stroke-width="1"/></g><g transform="translate(906.5 643.2) rotate(-20)"><ellipse cx="-4.800" cy="1.800" rx="5.300" ry="10.300" fill="#19360f"/><ellipse cx="-.3" cy="-.5" rx="5" ry="10.300" fill="#2f7a22"/><ellipse cx="4.800" cy="-1.200" rx="5" ry="9.300" fill="#4a9a30"/><path d="M-1.500 -3h1M0 -1h1M1 -4.500h1M-.5 1.500h1M1.500 .5h1M.5 -2.500h1M2 3h1M-1 -.5h1" stroke="#a8785a" stroke-width="1"/></g><path d="M725.5 629V669.5H892.5V629" stroke="#e4683c" stroke-width="1" fill="none" /><circle cx="729" cy="665" r="1.800" stroke="#e4683c" fill="#fff" stroke-width=".9"/><circle cx="808" cy="665" r="1.800" stroke="#e4683c" fill="#fff" stroke-width=".9"/><circle cx="887.5" cy="665" r="1.800" stroke="#e4683c" fill="#fff" stroke-width=".9"/><text x="744.5" y="683.8" font-family="Liberation Sans" font-size="11.800" letter-spacing="1.14" fill="#101020">FIRST FLOOR PLAN</text><path d="M744.0 686.5h130.0" stroke="#101020" stroke-width="1"/><rect x="1018.50" y="260.50" width="31.00" height="136.00" stroke="none" stroke-width="0" fill="#fff" /><rect x="1018.50" y="260.50" width="31.00" height="136.00" stroke="none" stroke-width="0" fill="url(#stip)" /><clipPath id="c21"><rect x="1018.5" y="260.5" width="31" height="136"/></clipPath><g clip-path="url(#c21)"><path d="M1040.9 268.7 L1040.1 271.3 L1038.3 273.1 L1036.6 275.5 L1033.8 276 L1031.2 275 L1029 273.5 L1028 271.1 L1027.9 268.7 L1027.8 266.2 L1028.9 263.8 L1031.5 263.1 L1033.8 261.4 L1036.2 262.9 L1038.3 264.2 L1039.4 266.4ZM1041.8 282.5 L1040.8 285.5 L1038.4 287.4 L1036.6 289.6 L1034 290.9 L1031.1 290.2 L1027.8 290.6 L1026.1 287.8 L1025 285.2 L1023.3 282.5 L1025 279.7 L1025.3 276.4 L1028.2 275.1 L1031 273.9 L1033.9 274.3 L1036.8 275 L1038.7 277.3 L1039.8 279.8ZM1046 288.2 L1044.7 290.3 L1043.2 292.4 L1040.5 292.3 L1038.5 290.6 L1037.8 288.2 L1038.7 285.9 L1040.6 284.4 L1042.9 285.1 L1044.9 286ZM1042.7 302.9 L1042.1 305.8 L1039.8 307.6 L1037.7 309 L1035.2 309.6 L1032.6 309 L1029.7 308.3 L1029.1 305.4 L1029.2 302.9 L1029.5 300.6 L1030.1 297.8 L1032.2 295.8 L1035.2 296.1 L1037.8 296.6 L1040 298 L1041.8 300.1ZM1039.6 317 L1039.2 320 L1037.1 322.2 L1034.9 323.9 L1032.4 325.2 L1029.3 326.2 L1026.8 324.2 L1024.2 322.6 L1023.2 319.8 L1023.1 317 L1023.6 314.3 L1023.9 311.1 L1026.4 309.1 L1029.5 308.7 L1032.5 308.2 L1035.4 309.3 L1038.1 311 L1039.8 313.8ZM1045.8 323.7 L1044.6 326 L1042.7 327.7 L1040.2 327.3 L1038.5 325.8 L1037.9 323.7 L1038 321.2 L1040.4 320.5 L1042.4 320.6 L1044.8 321.2ZM1042.5 337.9 L1040.6 340.2 L1039.5 342.4 L1037.5 343.8 L1035 344.5 L1032.7 343.6 L1030.8 342.1 L1029 340.4 L1027.5 337.9 L1028 334.9 L1029.9 332.8 L1032.5 331.6 L1035 331.5 L1038 330.8 L1039.9 333 L1041.7 335.1ZM1039.8 351.2 L1039.1 354.3 L1037.7 357.1 L1034.9 358.8 L1032 359.5 L1029 359.8 L1025.9 359.2 L1024.2 356.5 L1022.4 354.1 L1022.4 351.2 L1022 348.1 L1024.6 346.2 L1026.1 343.4 L1028.9 341.9 L1031.9 343.6 L1034.9 343.6 L1037.3 345.5 L1039.2 348ZM1045.3 357.7 L1045.1 360.2 L1042.9 361.7 L1040.5 360.9 L1038.9 359.6 L1038.3 357.7 L1039 355.8 L1040.4 354.1 L1042.6 354.5 L1045 355.2ZM1041.7 372.2 L1040.8 374.7 L1039.6 377 L1037.2 378 L1034.8 378.4 L1032.4 378 L1030.2 376.9 L1028.2 375 L1027.9 372.2 L1029.3 369.9 L1029.7 367.1 L1032 365.3 L1034.8 364.9 L1037.6 365.5 L1039 368 L1041 369.6ZM1038.6 386.6 L1039.1 389.7 L1036.9 391.8 L1035.1 394.3 L1032.1 394.7 L1029.3 394.3 L1026.4 393.9 L1024.3 391.9 L1021.9 389.8 L1022.4 386.6 L1022.5 383.6 L1024 381 L1025.9 378.4 L1029.3 378.8 L1032.2 377.9 L1034.9 379.1 L1037.5 380.8 L1039.5 383.4ZM1045.1 392.8 L1044.4 395.1 L1042.3 395.9 L1040 396.8 L1037.8 395.4 L1037.7 392.8 L1038.4 390.7 L1040 388.6 L1042.3 389.6 L1044 390.9Z" stroke="#8c8c8c" stroke-width="1.1" fill="none" /></g><rect x="1216.50" y="260.50" width="31.00" height="136.00" stroke="none" stroke-width="0" fill="#fff" /><rect x="1216.50" y="260.50" width="31.00" height="136.00" stroke="none" stroke-width="0" fill="url(#stip)" /><clipPath id="c22"><rect x="1216.5" y="260.5" width="31" height="136"/></clipPath><g clip-path="url(#c22)"><path d="M1238.4 268.1 L1239.5 271.1 L1236.8 272.5 L1234.8 273.8 L1232.4 275.2 L1229.9 274.2 L1227.1 273.4 L1226.6 270.6 L1224.8 268.1 L1226.4 265.7 L1227.5 263.2 L1229.5 261.1 L1232.4 261 L1235.3 261.2 L1237.5 263.1 L1237.9 265.8ZM1243.5 282.3 L1242.8 285 L1242.3 288.2 L1239.6 289.8 L1236.9 291.5 L1233.7 291.2 L1230.5 290.4 L1228.6 287.9 L1226.8 285.3 L1226.5 282.3 L1227.6 279.5 L1228 276.2 L1231.1 275.1 L1233.7 273.3 L1236.9 273 L1239.7 274.6 L1241.4 277.2 L1243.9 279.1ZM1227.9 288.2 L1227.8 290.4 L1225.7 291.3 L1223.3 292.3 L1221.6 290.4 L1220.8 288.2 L1221.7 286 L1223.4 284.4 L1226 284.1 L1227.6 286.1ZM1237.7 303.3 L1237.7 306 L1236.1 308.1 L1233.8 309.5 L1231.2 310.4 L1228.6 309.6 L1227 307.6 L1224.1 306.2 L1224.7 303.3 L1225.1 300.7 L1226.6 298.6 L1228.3 296.3 L1231.2 295.7 L1233.9 297 L1235.9 298.6 L1236.9 301ZM1244 316.4 L1243.1 319.3 L1241.6 321.8 L1239.5 323.6 L1236.7 324.3 L1233.9 324.1 L1231 323.9 L1228.3 322.3 L1227 319.5 L1227.2 316.4 L1226.9 313.4 L1229.3 311.4 L1231.1 309.1 L1233.7 307.4 L1236.9 307.2 L1239.6 309 L1242.4 310.5 L1243.4 313.5ZM1228.9 323.3 L1227.8 325.7 L1225.7 326.9 L1223.3 327.2 L1221.3 325.6 L1220.9 323.3 L1221.2 320.9 L1223.2 319.3 L1225.7 319.5 L1228 320.7ZM1237.6 337.9 L1236.6 340.4 L1234.9 342.3 L1233.3 344.5 L1230.5 344.6 L1228.1 343.8 L1226.3 342.1 L1223.5 340.8 L1224 337.9 L1224.9 335.6 L1226.1 333.5 L1228.1 332 L1230.5 330.4 L1232.9 332.1 L1235.1 333.4 L1236.1 335.6ZM1242.8 351.2 L1242.9 354.3 L1241.6 357.2 L1239 359.1 L1235.8 358.8 L1233 359.4 L1229.8 359.2 L1228.5 356.2 L1226.9 353.9 L1225.9 351.2 L1226.6 348.3 L1227.5 345.4 L1229.9 343.4 L1233 342.8 L1235.9 343.1 L1238.5 344.1 L1240.7 345.9 L1241.8 348.5ZM1228.9 357.6 L1227.9 359.9 L1225.7 360.7 L1223.5 361.2 L1221.5 359.9 L1221.4 357.6 L1221.6 355.3 L1223.7 354.5 L1225.9 353.6 L1227.3 355.7ZM1239.2 373.1 L1237.6 375.5 L1236.6 377.9 L1234.1 378.8 L1231.8 379.6 L1228.9 380 L1226.6 378.3 L1226.3 375.3 L1225.2 373.1 L1225.2 370.4 L1227.4 368.7 L1229 366.3 L1231.8 365.6 L1234.4 366.7 L1236.4 368.5 L1238.6 370.2ZM1242.7 385.8 L1242 388.6 L1241.6 391.8 L1238.8 393.3 L1236.1 394.7 L1232.9 394.9 L1229.8 394 L1228.4 391 L1226.6 388.7 L1225.3 385.8 L1226 382.7 L1228.1 380.4 L1230.1 378.2 L1233.1 377.9 L1235.9 378 L1238.4 379.1 L1240.9 380.5 L1242.2 383.1ZM1227.9 393.1 L1227.6 395.3 L1225.8 397.1 L1223.3 396.8 L1221.4 395.3 L1220.4 393.1 L1221.9 391.2 L1223.2 388.9 L1225.8 389.2 L1227.9 390.6Z" stroke="#8c8c8c" stroke-width="1.1" fill="none" /></g><path d="M1049.5 260.5H1018.5V396.5M1216.5 260.5H1247.5V396.5" stroke="#a8905a" stroke-width="1" fill="none" /><path d="M1049.5 260.5h46M1170 260.5h46" stroke="#8a8a8a" stroke-width="1" fill="none" stroke-dasharray="7 2 2 2"/><path d="M1098 263.5H1168V312H1214V396H1051.5V312H1098z" fill="url(#hl)"/><path d="M1095.5 260.5H1170.5V309.5H1216.5V396M1049.5 396V260.5M1049.5 309.5H1095.5V260.5" stroke="#8c8c8c" stroke-width="1.2" fill="none" /><path d="M1098 263.5H1168V312H1214V396H1051.5V312H1098z" stroke="#8c8c8c" stroke-width="1" fill="none" /><rect x="1106" y="324" width="54" height="30" fill="#fff" opacity=".55"/><text x="1133" y="336.3" text-anchor="middle" font-family="Liberation Sans" font-size="12" letter-spacing="1.300" fill="#8d8d93">LOWER</text><text x="1134" y="351.6" text-anchor="middle" font-family="Liberation Sans" font-size="12" letter-spacing="1.100" fill="#8d8d93">TERRACE</text><rect x="1018.50" y="637.00" width="31.00" height="32.50" stroke="#a8905a" stroke-width="1" fill="#fff" /><rect x="1216.50" y="637.00" width="31.00" height="32.50" stroke="#a8905a" stroke-width="1" fill="#fff" /><circle cx="1034.5" cy="644" r="11" fill="#2a7a22"/><path d="M1024.0 642a11 11 0 0 0 14.3 12.5c-3-4-5-10-2-17.6c-4 0-7 2-9.9 5.5z" fill="#16380f"/><circle cx="1037.5" cy="641.5" r="6.1" fill="#4c9a36"/><path d="M1032.5 639l5 6M1037.5 638l-4 7M1031.5 643h8M1035.5 637v8" stroke="#e8e0d8" stroke-width=".7"/><circle cx="1231.5" cy="644" r="11" fill="#2a7a22"/><path d="M1221.0 642a11 11 0 0 0 14.3 12.5c-3-4-5-10-2-17.6c-4 0-7 2-9.9 5.5z" fill="#16380f"/><circle cx="1234.5" cy="641.5" r="6.1" fill="#4c9a36"/><path d="M1229.5 639l5 6M1234.5 638l-4 7M1228.5 643h8M1232.5 637v8" stroke="#e8e0d8" stroke-width=".7"/><rect x="1049.5" y="637" width="167" height="32.500" fill="url(#lr)"/><path d="M1049.5 669.5L1083 649H1183L1216.5 669.5z" fill="#e25a3a" opacity=".7"/><path d="M1063 637H1203L1183 649H1083z" fill="#a83018" opacity=".35"/><path d="M1049.5 669.5L1083 649H1183L1216.5 669.5M1183 649L1203 637M1083 649L1063 637" stroke="#e8956a" stroke-width="0.8" fill="none" /><rect x="1011" y="389" width="245" height="248" fill="#cd3502"/><rect x="1018.5" y="396" width="228.5" height="234" fill="url(#rt)"/><path d="M1018.5 396L1133.5 462L1247 396z" fill="url(#rtv)"/><path d="M1018.5 630L1133.5 563L1247 630z" fill="url(#rtv)"/><defs><linearGradient id="fL" gradientUnits="userSpaceOnUse" x1="1018.5" x2="1133.5" y1="0" y2="0"><stop offset="0" stop-color="#4a0c00" stop-opacity="0"/><stop offset=".12" stop-color="#4a0c00" stop-opacity=".04"/><stop offset=".35" stop-color="#4a0c00" stop-opacity=".2"/><stop offset=".65" stop-color="#4a0c00" stop-opacity=".38"/><stop offset="1" stop-color="#4a0c00" stop-opacity=".52"/></linearGradient><linearGradient id="fR" gradientUnits="userSpaceOnUse" x1="1247" x2="1133.5" y1="0" y2="0"><stop offset="0" stop-color="#4a0c00" stop-opacity="0"/><stop offset=".12" stop-color="#4a0c00" stop-opacity=".04"/><stop offset=".35" stop-color="#4a0c00" stop-opacity=".2"/><stop offset=".65" stop-color="#4a0c00" stop-opacity=".38"/><stop offset="1" stop-color="#4a0c00" stop-opacity=".52"/></linearGradient><linearGradient id="fT" gradientUnits="userSpaceOnUse" x1="0" x2="0" y1="396" y2="462"><stop offset="0" stop-color="#4a0c00" stop-opacity="0"/><stop offset=".3" stop-color="#4a0c00" stop-opacity=".08"/><stop offset="1" stop-color="#4a0c00" stop-opacity=".42"/></linearGradient><linearGradient id="fB" gradientUnits="userSpaceOnUse" x1="0" x2="0" y1="630" y2="563"><stop offset="0" stop-color="#4a0c00" stop-opacity="0"/><stop offset=".3" stop-color="#4a0c00" stop-opacity=".08"/><stop offset="1" stop-color="#4a0c00" stop-opacity=".42"/></linearGradient></defs><path d="M1018.5 396L1133.5 462V563L1018.5 630z" fill="url(#fL)"/><path d="M1247 396L1133.5 462V563L1247 630z" fill="url(#fR)"/><path d="M1018.5 396L1133.5 462L1247 396z" fill="url(#fT)"/><path d="M1018.5 630L1133.5 563L1247 630z" fill="url(#fB)"/><path d="M1018.5 396L1133.5 462L1247 396M1133.5 462V563M1018.5 630L1133.5 563L1247 630" stroke="#f0a070" stroke-width="0.8" fill="none" stroke-dasharray="4 1"/><text x="1094.5" y="683.8" font-family="Liberation Sans" font-size="11.800" letter-spacing="1.23" fill="#101020">ROOF PLAN</text><path d="M1094.0 686.5h79.0" stroke="#101020" stroke-width="1"/></svg>
</body></html>
